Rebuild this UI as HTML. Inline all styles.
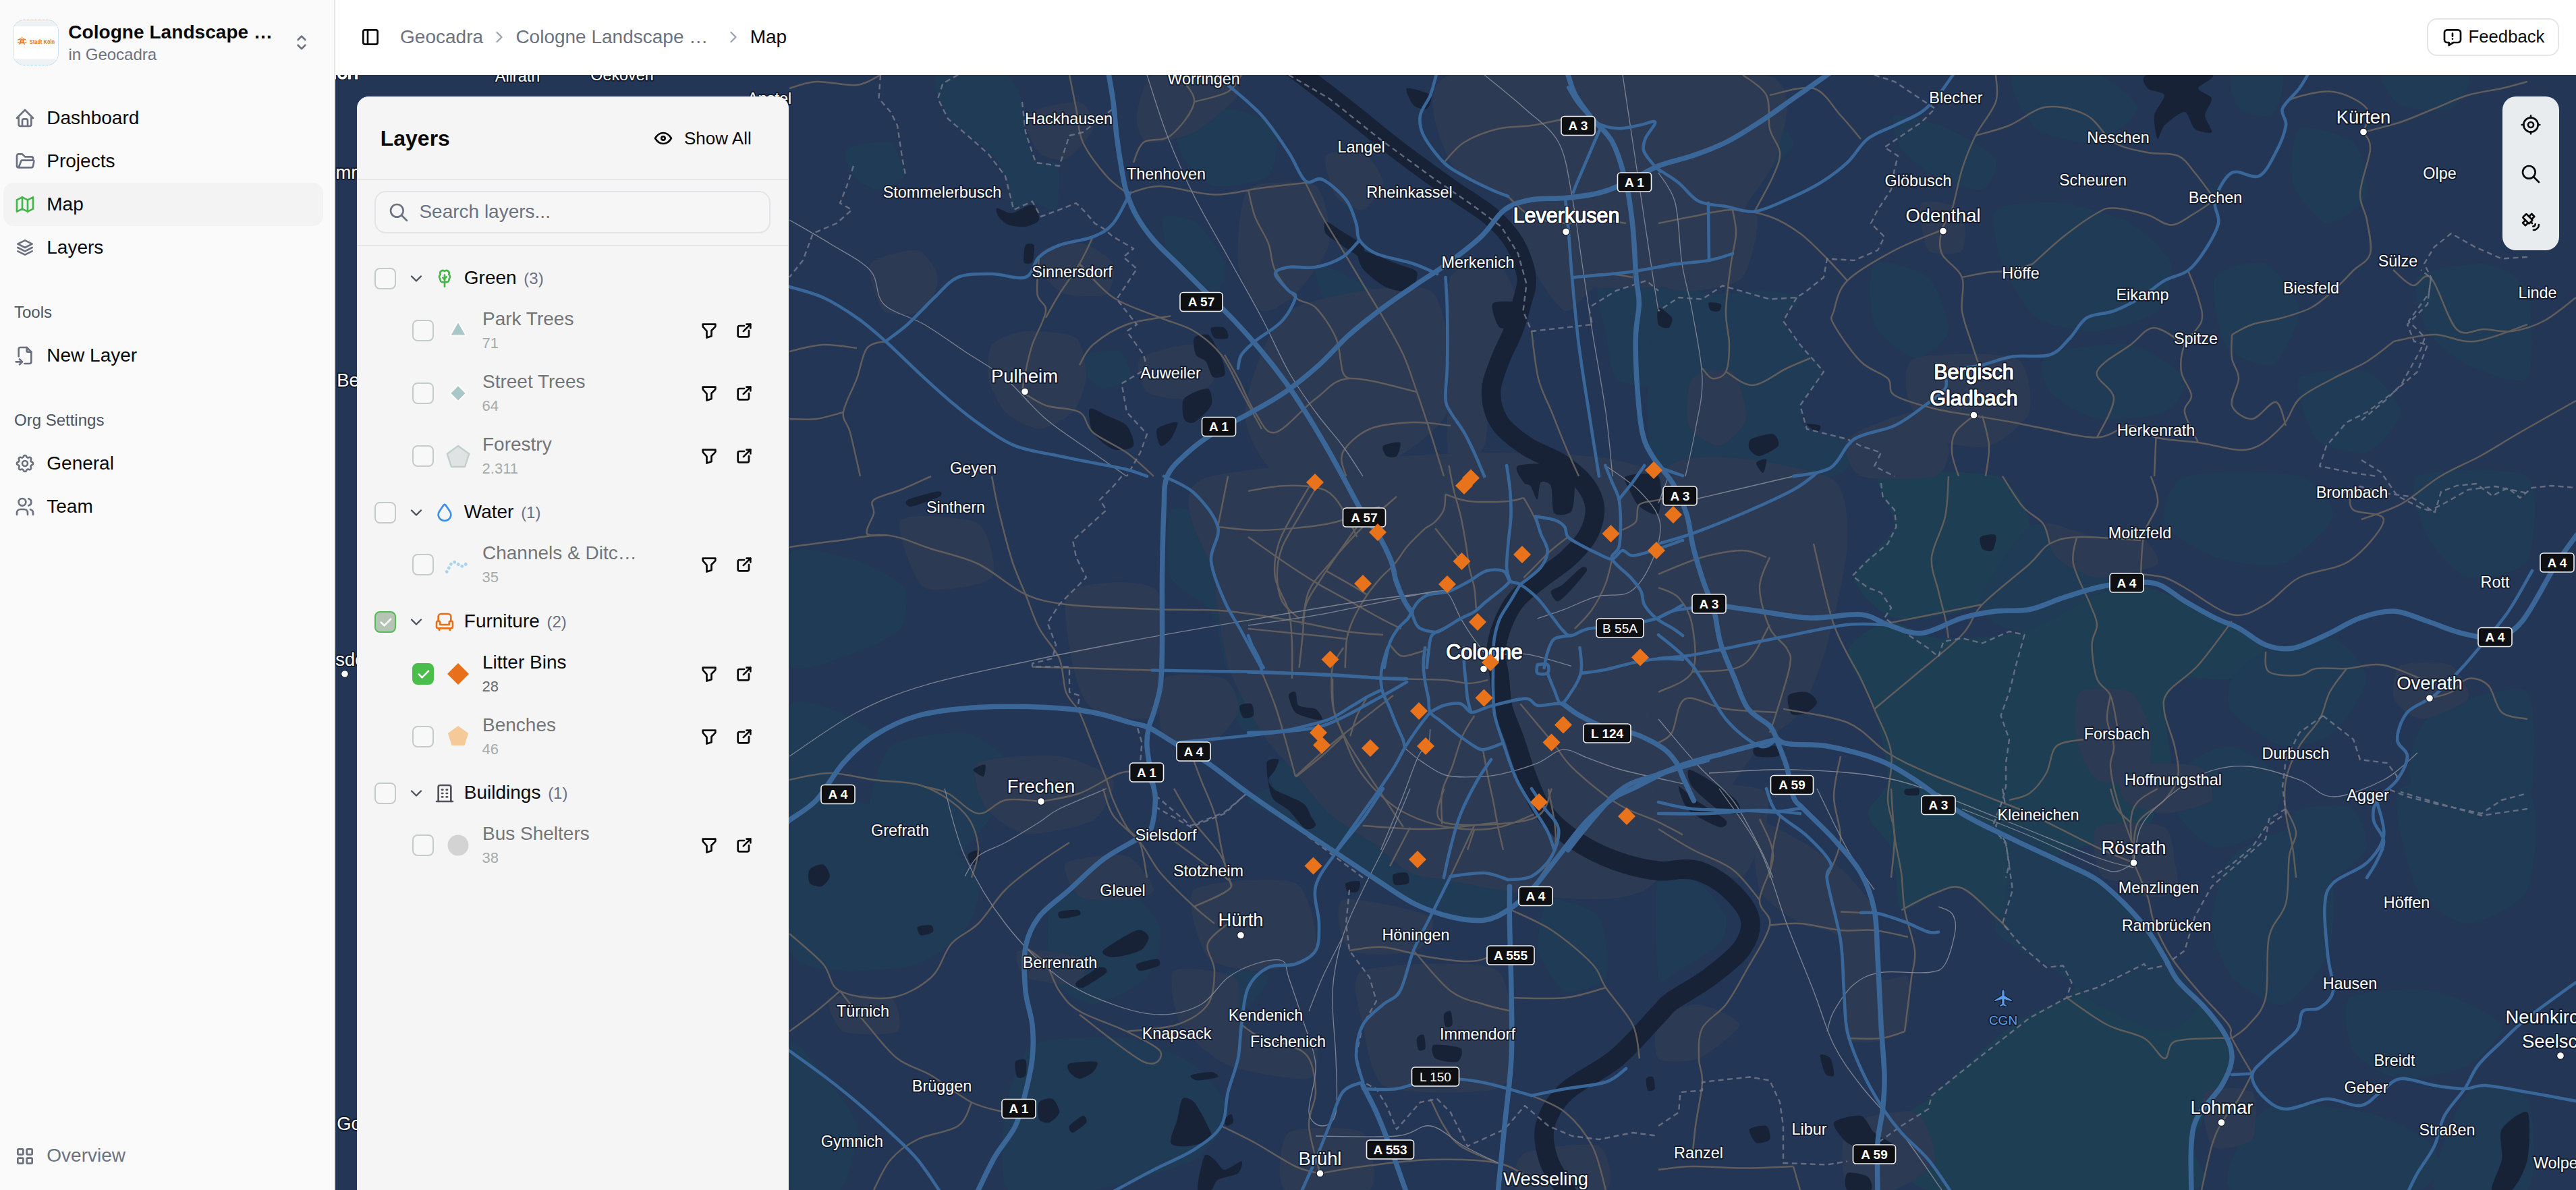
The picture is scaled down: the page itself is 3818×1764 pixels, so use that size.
<!DOCTYPE html>
<html lang="en"><head><meta charset="utf-8"><title>Map - Geocadra</title>
<style>
html,body{margin:0;padding:0}
body{width:3818px;height:1764px;overflow:hidden;position:relative;background:#fff;font-family:"Liberation Sans",sans-serif}
.t{position:absolute;white-space:nowrap}
.ic{position:absolute;display:block;overflow:visible}
#sb{position:absolute;left:0;top:0;width:495px;height:1764px;background:#fafafa;border-right:2px solid #e5e5e5}
#logo{position:absolute;left:19px;top:29px;width:66px;height:66px;border-radius:17px;background:#eff2f5;border:1px dotted #a6d2f3;overflow:hidden}
#logo svg{display:block;margin:-1px}
#act{position:absolute;left:5px;top:271px;width:474px;height:64px;border-radius:15px;background:#f3f3f4}
#top{position:absolute;left:497px;top:0;width:3321px;height:111px;background:#fff}
#fb{position:absolute;left:3597px;top:27px;width:192px;height:52px;border:2px solid #e5e5e5;border-radius:15px;background:#fff}
#map{position:absolute;left:497px;top:111px;width:3321px;height:1653px;display:block}
#panel{position:absolute;left:529px;top:143px;width:638px;height:1700px;border-radius:17px;background:#f5f5f5;border:1px solid #e9e9ea}
#panel .hl{position:absolute;left:0;width:638px;height:2px;background:#e6e6e7}
#search{position:absolute;left:555px;top:283px;width:583px;height:59px;border:2px solid #e4e4e6;border-radius:17px;background:#f6f6f6}
.cb{position:absolute;width:28px;height:28px;border:2px solid #c3cdc6;border-radius:8px;background:#f8f8f8}
.cb.on{background:#4bbd4b;border-color:#4bbd4b}
.cb.half{background:#b5c4b4;border-color:#55bd55}
#ctl{position:absolute;left:3709px;top:143px;width:84px;height:228px;border-radius:20px;background:#e9ecef}
</style></head>
<body>
<svg id="map" viewBox="497 111 3321 1653">
<rect x="497" y="111" width="3321" height="1653" fill="#243656"/>
<g fill="#203b55">
<path d="M1390.0 111.0 C1378.6 115.1 1390.2 137.8 1392.5 146.0 C1394.8 154.2 1403.3 173.4 1410.0 181.0 C1416.7 188.6 1441.8 204.0 1450.0 211.0 C1458.2 218.0 1474.8 233.4 1480.0 241.0 C1485.2 248.6 1492.7 267.8 1495.0 276.0 C1497.3 284.2 1495.9 308.2 1500.0 311.0 C1504.1 313.8 1522.4 300.0 1530.0 300.0 C1537.6 300.0 1560.3 315.6 1565.0 311.0 C1569.7 306.4 1570.0 269.2 1570.0 261.0 C1570.0 252.8 1569.1 243.6 1565.0 241.0 C1560.9 238.4 1540.2 243.8 1535.0 238.5 C1529.8 233.2 1522.3 206.2 1520.0 196.0 C1517.7 185.8 1518.5 160.9 1515.0 151.0 C1511.5 141.1 1504.6 115.7 1490.0 111.0 C1475.4 106.3 1401.4 106.9 1390.0 111.0Z"/>
<path d="M1745.0 186.0 C1752.6 177.2 1803.1 160.4 1820.0 161.0 C1836.9 161.6 1883.0 179.3 1890.0 191.0 C1897.0 202.7 1890.5 251.1 1880.0 261.0 C1869.5 270.9 1814.6 278.9 1800.0 276.0 C1785.4 273.1 1761.4 246.5 1755.0 236.0 C1748.6 225.5 1737.4 194.8 1745.0 186.0Z"/>
<path d="M1725.0 321.0 C1730.2 316.3 1764.5 322.8 1775.0 331.0 C1785.5 339.2 1811.5 379.3 1815.0 391.0 C1818.5 402.7 1811.4 428.7 1805.0 431.0 C1798.6 433.3 1768.8 418.0 1760.0 411.0 C1751.2 404.0 1734.1 381.5 1730.0 371.0 C1725.9 360.5 1719.8 325.7 1725.0 321.0Z"/>
<path d="M1610.0 526.0 C1615.8 521.9 1652.4 516.9 1660.0 521.0 C1667.6 525.1 1677.9 554.6 1675.0 561.0 C1672.1 567.4 1642.6 576.6 1635.0 576.0 C1627.4 575.4 1612.9 561.8 1610.0 556.0 C1607.1 550.2 1604.2 530.1 1610.0 526.0Z"/>
<path d="M1950.0 391.0 C1955.8 386.3 2004.8 412.8 2020.0 421.0 C2035.2 429.2 2068.3 449.3 2080.0 461.0 C2091.7 472.7 2117.7 509.3 2120.0 521.0 C2122.3 532.7 2109.3 562.2 2100.0 561.0 C2090.7 559.8 2055.2 522.7 2040.0 511.0 C2024.8 499.3 1980.5 475.0 1970.0 461.0 C1959.5 447.0 1944.2 395.7 1950.0 391.0Z"/>
<path d="M1255.0 221.0 C1261.4 215.2 1310.1 206.3 1320.0 211.0 C1329.9 215.7 1342.3 252.8 1340.0 261.0 C1337.7 269.2 1308.8 281.0 1300.0 281.0 C1291.2 281.0 1270.2 268.0 1265.0 261.0 C1259.8 254.0 1248.6 226.8 1255.0 221.0Z"/>
<path d="M2370.0 421.0 C2379.1 409.3 2447.7 374.7 2458.0 391.0 C2468.3 407.3 2465.3 541.2 2458.0 561.0 C2450.7 580.8 2404.1 569.2 2395.0 561.0 C2385.9 552.8 2382.9 507.3 2380.0 491.0 C2377.1 474.7 2360.9 432.7 2370.0 421.0Z"/>
<path d="M2160.0 126.0 C2168.2 119.0 2228.3 131.1 2240.0 141.0 C2251.7 150.9 2263.5 199.3 2260.0 211.0 C2256.5 222.7 2220.5 242.2 2210.0 241.0 C2199.5 239.8 2175.8 214.4 2170.0 201.0 C2164.2 187.6 2151.8 133.0 2160.0 126.0Z"/>
<path d="M2458.0 431.0 C2466.8 399.5 2514.3 436.0 2533.0 436.0 C2551.7 436.0 2602.2 430.4 2618.0 431.0 C2633.8 431.6 2665.1 435.8 2668.0 441.0 C2670.9 446.2 2643.0 467.8 2643.0 476.0 C2643.0 484.2 2661.0 502.2 2668.0 511.0 C2675.0 519.8 2703.0 540.5 2703.0 551.0 C2703.0 561.5 2670.9 591.1 2668.0 601.0 C2665.1 610.9 2669.8 630.2 2678.0 636.0 C2686.2 641.8 2733.3 642.8 2738.0 651.0 C2742.7 659.2 2750.7 699.6 2718.0 706.0 C2685.3 712.4 2488.3 738.1 2458.0 706.0 C2427.7 673.9 2449.2 462.5 2458.0 431.0Z"/>
<path d="M2458.0 161.0 C2466.8 149.9 2515.5 141.0 2533.0 141.0 C2550.5 141.0 2593.4 152.8 2608.0 161.0 C2622.6 169.2 2658.0 199.3 2658.0 211.0 C2658.0 222.7 2622.6 253.4 2608.0 261.0 C2593.4 268.6 2550.5 278.9 2533.0 276.0 C2515.5 273.1 2466.8 249.4 2458.0 236.0 C2449.2 222.6 2449.2 172.1 2458.0 161.0Z"/>
<path d="M2808.0 171.0 C2816.2 167.5 2870.5 183.4 2888.0 191.0 C2905.5 198.6 2952.2 225.5 2958.0 236.0 C2963.8 246.5 2948.5 278.1 2938.0 281.0 C2927.5 283.9 2882.0 268.0 2868.0 261.0 C2854.0 254.0 2825.0 231.5 2818.0 221.0 C2811.0 210.5 2799.8 174.5 2808.0 171.0Z"/>
<path d="M2958.0 311.0 C2968.5 300.5 3034.7 298.7 3058.0 301.0 C3081.3 303.3 3139.3 320.5 3158.0 331.0 C3176.7 341.5 3213.3 375.8 3218.0 391.0 C3222.7 406.2 3210.8 449.3 3198.0 461.0 C3185.2 472.7 3129.0 489.8 3108.0 491.0 C3087.0 492.2 3034.3 482.7 3018.0 471.0 C3001.7 459.3 2975.0 409.7 2968.0 391.0 C2961.0 372.3 2947.5 321.5 2958.0 311.0Z"/>
<path d="M2983.0 111.0 C2993.5 101.7 3086.4 105.2 3108.0 111.0 C3129.6 116.8 3168.0 149.3 3168.0 161.0 C3168.0 172.7 3125.5 207.5 3108.0 211.0 C3090.5 214.5 3032.6 202.7 3018.0 191.0 C3003.4 179.3 2972.5 120.3 2983.0 111.0Z"/>
<path d="M3033.0 526.0 C3047.0 517.8 3134.1 506.9 3158.0 511.0 C3181.9 515.1 3232.2 549.3 3238.0 561.0 C3243.8 572.7 3223.2 604.0 3208.0 611.0 C3192.8 618.0 3127.8 624.5 3108.0 621.0 C3088.2 617.5 3046.8 592.1 3038.0 581.0 C3029.2 569.9 3019.0 534.2 3033.0 526.0Z"/>
<path d="M3283.0 411.0 C3290.0 397.0 3343.4 385.2 3358.0 391.0 C3372.6 396.8 3406.8 443.5 3408.0 461.0 C3409.2 478.5 3380.8 535.2 3368.0 541.0 C3355.2 546.8 3307.9 526.2 3298.0 511.0 C3288.1 495.8 3276.0 425.0 3283.0 411.0Z"/>
<path d="M3408.0 191.0 C3418.5 184.0 3476.3 199.3 3488.0 211.0 C3499.7 222.7 3512.7 277.0 3508.0 291.0 C3503.3 305.0 3460.8 333.3 3448.0 331.0 C3435.2 328.7 3402.7 287.3 3398.0 271.0 C3393.3 254.7 3397.5 198.0 3408.0 191.0Z"/>
<path d="M3583.0 411.0 C3592.9 399.3 3664.0 388.7 3683.0 391.0 C3702.0 393.3 3738.7 411.2 3746.0 431.0 C3753.3 450.8 3756.3 548.2 3746.0 561.0 C3735.7 573.8 3675.3 549.2 3658.0 541.0 C3640.7 532.8 3606.8 506.2 3598.0 491.0 C3589.2 475.8 3573.1 422.7 3583.0 411.0Z"/>
<path d="M3308.0 111.0 C3315.6 105.2 3376.0 104.0 3383.0 111.0 C3390.0 118.0 3375.6 165.2 3368.0 171.0 C3360.4 176.8 3325.0 168.0 3318.0 161.0 C3311.0 154.0 3300.4 116.8 3308.0 111.0Z"/>
<path d="M3408.0 561.0 C3416.8 549.3 3490.5 545.2 3508.0 551.0 C3525.5 556.8 3558.0 597.0 3558.0 611.0 C3558.0 625.0 3522.6 666.3 3508.0 671.0 C3493.4 675.7 3444.7 663.8 3433.0 651.0 C3421.3 638.2 3399.2 572.7 3408.0 561.0Z"/>
<path d="M2778.0 391.0 C2787.3 382.8 2845.2 399.3 2858.0 411.0 C2870.8 422.7 2890.3 477.0 2888.0 491.0 C2885.7 505.0 2850.8 532.2 2838.0 531.0 C2825.2 529.8 2785.0 497.3 2778.0 481.0 C2771.0 464.7 2768.7 399.2 2778.0 391.0Z"/>
<path d="M3533.0 111.0 C3544.7 105.8 3646.3 105.2 3658.0 111.0 C3669.7 116.8 3644.7 155.8 3633.0 161.0 C3621.3 166.2 3569.7 161.8 3558.0 156.0 C3546.3 150.2 3521.3 116.2 3533.0 111.0Z"/>
<path d="M1170.0 821.0 C1181.7 802.9 1250.2 825.2 1270.0 831.0 C1289.8 836.8 1332.4 859.3 1340.0 871.0 C1347.6 882.7 1343.2 919.9 1335.0 931.0 C1326.8 942.1 1289.2 959.6 1270.0 966.0 C1250.8 972.4 1181.7 1002.9 1170.0 986.0 C1158.3 969.1 1158.3 839.1 1170.0 821.0Z"/>
<path d="M1170.0 1046.0 C1178.8 1028.5 1230.4 1050.8 1245.0 1056.0 C1259.6 1061.2 1294.4 1082.2 1295.0 1091.0 C1295.6 1099.8 1261.1 1118.8 1250.0 1131.0 C1238.9 1143.2 1209.3 1187.2 1200.0 1196.0 C1190.7 1204.8 1173.5 1223.5 1170.0 1206.0 C1166.5 1188.5 1161.2 1063.5 1170.0 1046.0Z"/>
<path d="M1320.0 1106.0 C1336.9 1092.0 1410.2 1083.7 1430.0 1086.0 C1449.8 1088.3 1487.7 1117.8 1490.0 1126.0 C1492.3 1134.2 1452.3 1146.7 1450.0 1156.0 C1447.7 1165.3 1472.3 1194.3 1470.0 1206.0 C1467.7 1217.7 1441.7 1244.9 1430.0 1256.0 C1418.3 1267.1 1388.7 1295.8 1370.0 1301.0 C1351.3 1306.2 1279.9 1312.1 1270.0 1301.0 C1260.1 1289.9 1279.2 1228.8 1285.0 1206.0 C1290.8 1183.2 1303.1 1120.0 1320.0 1106.0Z"/>
<path d="M1735.0 756.0 C1740.8 746.1 1777.4 759.3 1785.0 771.0 C1792.6 782.7 1794.2 834.4 1800.0 856.0 C1805.8 877.6 1828.0 939.7 1835.0 956.0 C1842.0 972.3 1861.8 991.3 1860.0 996.0 C1858.2 1000.7 1827.6 1006.5 1820.0 996.0 C1812.4 985.5 1804.9 922.3 1795.0 906.0 C1785.1 889.7 1742.0 873.5 1735.0 856.0 C1728.0 838.5 1729.2 765.9 1735.0 756.0Z"/>
<path d="M1835.0 1026.0 C1849.0 1019.0 1944.2 1016.3 1960.0 1021.0 C1975.8 1025.7 1977.6 1058.4 1970.0 1066.0 C1962.4 1073.6 1910.2 1084.2 1895.0 1086.0 C1879.8 1087.8 1847.0 1088.0 1840.0 1081.0 C1833.0 1074.0 1821.0 1033.0 1835.0 1026.0Z"/>
<path d="M1880.0 1121.0 C1886.4 1118.1 1933.7 1146.1 1950.0 1156.0 C1966.3 1165.9 2006.0 1194.3 2020.0 1206.0 C2034.0 1217.7 2066.5 1247.2 2070.0 1256.0 C2073.5 1264.8 2061.7 1283.9 2050.0 1281.0 C2038.3 1278.1 1988.1 1242.7 1970.0 1231.0 C1951.9 1219.3 1905.5 1193.8 1895.0 1181.0 C1884.5 1168.2 1873.6 1123.9 1880.0 1121.0Z"/>
<path d="M1850.0 1023.0 C1862.6 1015.7 1944.3 1013.6 1958.4 1018.0 C1972.5 1022.4 1974.8 1053.8 1971.0 1060.8 C1967.2 1067.9 1939.7 1076.1 1925.6 1078.5 C1911.5 1080.8 1858.8 1087.5 1850.0 1081.0 C1841.2 1074.5 1837.4 1030.4 1850.0 1023.0Z"/>
<path d="M2429.7 1086.0 C2437.2 1083.4 2486.5 1092.3 2494.0 1101.2 C2501.5 1110.0 2498.6 1155.8 2494.0 1161.6 C2489.4 1167.5 2462.4 1156.0 2454.9 1151.6 C2447.4 1147.2 2432.7 1131.5 2429.7 1123.8 C2426.8 1116.2 2422.2 1088.7 2429.7 1086.0Z"/>
<path d="M2149.9 1136.4 C2152.0 1135.3 2159.6 1147.2 2162.5 1151.6 C2165.5 1156.0 2174.0 1168.4 2175.1 1174.2 C2176.3 1180.1 2175.9 1198.7 2172.6 1202.0 C2169.4 1205.2 2150.7 1206.7 2147.4 1202.0 C2144.2 1197.3 2144.6 1169.3 2144.9 1161.6 C2145.2 1154.0 2147.9 1137.6 2149.9 1136.4Z"/>
<path d="M2379.3 1224.7 C2386.7 1219.1 2416.3 1211.2 2429.7 1212.1 C2443.1 1212.9 2486.5 1226.6 2494.0 1232.2 C2501.5 1237.8 2508.8 1256.7 2494.0 1259.9 C2479.1 1263.2 2380.1 1264.1 2366.7 1259.9 C2353.3 1255.8 2372.0 1230.2 2379.3 1224.7Z"/>
<path d="M1958.4 690.0 C1959.6 687.9 1974.9 690.5 1981.1 697.6 C1987.2 704.6 2003.7 737.8 2011.3 750.5 C2019.0 763.1 2040.1 795.4 2046.6 805.9 C2053.1 816.5 2065.6 837.1 2066.8 841.2 C2067.9 845.3 2060.8 845.6 2056.7 841.2 C2052.6 836.8 2037.9 813.4 2031.5 803.4 C2025.0 793.4 2008.3 765.8 2001.2 755.5 C1994.2 745.2 1976.0 722.9 1971.0 715.2 C1966.0 707.6 1957.2 692.1 1958.4 690.0Z"/>
<path d="M2738.0 966.0 C2740.3 950.8 2782.2 923.3 2798.0 921.0 C2813.8 918.7 2849.7 944.2 2873.0 946.0 C2896.3 947.8 2970.6 943.6 2998.0 936.0 C3025.4 928.4 3086.4 888.6 3108.0 881.0 C3129.6 873.4 3159.7 865.8 3183.0 871.0 C3206.3 876.2 3287.6 914.9 3308.0 926.0 C3328.4 937.1 3358.0 956.7 3358.0 966.0 C3358.0 975.3 3322.0 1001.3 3308.0 1006.0 C3294.0 1010.7 3249.7 1001.3 3238.0 1006.0 C3226.3 1010.7 3210.3 1030.8 3208.0 1046.0 C3205.7 1061.2 3219.2 1118.5 3218.0 1136.0 C3216.8 1153.5 3203.8 1183.2 3198.0 1196.0 C3192.2 1208.8 3181.4 1239.0 3168.0 1246.0 C3154.6 1253.0 3107.5 1249.6 3083.0 1256.0 C3058.5 1262.4 2988.9 1295.8 2958.0 1301.0 C2927.1 1306.2 2836.1 1306.2 2818.0 1301.0 C2799.9 1295.8 2808.8 1267.1 2803.0 1256.0 C2797.2 1244.9 2768.6 1217.7 2768.0 1206.0 C2767.4 1194.3 2796.8 1174.1 2798.0 1156.0 C2799.2 1137.9 2785.0 1073.2 2778.0 1051.0 C2771.0 1028.8 2735.7 981.2 2738.0 966.0Z" fill="#1e3e53"/>
<path d="M2788.0 706.0 C2805.5 697.2 2932.3 697.2 2958.0 706.0 C2983.7 714.8 3010.9 758.8 3008.0 781.0 C3005.1 803.2 2956.3 880.2 2933.0 896.0 C2909.7 911.8 2829.6 920.7 2808.0 916.0 C2786.4 911.3 2748.0 871.8 2748.0 856.0 C2748.0 840.2 2803.3 798.5 2808.0 781.0 C2812.7 763.5 2770.5 714.8 2788.0 706.0Z" fill="#1e3e53"/>
<path d="M3008.0 781.0 C3025.5 769.3 3065.5 787.2 3083.0 796.0 C3100.5 804.8 3155.1 846.1 3158.0 856.0 C3160.9 865.9 3126.7 871.7 3108.0 881.0 C3089.3 890.3 3018.4 934.2 2998.0 936.0 C2977.6 937.8 2931.8 914.1 2933.0 896.0 C2934.2 877.9 2990.5 792.7 3008.0 781.0Z"/>
<path d="M3238.0 706.0 C3261.3 697.8 3382.3 699.0 3408.0 706.0 C3433.7 713.0 3460.9 750.8 3458.0 766.0 C3455.1 781.2 3403.4 829.0 3383.0 836.0 C3362.6 843.0 3303.4 833.0 3283.0 826.0 C3262.6 819.0 3213.2 790.0 3208.0 776.0 C3202.8 762.0 3214.7 714.2 3238.0 706.0Z"/>
<path d="M3358.0 966.0 C3375.5 959.0 3440.5 941.3 3458.0 946.0 C3475.5 950.7 3508.0 989.7 3508.0 1006.0 C3508.0 1022.3 3472.6 1074.3 3458.0 1086.0 C3443.4 1097.7 3400.5 1109.5 3383.0 1106.0 C3365.5 1102.5 3316.8 1067.7 3308.0 1056.0 C3299.2 1044.3 3302.2 1016.5 3308.0 1006.0 C3313.8 995.5 3340.5 973.0 3358.0 966.0Z"/>
<path d="M3583.0 706.0 C3600.3 695.5 3727.0 691.4 3746.0 706.0 C3765.0 720.6 3756.3 813.5 3746.0 831.0 C3735.7 848.5 3675.3 860.1 3658.0 856.0 C3640.7 851.9 3606.8 813.5 3598.0 796.0 C3589.2 778.5 3565.7 716.5 3583.0 706.0Z"/>
<path d="M3608.0 1056.0 C3628.2 1044.9 3729.9 1008.5 3746.0 1026.0 C3762.1 1043.5 3756.3 1179.2 3746.0 1206.0 C3735.7 1232.8 3677.0 1256.0 3658.0 1256.0 C3639.0 1256.0 3592.9 1221.8 3583.0 1206.0 C3573.1 1190.2 3570.1 1138.5 3573.0 1121.0 C3575.9 1103.5 3587.8 1067.1 3608.0 1056.0Z"/>
<path d="M3238.0 1136.0 C3247.3 1124.3 3291.1 1103.7 3308.0 1106.0 C3324.9 1108.3 3377.2 1141.4 3383.0 1156.0 C3388.8 1170.6 3369.7 1219.3 3358.0 1231.0 C3346.3 1242.7 3298.2 1258.9 3283.0 1256.0 C3267.8 1253.1 3233.2 1220.0 3228.0 1206.0 C3222.8 1192.0 3228.7 1147.7 3238.0 1136.0Z"/>
<path d="M3398.0 1206.0 C3409.7 1193.8 3470.2 1190.2 3483.0 1196.0 C3495.8 1201.8 3510.9 1243.8 3508.0 1256.0 C3505.1 1268.2 3472.6 1295.8 3458.0 1301.0 C3443.4 1306.2 3390.0 1312.1 3383.0 1301.0 C3376.0 1289.9 3386.3 1218.2 3398.0 1206.0Z"/>
<path d="M2548.0 916.0 C2555.6 909.0 2613.7 917.8 2623.0 926.0 C2632.3 934.2 2635.6 979.0 2628.0 986.0 C2620.4 993.0 2567.3 994.2 2558.0 986.0 C2548.7 977.8 2540.4 923.0 2548.0 916.0Z"/>
<path d="M1170.0 1199.0 C1181.7 1173.3 1245.5 1185.5 1270.0 1189.0 C1294.5 1192.5 1359.0 1215.0 1380.0 1229.0 C1401.0 1243.0 1444.2 1291.5 1450.0 1309.0 C1455.8 1326.5 1440.5 1365.0 1430.0 1379.0 C1419.5 1393.0 1381.0 1422.0 1360.0 1429.0 C1339.0 1436.0 1272.2 1441.3 1250.0 1439.0 C1227.8 1436.7 1179.3 1437.0 1170.0 1409.0 C1160.7 1381.0 1158.3 1224.7 1170.0 1199.0Z"/>
<path d="M1560.0 1334.0 C1572.8 1318.8 1651.3 1313.8 1670.0 1319.0 C1688.7 1324.2 1716.5 1363.8 1720.0 1379.0 C1723.5 1394.2 1711.7 1436.2 1700.0 1449.0 C1688.3 1461.8 1636.3 1489.0 1620.0 1489.0 C1603.7 1489.0 1567.0 1467.1 1560.0 1449.0 C1553.0 1430.9 1547.2 1349.2 1560.0 1334.0Z"/>
<path d="M1530.0 1549.0 C1551.0 1536.2 1642.0 1535.5 1670.0 1539.0 C1698.0 1542.5 1752.5 1566.2 1770.0 1579.0 C1787.5 1591.8 1820.0 1632.7 1820.0 1649.0 C1820.0 1665.3 1793.3 1705.6 1770.0 1719.0 C1746.7 1732.4 1652.1 1758.8 1620.0 1764.0 C1587.9 1769.2 1510.2 1777.4 1495.0 1764.0 C1479.8 1750.6 1485.9 1674.1 1490.0 1649.0 C1494.1 1623.9 1509.0 1561.8 1530.0 1549.0Z"/>
<path d="M1850.0 1189.0 C1854.7 1195.4 1904.8 1215.2 1920.0 1224.0 C1935.2 1232.8 1966.0 1254.7 1980.0 1264.0 C1994.0 1273.3 2026.6 1295.2 2040.0 1304.0 C2053.4 1312.8 2082.2 1332.6 2095.0 1339.0 C2107.8 1345.4 2135.4 1356.7 2150.0 1359.0 C2164.6 1361.3 2210.7 1363.7 2220.0 1359.0 C2229.3 1354.3 2238.2 1326.0 2230.0 1319.0 C2221.8 1312.0 2168.7 1303.1 2150.0 1299.0 C2131.3 1294.9 2088.1 1291.6 2070.0 1284.0 C2051.9 1276.4 2012.5 1246.2 1995.0 1234.0 C1977.5 1221.8 1933.4 1186.6 1920.0 1179.0 C1906.6 1171.4 1888.2 1167.8 1880.0 1169.0 C1871.8 1170.2 1845.3 1182.6 1850.0 1189.0Z"/>
<path d="M1820.0 1439.0 C1830.5 1434.3 1877.7 1442.0 1880.0 1449.0 C1882.3 1456.0 1850.5 1494.3 1840.0 1499.0 C1829.5 1503.7 1792.3 1496.0 1790.0 1489.0 C1787.7 1482.0 1809.5 1443.7 1820.0 1439.0Z"/>
<path d="M1170.0 1549.0 C1175.8 1529.2 1208.3 1580.0 1220.0 1594.0 C1231.7 1608.0 1267.1 1649.2 1270.0 1669.0 C1272.9 1688.8 1256.7 1752.9 1245.0 1764.0 C1233.3 1775.1 1178.8 1789.1 1170.0 1764.0 C1161.2 1738.9 1164.2 1568.8 1170.0 1549.0Z"/>
<path d="M2295.0 1334.0 C2305.5 1328.2 2360.1 1345.6 2370.0 1359.0 C2379.9 1372.4 2385.8 1436.2 2380.0 1449.0 C2374.2 1461.8 2331.7 1473.7 2320.0 1469.0 C2308.3 1464.3 2282.9 1424.8 2280.0 1409.0 C2277.1 1393.2 2284.5 1339.8 2295.0 1334.0Z"/>
<path d="M2808.0 1169.0 C2820.8 1172.5 2938.2 1187.3 2958.0 1199.0 C2977.8 1210.7 2978.0 1248.0 2978.0 1269.0 C2978.0 1290.0 2951.6 1360.3 2958.0 1379.0 C2964.4 1397.7 3019.6 1419.7 3033.0 1429.0 C3046.4 1438.3 3069.5 1453.2 3073.0 1459.0 C3076.5 1464.8 3073.5 1472.0 3063.0 1479.0 C3052.5 1486.0 3006.9 1501.5 2983.0 1519.0 C2959.1 1536.5 2878.4 1611.5 2858.0 1629.0 C2837.6 1646.5 2808.0 1653.2 2808.0 1669.0 C2808.0 1684.8 2806.7 1752.9 2858.0 1764.0 C2909.3 1775.1 3202.5 1772.2 3248.0 1764.0 C3293.5 1755.8 3242.8 1712.1 3248.0 1694.0 C3253.2 1675.9 3286.0 1623.6 3293.0 1609.0 C3300.0 1594.4 3310.9 1582.4 3308.0 1569.0 C3305.1 1555.6 3279.7 1511.5 3268.0 1494.0 C3256.3 1476.5 3222.0 1437.1 3208.0 1419.0 C3194.0 1400.9 3165.5 1355.3 3148.0 1339.0 C3130.5 1322.7 3086.0 1294.8 3058.0 1279.0 C3030.0 1263.2 2932.5 1216.8 2908.0 1204.0 C2883.5 1191.2 2859.7 1173.1 2848.0 1169.0 C2836.3 1164.9 2795.2 1165.5 2808.0 1169.0Z" fill="#1e3e53"/>
<path d="M2958.0 1199.0 C2967.3 1200.2 3035.8 1262.7 3058.0 1279.0 C3080.2 1295.3 3130.5 1322.7 3148.0 1339.0 C3165.5 1355.3 3195.2 1401.5 3208.0 1419.0 C3220.8 1436.5 3258.0 1476.2 3258.0 1489.0 C3258.0 1501.8 3225.5 1529.0 3208.0 1529.0 C3190.5 1529.0 3123.8 1497.2 3108.0 1489.0 C3092.2 1480.8 3081.8 1466.0 3073.0 1459.0 C3064.2 1452.0 3046.4 1438.3 3033.0 1429.0 C3019.6 1419.7 2964.4 1397.7 2958.0 1379.0 C2951.6 1360.3 2978.0 1290.0 2978.0 1269.0 C2978.0 1248.0 2948.7 1197.8 2958.0 1199.0Z"/>
<path d="M3308.0 1269.0 C3323.2 1252.7 3390.5 1224.3 3408.0 1229.0 C3425.5 1233.7 3453.3 1286.8 3458.0 1309.0 C3462.7 1331.2 3456.8 1398.0 3448.0 1419.0 C3439.2 1440.0 3399.3 1485.5 3383.0 1489.0 C3366.7 1492.5 3320.2 1463.0 3308.0 1449.0 C3295.8 1435.0 3278.0 1390.0 3278.0 1369.0 C3278.0 1348.0 3292.8 1285.3 3308.0 1269.0Z"/>
<path d="M3558.0 1169.0 C3577.0 1151.5 3724.1 1151.5 3746.0 1169.0 C3767.9 1186.5 3756.3 1295.7 3746.0 1319.0 C3735.7 1342.3 3677.0 1369.0 3658.0 1369.0 C3639.0 1369.0 3594.7 1342.3 3583.0 1319.0 C3571.3 1295.7 3539.0 1186.5 3558.0 1169.0Z"/>
<path d="M3483.0 1479.0 C3497.0 1468.5 3581.8 1464.3 3608.0 1469.0 C3634.2 1473.7 3702.2 1506.2 3708.0 1519.0 C3713.8 1531.8 3675.5 1569.7 3658.0 1579.0 C3640.5 1588.3 3577.8 1601.3 3558.0 1599.0 C3538.2 1596.7 3496.8 1573.0 3488.0 1559.0 C3479.2 1545.0 3469.0 1489.5 3483.0 1479.0Z"/>
<path d="M3358.0 1644.0 C3381.3 1630.6 3478.8 1642.6 3508.0 1649.0 C3537.2 1655.4 3599.2 1685.6 3608.0 1699.0 C3616.8 1712.4 3618.0 1756.4 3583.0 1764.0 C3548.0 1771.6 3334.2 1778.0 3308.0 1764.0 C3281.8 1750.0 3334.7 1657.4 3358.0 1644.0Z"/>
<path d="M2458.0 1299.0 C2465.0 1282.7 2506.3 1302.0 2518.0 1309.0 C2529.7 1316.0 2554.5 1348.5 2558.0 1359.0 C2561.5 1369.5 2556.2 1389.7 2548.0 1399.0 C2539.8 1408.3 2498.5 1433.2 2488.0 1439.0 C2477.5 1444.8 2461.5 1465.3 2458.0 1449.0 C2454.5 1432.7 2451.0 1315.3 2458.0 1299.0Z"/>
<path d="M3658.0 1619.0 C3674.1 1603.2 3735.7 1612.1 3746.0 1629.0 C3756.3 1645.9 3762.1 1748.2 3746.0 1764.0 C3729.9 1779.8 3618.3 1780.9 3608.0 1764.0 C3597.7 1747.1 3641.9 1634.8 3658.0 1619.0Z"/>
<path d="M2803.0 1169.0 C2821.7 1157.3 2947.6 1157.3 2968.0 1169.0 C2988.4 1180.7 2978.6 1246.8 2978.0 1269.0 C2977.4 1291.2 2971.2 1353.5 2963.0 1359.0 C2954.8 1364.5 2919.1 1320.6 2908.0 1316.5 C2896.9 1312.4 2878.5 1320.2 2868.0 1324.0 C2857.5 1327.8 2825.0 1355.4 2818.0 1349.0 C2811.0 1342.6 2809.8 1290.0 2808.0 1269.0 C2806.2 1248.0 2784.3 1180.7 2803.0 1169.0Z" fill="#1e3e53"/>
</g>
<g fill="#2c3a54">
<path d="M2150.0 111.0 C2204.4 95.8 2559.8 97.6 2616.4 111.0 C2673.0 124.4 2638.7 202.8 2635.1 226.0 C2631.4 249.3 2592.9 292.6 2585.3 310.0 C2577.7 327.4 2580.7 362.2 2569.8 375.3 C2558.9 388.4 2519.2 416.5 2492.0 421.9 C2464.8 427.4 2365.6 430.7 2336.6 421.9 C2307.5 413.2 2254.9 361.8 2243.3 347.3 C2231.7 332.8 2247.9 309.9 2237.1 297.6 C2226.2 285.2 2160.2 263.4 2150.0 241.6 C2139.8 219.8 2095.6 126.2 2150.0 111.0Z"/>
<path d="M1470.0 511.0 C1476.4 502.8 1505.4 492.2 1520.0 491.0 C1534.6 489.8 1584.5 492.8 1595.0 501.0 C1605.5 509.2 1610.6 548.2 1610.0 561.0 C1609.4 573.8 1598.2 602.2 1590.0 611.0 C1581.8 619.8 1551.7 636.0 1540.0 636.0 C1528.3 636.0 1498.8 619.8 1490.0 611.0 C1481.2 602.2 1467.3 572.7 1465.0 561.0 C1462.7 549.3 1463.6 519.2 1470.0 511.0Z"/>
<path d="M1545.0 371.0 C1551.4 365.2 1592.8 358.7 1605.0 361.0 C1617.2 363.3 1645.9 382.2 1650.0 391.0 C1654.1 399.8 1648.2 430.8 1640.0 436.0 C1631.8 441.2 1590.5 438.9 1580.0 436.0 C1569.5 433.1 1554.1 418.6 1550.0 411.0 C1545.9 403.4 1538.6 376.8 1545.0 371.0Z"/>
<path d="M1290.0 391.0 C1295.8 380.5 1348.3 368.7 1360.0 371.0 C1371.7 373.3 1388.8 400.5 1390.0 411.0 C1391.2 421.5 1379.3 455.2 1370.0 461.0 C1360.7 466.8 1319.3 469.2 1310.0 461.0 C1300.7 452.8 1284.2 401.5 1290.0 391.0Z"/>
<path d="M1710.0 111.0 C1725.2 104.0 1800.4 107.5 1815.0 111.0 C1829.6 114.5 1840.2 131.1 1835.0 141.0 C1829.8 150.9 1785.8 187.8 1770.0 196.0 C1754.2 204.2 1709.9 213.9 1700.0 211.0 C1690.1 208.1 1683.8 182.7 1685.0 171.0 C1686.2 159.3 1694.8 118.0 1710.0 111.0Z"/>
<path d="M1850.0 281.0 C1863.4 267.6 1936.0 266.7 1950.0 276.0 C1964.0 285.3 1973.5 342.3 1970.0 361.0 C1966.5 379.7 1931.7 424.3 1920.0 436.0 C1908.3 447.7 1879.9 466.2 1870.0 461.0 C1860.1 455.8 1837.3 412.0 1835.0 391.0 C1832.7 370.0 1836.6 294.4 1850.0 281.0Z"/>
<path d="M2245.0 276.0 C2266.9 260.8 2433.2 247.6 2458.0 261.0 C2482.8 274.4 2468.3 372.3 2458.0 391.0 C2447.7 409.7 2386.1 412.8 2370.0 421.0 C2353.9 429.2 2331.7 464.5 2320.0 461.0 C2308.3 457.5 2278.8 412.6 2270.0 391.0 C2261.2 369.4 2223.1 291.2 2245.0 276.0Z"/>
<path d="M1910.0 461.0 C1942.1 440.0 2092.6 413.5 2120.0 431.0 C2147.4 448.5 2156.7 578.9 2145.0 611.0 C2133.3 643.1 2049.2 694.9 2020.0 706.0 C1990.8 717.1 1915.4 717.1 1895.0 706.0 C1874.6 694.9 1843.2 639.6 1845.0 611.0 C1846.8 582.4 1877.9 482.0 1910.0 461.0Z"/>
<path d="M1690.0 531.0 C1698.2 522.8 1757.2 507.5 1770.0 511.0 C1782.8 514.5 1801.2 551.7 1800.0 561.0 C1798.8 570.3 1771.7 588.7 1760.0 591.0 C1748.3 593.3 1708.2 588.0 1700.0 581.0 C1691.8 574.0 1681.8 539.2 1690.0 531.0Z"/>
<path d="M2150.0 411.0 C2158.8 391.2 2208.3 385.2 2220.0 391.0 C2231.7 396.8 2251.2 441.2 2250.0 461.0 C2248.8 480.8 2215.8 537.7 2210.0 561.0 C2204.2 584.3 2207.0 644.1 2200.0 661.0 C2193.0 677.9 2156.4 717.7 2150.0 706.0 C2143.6 694.3 2145.0 595.4 2145.0 561.0 C2145.0 526.6 2141.2 430.8 2150.0 411.0Z"/>
<path d="M1965.0 231.0 C1969.7 223.4 2010.1 221.3 2020.0 226.0 C2029.9 230.7 2050.0 261.1 2050.0 271.0 C2050.0 280.9 2028.2 308.7 2020.0 311.0 C2011.8 313.3 1986.4 300.3 1980.0 291.0 C1973.6 281.7 1960.3 238.6 1965.0 231.0Z"/>
<path d="M1520.0 171.0 C1527.0 162.2 1588.3 148.7 1600.0 151.0 C1611.7 153.3 1622.3 181.1 1620.0 191.0 C1617.7 200.9 1589.3 231.9 1580.0 236.0 C1570.7 240.1 1547.0 233.6 1540.0 226.0 C1533.0 218.4 1513.0 179.8 1520.0 171.0Z"/>
<path d="M2458.0 236.0 C2465.0 223.2 2501.1 291.7 2518.0 301.0 C2534.9 310.3 2595.4 303.2 2603.0 316.0 C2610.6 328.8 2594.1 397.6 2583.0 411.0 C2571.9 424.4 2522.6 431.0 2508.0 431.0 C2493.4 431.0 2463.8 433.8 2458.0 411.0 C2452.2 388.2 2451.0 248.8 2458.0 236.0Z"/>
<path d="M2838.0 531.0 C2856.7 524.0 2968.2 521.7 2988.0 531.0 C3007.8 540.3 3012.7 595.8 3008.0 611.0 C3003.3 626.2 2964.3 656.3 2948.0 661.0 C2931.7 665.7 2882.0 659.2 2868.0 651.0 C2854.0 642.8 2831.5 605.0 2828.0 591.0 C2824.5 577.0 2819.3 538.0 2838.0 531.0Z"/>
<path d="M2738.0 651.0 C2747.3 639.9 2820.5 609.8 2838.0 611.0 C2855.5 612.2 2884.5 649.9 2888.0 661.0 C2891.5 672.1 2883.2 700.8 2868.0 706.0 C2852.8 711.2 2773.2 712.4 2758.0 706.0 C2742.8 699.6 2728.7 662.1 2738.0 651.0Z"/>
<path d="M2848.0 301.0 C2853.8 294.0 2901.0 302.8 2908.0 311.0 C2915.0 319.2 2913.8 364.0 2908.0 371.0 C2902.2 378.0 2865.0 379.2 2858.0 371.0 C2851.0 362.8 2842.2 308.0 2848.0 301.0Z"/>
<path d="M2508.0 561.0 C2515.6 551.7 2558.7 544.0 2568.0 551.0 C2577.3 558.0 2590.3 608.2 2588.0 621.0 C2585.7 633.8 2557.9 659.8 2548.0 661.0 C2538.1 662.2 2507.7 642.7 2503.0 631.0 C2498.3 619.3 2500.4 570.3 2508.0 561.0Z"/>
<path d="M1795.0 706.0 C1871.8 688.5 2380.7 636.6 2458.0 706.0 C2535.3 775.4 2497.4 1231.6 2458.0 1301.0 C2418.6 1370.4 2168.2 1306.2 2120.0 1301.0 C2071.8 1295.8 2062.5 1267.1 2045.0 1256.0 C2027.5 1244.9 1984.6 1218.8 1970.0 1206.0 C1955.4 1193.2 1931.7 1160.0 1920.0 1146.0 C1908.3 1132.0 1881.7 1104.7 1870.0 1086.0 C1858.3 1067.3 1828.2 1012.8 1820.0 986.0 C1811.8 959.2 1802.9 888.7 1800.0 856.0 C1797.1 823.3 1718.2 723.5 1795.0 706.0Z"/>
<path d="M1585.0 876.0 C1599.6 863.2 1699.5 855.0 1715.0 876.0 C1730.5 897.0 1728.6 1035.6 1717.5 1056.0 C1706.4 1076.4 1634.9 1059.2 1620.0 1051.0 C1605.1 1042.8 1594.1 1006.4 1590.0 986.0 C1585.9 965.6 1570.4 888.8 1585.0 876.0Z"/>
<path d="M1450.0 1131.0 C1462.8 1122.2 1546.7 1118.1 1570.0 1121.0 C1593.3 1123.9 1644.2 1144.9 1650.0 1156.0 C1655.8 1167.1 1635.2 1206.7 1620.0 1216.0 C1604.8 1225.3 1538.7 1238.3 1520.0 1236.0 C1501.3 1233.7 1468.2 1208.2 1460.0 1196.0 C1451.8 1183.8 1437.2 1139.8 1450.0 1131.0Z"/>
<path d="M1335.0 771.0 C1344.3 759.9 1434.2 766.1 1450.0 776.0 C1465.8 785.9 1479.3 844.9 1470.0 856.0 C1460.7 867.1 1385.8 880.9 1370.0 871.0 C1354.2 861.1 1325.7 782.1 1335.0 771.0Z"/>
<path d="M1725.0 1006.0 C1735.5 995.5 1802.2 1000.2 1815.0 1006.0 C1827.8 1011.8 1837.9 1044.3 1835.0 1056.0 C1832.1 1067.7 1802.8 1101.3 1790.0 1106.0 C1777.2 1110.7 1732.6 1107.7 1725.0 1096.0 C1717.4 1084.3 1714.5 1016.5 1725.0 1006.0Z"/>
<path d="M2458.0 706.0 C2487.2 647.7 2675.3 694.3 2708.0 706.0 C2740.7 717.7 2738.0 776.8 2738.0 806.0 C2738.0 835.2 2716.2 926.8 2708.0 956.0 C2699.8 985.2 2679.7 1038.5 2668.0 1056.0 C2656.3 1073.5 2623.8 1088.5 2608.0 1106.0 C2592.2 1123.5 2550.5 1194.3 2533.0 1206.0 C2515.5 1217.7 2466.8 1264.3 2458.0 1206.0 C2449.2 1147.7 2428.8 764.3 2458.0 706.0Z"/>
<path d="M3083.0 1026.0 C3092.3 1017.8 3145.8 1019.0 3158.0 1026.0 C3170.2 1033.0 3185.7 1070.8 3188.0 1086.0 C3190.3 1101.2 3187.3 1147.8 3178.0 1156.0 C3168.7 1164.2 3119.7 1163.0 3108.0 1156.0 C3096.3 1149.0 3080.9 1111.2 3078.0 1096.0 C3075.1 1080.8 3073.7 1034.2 3083.0 1026.0Z"/>
<path d="M3108.0 1226.0 C3118.5 1217.2 3195.2 1217.2 3208.0 1226.0 C3220.8 1234.8 3228.5 1292.2 3218.0 1301.0 C3207.5 1309.8 3130.8 1309.8 3118.0 1301.0 C3105.2 1292.2 3097.5 1234.8 3108.0 1226.0Z"/>
<path d="M3033.0 776.0 C3040.0 772.5 3092.2 794.2 3108.0 796.0 C3123.8 797.8 3157.5 786.3 3168.0 791.0 C3178.5 795.7 3205.0 828.4 3198.0 836.0 C3191.0 843.6 3125.5 857.2 3108.0 856.0 C3090.5 854.8 3056.8 835.3 3048.0 826.0 C3039.2 816.7 3026.0 779.5 3033.0 776.0Z"/>
<path d="M3558.0 986.0 C3567.9 980.2 3621.3 980.2 3633.0 986.0 C3644.7 991.8 3663.2 1026.7 3658.0 1036.0 C3652.8 1045.3 3600.8 1066.0 3588.0 1066.0 C3575.2 1066.0 3551.5 1045.3 3548.0 1036.0 C3544.5 1026.7 3548.1 991.8 3558.0 986.0Z"/>
<path d="M3148.0 1136.0 C3160.8 1130.2 3242.8 1130.2 3258.0 1136.0 C3273.2 1141.8 3283.8 1177.8 3278.0 1186.0 C3272.2 1194.2 3223.2 1206.0 3208.0 1206.0 C3192.8 1206.0 3155.0 1194.2 3148.0 1186.0 C3141.0 1177.8 3135.2 1141.8 3148.0 1136.0Z"/>
<path d="M2050.0 1169.0 C2082.1 1163.2 2265.2 1159.1 2295.0 1169.0 C2324.8 1178.9 2312.0 1238.8 2305.0 1254.0 C2298.0 1269.2 2253.1 1294.3 2235.0 1299.0 C2216.9 1303.7 2169.2 1296.3 2150.0 1294.0 C2130.8 1291.7 2085.2 1287.8 2070.0 1279.0 C2054.8 1270.2 2022.3 1231.8 2020.0 1219.0 C2017.7 1206.2 2017.9 1174.8 2050.0 1169.0Z"/>
<path d="M1770.0 1319.0 C1785.2 1306.2 1899.0 1298.5 1920.0 1309.0 C1941.0 1319.5 1955.8 1393.8 1950.0 1409.0 C1944.2 1424.2 1888.7 1437.8 1870.0 1439.0 C1851.3 1440.2 1801.7 1433.0 1790.0 1419.0 C1778.3 1405.0 1754.8 1331.8 1770.0 1319.0Z"/>
<path d="M1580.0 1279.0 C1588.2 1272.0 1654.8 1264.3 1670.0 1269.0 C1685.2 1273.7 1710.0 1311.4 1710.0 1319.0 C1710.0 1326.6 1682.8 1332.8 1670.0 1334.0 C1657.2 1335.2 1610.5 1335.4 1600.0 1329.0 C1589.5 1322.6 1571.8 1286.0 1580.0 1279.0Z"/>
<path d="M1740.0 1439.0 C1749.3 1430.8 1818.3 1439.7 1830.0 1449.0 C1841.7 1458.3 1833.0 1507.3 1840.0 1519.0 C1847.0 1530.7 1877.2 1545.5 1890.0 1549.0 C1902.8 1552.5 1944.2 1543.2 1950.0 1549.0 C1955.8 1554.8 1955.2 1595.5 1940.0 1599.0 C1924.8 1602.5 1842.2 1588.3 1820.0 1579.0 C1797.8 1569.7 1759.3 1535.3 1750.0 1519.0 C1740.7 1502.7 1730.7 1447.2 1740.0 1439.0Z"/>
<path d="M1910.0 1679.0 C1923.4 1669.1 2006.0 1669.1 2020.0 1679.0 C2034.0 1688.9 2043.4 1754.1 2030.0 1764.0 C2016.6 1773.9 1919.0 1773.9 1905.0 1764.0 C1891.0 1754.1 1896.6 1688.9 1910.0 1679.0Z"/>
<path d="M2020.0 1439.0 C2043.3 1429.7 2194.9 1420.3 2220.0 1439.0 C2245.1 1457.7 2240.8 1578.0 2235.0 1599.0 C2229.2 1620.0 2191.6 1617.8 2170.0 1619.0 C2148.4 1620.2 2067.5 1620.7 2050.0 1609.0 C2032.5 1597.3 2023.5 1538.8 2020.0 1519.0 C2016.5 1499.2 1996.7 1448.3 2020.0 1439.0Z"/>
<path d="M2260.0 1709.0 C2274.0 1701.4 2356.0 1692.6 2370.0 1699.0 C2384.0 1705.4 2394.0 1756.4 2380.0 1764.0 C2366.0 1771.6 2264.0 1770.4 2250.0 1764.0 C2236.0 1757.6 2246.0 1716.6 2260.0 1709.0Z"/>
<path d="M1510.0 1409.0 C1519.3 1405.5 1589.5 1413.2 1600.0 1419.0 C1610.5 1424.8 1609.3 1455.5 1600.0 1459.0 C1590.7 1462.5 1530.5 1454.8 1520.0 1449.0 C1509.5 1443.2 1500.7 1412.5 1510.0 1409.0Z"/>
<path d="M1230.0 1479.0 C1238.2 1473.2 1308.3 1473.2 1320.0 1479.0 C1331.7 1484.8 1338.2 1523.2 1330.0 1529.0 C1321.8 1534.8 1261.7 1534.8 1250.0 1529.0 C1238.3 1523.2 1221.8 1484.8 1230.0 1479.0Z"/>
<path d="M1990.0 1334.0 C2004.0 1328.2 2107.2 1350.2 2120.0 1359.0 C2132.8 1367.8 2114.0 1403.2 2100.0 1409.0 C2086.0 1414.8 2012.8 1417.8 2000.0 1409.0 C1987.2 1400.2 1976.0 1339.8 1990.0 1334.0Z"/>
<path d="M2608.0 1219.0 C2620.8 1214.3 2698.2 1263.8 2718.0 1279.0 C2737.8 1294.2 2769.8 1329.2 2778.0 1349.0 C2786.2 1368.8 2782.2 1437.3 2788.0 1449.0 C2793.8 1460.7 2823.9 1439.7 2828.0 1449.0 C2832.1 1458.3 2833.5 1518.5 2823.0 1529.0 C2812.5 1539.5 2749.1 1554.8 2738.0 1539.0 C2726.9 1523.2 2736.2 1413.8 2728.0 1394.0 C2719.8 1374.2 2682.0 1377.8 2668.0 1369.0 C2654.0 1360.2 2615.0 1336.5 2608.0 1319.0 C2601.0 1301.5 2595.2 1223.7 2608.0 1219.0Z"/>
<path d="M2458.0 1169.0 C2475.5 1155.6 2589.3 1163.2 2608.0 1169.0 C2626.7 1174.8 2620.9 1203.8 2618.0 1219.0 C2615.1 1234.2 2595.8 1290.8 2583.0 1299.0 C2570.2 1307.2 2522.6 1290.8 2508.0 1289.0 C2493.4 1287.2 2463.8 1298.0 2458.0 1284.0 C2452.2 1270.0 2440.5 1182.4 2458.0 1169.0Z"/>
<path d="M3133.0 1229.0 C3141.2 1223.2 3196.9 1228.5 3208.0 1239.0 C3219.1 1249.5 3231.5 1308.5 3228.0 1319.0 C3224.5 1329.5 3188.5 1332.5 3178.0 1329.0 C3167.5 1325.5 3143.2 1300.7 3138.0 1289.0 C3132.8 1277.3 3124.8 1234.8 3133.0 1229.0Z"/>
<path d="M3268.0 1619.0 C3275.0 1609.7 3329.8 1610.8 3338.0 1619.0 C3346.2 1627.2 3345.0 1679.7 3338.0 1689.0 C3331.0 1698.3 3286.2 1707.2 3278.0 1699.0 C3269.8 1690.8 3261.0 1628.3 3268.0 1619.0Z"/>
<path d="M2458.0 1509.0 C2465.0 1499.7 2504.0 1487.8 2518.0 1489.0 C2532.0 1490.2 2578.0 1509.7 2578.0 1519.0 C2578.0 1528.3 2532.0 1563.2 2518.0 1569.0 C2504.0 1574.8 2465.0 1576.0 2458.0 1569.0 C2451.0 1562.0 2451.0 1518.3 2458.0 1509.0Z"/>
<path d="M2738.0 1669.0 C2749.7 1655.6 2822.8 1643.2 2838.0 1649.0 C2853.2 1654.8 2871.5 1705.6 2868.0 1719.0 C2864.5 1732.4 2823.2 1758.8 2808.0 1764.0 C2792.8 1769.2 2746.2 1775.1 2738.0 1764.0 C2729.8 1752.9 2726.3 1682.4 2738.0 1669.0Z"/>
</g>
<path d="M1890.0 81.0 C1896.7 86.0 1912.5 97.7 1930.0 111.0 C1947.5 124.3 1971.7 142.7 1995.0 161.0 C2018.3 179.3 2045.0 201.8 2070.0 221.0 C2095.0 240.2 2121.7 259.3 2145.0 276.0 C2168.3 292.7 2193.3 306.8 2210.0 321.0 C2226.7 335.2 2236.2 346.0 2245.0 361.0 C2253.8 376.0 2260.8 396.0 2262.5 411.0 C2264.2 426.0 2258.3 437.8 2255.0 451.0 C2251.7 464.2 2248.2 476.2 2242.8 490.3 C2237.4 504.4 2228.1 520.6 2222.6 535.7 C2217.2 550.8 2210.0 565.9 2210.0 581.1 C2210.0 596.2 2213.8 613.0 2222.6 626.4 C2231.4 639.9 2247.8 651.6 2263.0 661.7 C2278.1 671.8 2299.1 677.7 2313.4 686.9 C2327.6 696.2 2340.3 706.3 2348.7 717.2 C2357.1 728.1 2362.9 739.9 2363.8 752.5 C2364.6 765.1 2360.4 780.2 2353.7 792.8 C2347.0 805.4 2335.2 817.2 2323.4 828.1 C2311.7 839.0 2295.7 848.2 2283.1 858.3 C2270.5 868.4 2257.1 877.6 2247.8 888.6 C2238.6 899.5 2232.7 911.3 2227.7 923.9 C2222.6 936.5 2218.4 950.7 2217.6 964.2 C2216.7 977.6 2220.9 990.2 2222.6 1004.5 C2224.3 1018.8 2223.9 1034.6 2227.7 1049.9 C2231.4 1065.1 2238.8 1078.3 2245.0 1096.0 C2251.2 1113.7 2257.5 1137.7 2265.0 1156.0 C2272.5 1174.3 2278.3 1191.0 2290.0 1206.0 C2301.7 1221.0 2317.5 1234.3 2335.0 1246.0 C2352.5 1257.7 2374.5 1268.5 2395.0 1276.0 C2415.5 1283.5 2439.2 1288.8 2458.0 1291.0 C2476.8 1293.2 2491.3 1285.2 2508.0 1289.0 C2524.7 1292.8 2543.8 1302.3 2558.0 1314.0 C2572.2 1325.7 2588.8 1344.0 2593.0 1359.0 C2597.2 1374.0 2593.0 1389.0 2583.0 1404.0 C2573.0 1419.0 2550.5 1435.7 2533.0 1449.0 C2515.5 1462.3 2490.5 1474.8 2478.0 1484.0 C2465.5 1493.2 2471.8 1489.8 2458.0 1504.0 C2444.2 1518.2 2418.0 1549.8 2395.0 1569.0 C2372.0 1588.2 2337.5 1602.3 2320.0 1619.0 C2302.5 1635.7 2294.2 1652.3 2290.0 1669.0 C2285.8 1685.7 2290.0 1703.2 2295.0 1719.0 C2300.0 1734.8 2312.5 1750.7 2320.0 1764.0 C2327.5 1777.3 2336.7 1793.2 2340.0 1799.0" fill="none" stroke="#172236" stroke-width="28.5" stroke-linecap="round" stroke-linejoin="round"/>
<g fill="#172236">
<path d="M1477.5 308.5 C1480.2 307.8 1493.0 316.7 1500.0 316.0 C1507.0 315.3 1524.7 302.2 1530.0 303.5 C1535.3 304.8 1541.3 321.7 1540.0 326.0 C1538.7 330.3 1526.0 335.0 1520.0 336.0 C1514.0 337.0 1500.3 335.5 1495.0 333.5 C1489.7 331.5 1482.3 324.3 1480.0 321.0 C1477.7 317.7 1474.8 309.2 1477.5 308.5Z"/>
<path d="M1965.0 328.5 C1968.3 328.2 1982.7 338.8 1990.0 343.5 C1997.3 348.2 2016.3 358.5 2020.0 363.5 C2023.7 368.5 2022.2 381.3 2017.5 381.0 C2012.8 380.7 1992.0 365.7 1985.0 361.0 C1978.0 356.3 1967.7 350.3 1965.0 346.0 C1962.3 341.7 1961.7 328.8 1965.0 328.5Z"/>
<path d="M2015.0 371.0 C2021.7 370.0 2058.7 386.7 2070.0 391.0 C2081.3 395.3 2097.3 398.2 2100.0 403.5 C2102.7 408.8 2096.0 428.0 2090.0 431.0 C2084.0 434.0 2064.3 430.3 2055.0 426.0 C2045.7 421.7 2025.3 405.8 2020.0 398.5 C2014.7 391.2 2008.3 372.0 2015.0 371.0Z"/>
<path d="M1770.0 501.0 C1772.3 497.0 1785.9 494.7 1790.0 496.0 C1794.1 497.3 1798.0 505.7 1801.0 511.0 C1804.0 516.3 1810.6 530.0 1812.5 536.0 C1814.4 542.0 1817.0 553.0 1815.0 556.0 C1813.0 559.0 1801.2 561.2 1797.5 558.5 C1793.8 555.8 1790.8 540.3 1787.5 536.0 C1784.2 531.7 1774.8 530.7 1772.5 526.0 C1770.2 521.3 1767.7 505.0 1770.0 501.0Z"/>
<path d="M1615.0 606.0 C1617.7 602.7 1632.7 612.7 1640.0 616.0 C1647.3 619.3 1664.7 625.0 1670.0 631.0 C1675.3 637.0 1682.7 656.3 1680.0 661.0 C1677.3 665.7 1658.0 668.7 1650.0 666.0 C1642.0 663.3 1624.7 649.0 1620.0 641.0 C1615.3 633.0 1612.3 609.3 1615.0 606.0Z"/>
<path d="M1755.0 591.0 C1759.7 585.0 1784.7 574.7 1790.0 576.0 C1795.3 577.3 1797.7 594.3 1795.0 601.0 C1792.3 607.7 1775.3 623.3 1770.0 626.0 C1764.7 628.7 1757.0 625.7 1755.0 621.0 C1753.0 616.3 1750.3 597.0 1755.0 591.0Z"/>
<path d="M1795.0 486.0 C1797.0 484.0 1811.7 484.0 1815.0 486.0 C1818.3 488.0 1822.0 499.0 1820.0 501.0 C1818.0 503.0 1803.3 503.0 1800.0 501.0 C1796.7 499.0 1793.0 488.0 1795.0 486.0Z"/>
<path d="M1520.0 363.5 C1522.0 360.2 1531.2 360.2 1532.5 363.5 C1533.8 366.8 1532.0 385.2 1530.0 388.5 C1528.0 391.8 1518.8 391.8 1517.5 388.5 C1516.2 385.2 1518.0 366.8 1520.0 363.5Z"/>
<path d="M1715.0 636.0 C1718.3 631.3 1742.3 624.0 1745.0 626.0 C1747.7 628.0 1738.3 646.3 1735.0 651.0 C1731.7 655.7 1722.7 663.0 1720.0 661.0 C1717.3 659.0 1711.7 640.7 1715.0 636.0Z"/>
<path d="M2085.0 131.0 C2088.3 129.0 2116.0 137.0 2120.0 141.0 C2124.0 145.0 2118.3 159.0 2115.0 161.0 C2111.7 163.0 2099.0 160.0 2095.0 156.0 C2091.0 152.0 2081.7 133.0 2085.0 131.0Z"/>
<path d="M2220.0 451.0 C2223.3 449.7 2242.3 453.3 2245.0 456.0 C2247.7 458.7 2243.3 469.7 2240.0 471.0 C2236.7 472.3 2222.7 468.7 2220.0 466.0 C2217.3 463.3 2216.7 452.3 2220.0 451.0Z"/>
<path d="M2050.0 661.0 C2052.7 658.3 2072.3 654.0 2075.0 656.0 C2077.7 658.0 2072.7 673.3 2070.0 676.0 C2067.3 678.7 2057.7 678.0 2055.0 676.0 C2052.3 674.0 2047.3 663.7 2050.0 661.0Z"/>
<path d="M3183.0 111.0 C3195.7 108.3 3268.0 108.3 3278.0 111.0 C3288.0 113.7 3258.0 126.3 3258.0 131.0 C3258.0 135.7 3276.7 140.7 3278.0 146.0 C3279.3 151.3 3268.0 164.3 3268.0 171.0 C3268.0 177.7 3280.0 193.3 3278.0 196.0 C3276.0 198.7 3258.3 195.0 3253.0 191.0 C3247.7 187.0 3244.0 166.7 3238.0 166.0 C3232.0 165.3 3213.3 180.7 3208.0 186.0 C3202.7 191.3 3200.0 208.0 3198.0 206.0 C3196.0 204.0 3191.7 179.7 3193.0 171.0 C3194.3 162.3 3209.3 146.3 3208.0 141.0 C3206.7 135.7 3186.3 135.0 3183.0 131.0 C3179.7 127.0 3170.3 113.7 3183.0 111.0Z"/>
<path d="M2458.0 456.0 C2460.7 454.7 2476.0 467.0 2478.0 471.0 C2480.0 475.0 2475.7 484.7 2473.0 486.0 C2470.3 487.3 2460.0 485.0 2458.0 481.0 C2456.0 477.0 2455.3 457.3 2458.0 456.0Z"/>
<path d="M2533.0 448.5 C2535.0 447.3 2548.5 449.3 2550.5 451.0 C2552.5 452.7 2550.0 459.8 2548.0 461.0 C2546.0 462.2 2537.5 461.7 2535.5 460.0 C2533.5 458.3 2531.0 449.7 2533.0 448.5Z"/>
<path d="M2678.0 628.5 C2678.7 627.2 2696.0 629.3 2698.0 631.0 C2700.0 632.7 2695.7 641.3 2693.0 641.0 C2690.3 640.7 2677.3 629.8 2678.0 628.5Z"/>
<path d="M2595.5 651.0 C2600.2 648.0 2622.7 642.2 2628.0 643.5 C2633.3 644.8 2638.2 656.7 2635.5 661.0 C2632.8 665.3 2613.7 675.3 2608.0 676.0 C2602.3 676.7 2594.7 669.3 2593.0 666.0 C2591.3 662.7 2590.8 654.0 2595.5 651.0Z"/>
<path d="M2603.0 686.0 C2603.7 683.3 2616.7 679.0 2618.0 681.0 C2619.3 683.0 2615.0 700.3 2613.0 701.0 C2611.0 701.7 2602.3 688.7 2603.0 686.0Z"/>
<path d="M1345.0 741.0 C1350.3 738.0 1383.7 729.2 1390.0 728.5 C1396.3 727.8 1397.8 733.0 1392.5 736.0 C1387.2 739.0 1356.3 750.3 1350.0 751.0 C1343.7 751.7 1339.7 744.0 1345.0 741.0Z"/>
<path d="M1837.5 1046.0 C1839.2 1043.3 1852.3 1041.5 1855.0 1043.5 C1857.7 1045.5 1859.2 1058.3 1857.5 1061.0 C1855.8 1063.7 1845.2 1065.5 1842.5 1063.5 C1839.8 1061.5 1835.8 1048.7 1837.5 1046.0Z"/>
<path d="M1910.0 1031.0 C1910.0 1027.0 1918.0 1024.0 1920.0 1026.0 C1922.0 1028.0 1921.0 1042.7 1925.0 1046.0 C1929.0 1049.3 1945.3 1048.3 1950.0 1051.0 C1954.7 1053.7 1960.3 1064.0 1960.0 1066.0 C1959.7 1068.0 1952.8 1067.3 1947.5 1066.0 C1942.2 1064.7 1925.0 1060.7 1920.0 1056.0 C1915.0 1051.3 1910.0 1035.0 1910.0 1031.0Z"/>
<path d="M1877.5 1131.0 C1878.8 1123.7 1893.3 1124.7 1895.0 1126.0 C1896.7 1127.3 1892.0 1137.0 1890.0 1141.0 C1888.0 1145.0 1880.0 1152.0 1880.0 1156.0 C1880.0 1160.0 1884.7 1167.0 1890.0 1171.0 C1895.3 1175.0 1912.0 1179.3 1920.0 1186.0 C1928.0 1192.7 1948.0 1215.3 1950.0 1221.0 C1952.0 1226.7 1940.3 1231.2 1935.0 1228.5 C1929.7 1225.8 1916.7 1207.3 1910.0 1201.0 C1903.3 1194.7 1889.3 1190.3 1885.0 1181.0 C1880.7 1171.7 1876.2 1138.3 1877.5 1131.0Z"/>
<path d="M1442.5 1141.0 C1442.8 1138.7 1458.0 1132.2 1460.0 1133.5 C1462.0 1134.8 1459.8 1150.0 1457.5 1151.0 C1455.2 1152.0 1442.2 1143.3 1442.5 1141.0Z"/>
<path d="M1210.0 1286.0 C1213.3 1286.0 1226.3 1299.0 1225.0 1301.0 C1223.7 1303.0 1202.0 1303.0 1200.0 1301.0 C1198.0 1299.0 1206.7 1286.0 1210.0 1286.0Z"/>
<path d="M1435.0 1266.0 C1436.7 1263.7 1448.3 1259.0 1450.0 1261.0 C1451.7 1263.0 1449.2 1278.7 1447.5 1281.0 C1445.8 1283.3 1439.2 1280.5 1437.5 1278.5 C1435.8 1276.5 1433.3 1268.3 1435.0 1266.0Z"/>
<path d="M2250.8 690.0 C2260.2 686.6 2317.8 686.0 2328.9 690.0 C2340.0 694.0 2333.9 711.2 2333.9 720.2 C2333.9 729.3 2332.9 752.7 2328.9 758.1 C2324.9 763.4 2307.7 765.6 2303.7 760.6 C2299.7 755.5 2301.3 726.3 2298.7 720.2 C2296.0 714.2 2286.2 712.5 2283.5 715.2 C2280.8 717.9 2280.5 739.7 2278.5 740.4 C2276.5 741.1 2271.1 723.6 2268.4 720.2 C2265.7 716.9 2260.7 719.2 2258.3 715.2 C2256.0 711.2 2241.4 693.4 2250.8 690.0Z"/>
<path d="M2298.7 876.5 C2299.7 873.2 2310.3 871.1 2316.3 866.4 C2322.3 861.7 2339.3 843.9 2344.0 841.2 C2348.7 838.5 2353.6 841.9 2351.6 846.3 C2349.6 850.6 2334.6 868.0 2328.9 874.0 C2323.2 880.0 2312.8 891.3 2308.7 891.6 C2304.7 892.0 2297.6 879.9 2298.7 876.5Z"/>
<path d="M2212.5 450.0 C2216.6 445.3 2248.2 446.0 2252.9 450.0 C2257.6 454.0 2251.9 475.5 2247.8 480.2 C2243.8 485.0 2227.3 489.3 2222.6 485.3 C2217.9 481.3 2208.5 454.7 2212.5 450.0Z"/>
<path d="M2410.0 706.0 C2415.7 703.3 2451.6 698.7 2458.0 706.0 C2464.4 713.3 2461.7 755.0 2458.0 761.0 C2454.3 767.0 2435.7 755.7 2430.0 751.0 C2424.3 746.3 2417.7 732.0 2415.0 726.0 C2412.3 720.0 2404.3 708.7 2410.0 706.0Z"/>
<path d="M2650.5 1031.0 C2653.5 1026.7 2672.3 1024.7 2678.0 1026.0 C2683.7 1027.3 2693.0 1037.0 2693.0 1041.0 C2693.0 1045.0 2683.0 1053.7 2678.0 1056.0 C2673.0 1058.3 2659.2 1061.8 2655.5 1058.5 C2651.8 1055.2 2647.5 1035.3 2650.5 1031.0Z"/>
<path d="M2935.5 796.0 C2938.2 793.3 2955.7 790.8 2958.0 793.5 C2960.3 796.2 2955.7 813.3 2953.0 816.0 C2950.3 818.7 2940.3 816.2 2938.0 813.5 C2935.7 810.8 2932.8 798.7 2935.5 796.0Z"/>
<path d="M2823.0 1171.0 C2825.3 1169.7 2840.3 1167.5 2843.0 1168.5 C2845.7 1169.5 2845.3 1177.2 2843.0 1178.5 C2840.7 1179.8 2828.2 1179.5 2825.5 1178.5 C2822.8 1177.5 2820.7 1172.3 2823.0 1171.0Z"/>
<path d="M2503.0 1141.0 C2506.3 1139.7 2523.7 1150.0 2533.0 1156.0 C2542.3 1162.0 2567.0 1179.3 2573.0 1186.0 C2579.0 1192.7 2581.3 1204.0 2578.0 1206.0 C2574.7 1208.0 2557.3 1206.3 2548.0 1201.0 C2538.7 1195.7 2514.0 1174.0 2508.0 1166.0 C2502.0 1158.0 2499.7 1142.3 2503.0 1141.0Z"/>
<path d="M2488.0 1166.0 C2489.3 1164.0 2503.7 1179.3 2513.0 1186.0 C2522.3 1192.7 2553.3 1210.7 2558.0 1216.0 C2562.7 1221.3 2555.3 1228.0 2548.0 1226.0 C2540.7 1224.0 2511.0 1209.0 2503.0 1201.0 C2495.0 1193.0 2486.7 1168.0 2488.0 1166.0Z"/>
<path d="M2458.0 1281.0 C2466.0 1277.7 2504.7 1273.3 2518.0 1276.0 C2531.3 1278.7 2566.0 1297.7 2558.0 1301.0 C2550.0 1304.3 2471.3 1303.7 2458.0 1301.0 C2444.7 1298.3 2450.0 1284.3 2458.0 1281.0Z"/>
<path d="M2600.5 1108.5 C2604.5 1106.5 2628.3 1104.3 2633.0 1106.0 C2637.7 1107.7 2639.5 1119.0 2635.5 1121.0 C2631.5 1123.0 2607.7 1122.7 2603.0 1121.0 C2598.3 1119.3 2596.5 1110.5 2600.5 1108.5Z"/>
<path d="M1200.0 1289.0 C1202.7 1285.3 1216.0 1280.2 1220.0 1281.5 C1224.0 1282.8 1230.3 1294.7 1230.0 1299.0 C1229.7 1303.3 1221.5 1312.7 1217.5 1314.0 C1213.5 1315.3 1202.3 1312.3 1200.0 1309.0 C1197.7 1305.7 1197.3 1292.7 1200.0 1289.0Z"/>
<path d="M1437.5 1266.5 C1439.2 1263.8 1450.8 1260.2 1452.5 1261.5 C1454.2 1262.8 1451.7 1273.8 1450.0 1276.5 C1448.3 1279.2 1441.7 1282.8 1440.0 1281.5 C1438.3 1280.2 1435.8 1269.2 1437.5 1266.5Z"/>
<path d="M1360.0 1374.0 C1362.0 1372.0 1377.0 1370.5 1380.0 1371.5 C1383.0 1372.5 1384.5 1379.5 1382.5 1381.5 C1380.5 1383.5 1368.0 1387.5 1365.0 1386.5 C1362.0 1385.5 1358.0 1376.0 1360.0 1374.0Z"/>
<path d="M1570.0 1351.5 C1573.3 1349.8 1593.5 1348.3 1597.5 1349.0 C1601.5 1349.7 1603.3 1354.8 1600.0 1356.5 C1596.7 1358.2 1576.5 1362.2 1572.5 1361.5 C1568.5 1360.8 1566.7 1353.2 1570.0 1351.5Z"/>
<path d="M1635.0 1409.0 C1639.7 1403.7 1676.0 1381.7 1685.0 1379.0 C1694.0 1376.3 1701.8 1385.0 1702.5 1389.0 C1703.2 1393.0 1697.0 1405.0 1690.0 1409.0 C1683.0 1413.0 1657.3 1419.0 1650.0 1419.0 C1642.7 1419.0 1630.3 1414.3 1635.0 1409.0Z"/>
<path d="M1595.0 1456.5 C1598.3 1452.5 1624.0 1436.0 1630.0 1434.0 C1636.0 1432.0 1643.3 1437.5 1640.0 1441.5 C1636.7 1445.5 1611.0 1462.0 1605.0 1464.0 C1599.0 1466.0 1591.7 1460.5 1595.0 1456.5Z"/>
<path d="M1685.0 1429.0 C1688.3 1426.7 1710.7 1421.2 1715.0 1421.5 C1719.3 1421.8 1720.8 1429.2 1717.5 1431.5 C1714.2 1433.8 1694.3 1439.3 1690.0 1439.0 C1685.7 1438.7 1681.7 1431.3 1685.0 1429.0Z"/>
<path d="M1505.0 1574.0 C1506.7 1570.7 1518.0 1568.8 1520.0 1571.5 C1522.0 1574.2 1521.7 1590.7 1520.0 1594.0 C1518.3 1597.3 1509.5 1599.2 1507.5 1596.5 C1505.5 1593.8 1503.3 1577.3 1505.0 1574.0Z"/>
<path d="M1585.0 1576.5 C1590.3 1574.5 1620.3 1572.3 1625.0 1574.0 C1629.7 1575.7 1623.3 1585.7 1620.0 1589.0 C1616.7 1592.3 1604.7 1599.0 1600.0 1599.0 C1595.3 1599.0 1587.0 1592.0 1585.0 1589.0 C1583.0 1586.0 1579.7 1578.5 1585.0 1576.5Z"/>
<path d="M1765.0 1594.0 C1767.7 1592.3 1789.7 1588.7 1795.0 1589.0 C1800.3 1589.3 1807.7 1594.8 1805.0 1596.5 C1802.3 1598.2 1780.3 1601.8 1775.0 1601.5 C1769.7 1601.2 1762.3 1595.7 1765.0 1594.0Z"/>
<path d="M1540.0 1634.0 C1542.7 1630.0 1556.0 1627.0 1560.0 1629.0 C1564.0 1631.0 1570.7 1644.3 1570.0 1649.0 C1569.3 1653.7 1559.0 1662.7 1555.0 1664.0 C1551.0 1665.3 1542.0 1663.0 1540.0 1659.0 C1538.0 1655.0 1537.3 1638.0 1540.0 1634.0Z"/>
<path d="M1585.0 1669.0 C1587.0 1665.7 1601.7 1654.7 1605.0 1654.0 C1608.3 1653.3 1612.0 1660.7 1610.0 1664.0 C1608.0 1667.3 1593.3 1678.3 1590.0 1679.0 C1586.7 1679.7 1583.0 1672.3 1585.0 1669.0Z"/>
<path d="M1752.5 1629.0 C1755.8 1625.7 1765.0 1628.7 1770.0 1634.0 C1775.0 1639.3 1786.7 1661.7 1790.0 1669.0 C1793.3 1676.3 1799.0 1685.0 1795.0 1689.0 C1791.0 1693.0 1768.0 1698.3 1760.0 1699.0 C1752.0 1699.7 1737.0 1699.3 1735.0 1694.0 C1733.0 1688.7 1742.7 1667.7 1745.0 1659.0 C1747.3 1650.3 1749.2 1632.3 1752.5 1629.0Z"/>
<path d="M1815.0 1659.0 C1816.0 1656.7 1823.3 1650.8 1825.0 1651.5 C1826.7 1652.2 1828.5 1661.7 1827.5 1664.0 C1826.5 1666.3 1819.2 1669.7 1817.5 1669.0 C1815.8 1668.3 1814.0 1661.3 1815.0 1659.0Z"/>
<path d="M1785.0 1714.0 C1788.3 1708.0 1796.0 1716.3 1800.0 1719.0 C1804.0 1721.7 1809.7 1733.7 1815.0 1734.0 C1820.3 1734.3 1837.3 1720.8 1840.0 1721.5 C1842.7 1722.2 1839.7 1735.3 1835.0 1739.0 C1830.3 1742.7 1810.3 1745.7 1805.0 1749.0 C1799.7 1752.3 1799.0 1762.0 1795.0 1764.0 C1791.0 1766.0 1776.3 1770.7 1775.0 1764.0 C1773.7 1757.3 1781.7 1720.0 1785.0 1714.0Z"/>
<path d="M2100.0 1539.0 C2101.0 1536.0 2108.3 1532.0 2110.0 1534.0 C2111.7 1536.0 2113.5 1551.0 2112.5 1554.0 C2111.5 1557.0 2104.2 1558.5 2102.5 1556.5 C2100.8 1554.5 2099.0 1542.0 2100.0 1539.0Z"/>
<path d="M2125.0 1549.0 C2130.0 1547.0 2160.3 1550.7 2165.0 1554.0 C2169.7 1557.3 2165.0 1572.0 2160.0 1574.0 C2155.0 1576.0 2132.2 1572.3 2127.5 1569.0 C2122.8 1565.7 2120.0 1551.0 2125.0 1549.0Z"/>
<path d="M2140.0 1504.0 C2141.0 1501.0 2148.3 1497.0 2150.0 1499.0 C2151.7 1501.0 2153.5 1516.0 2152.5 1519.0 C2151.5 1522.0 2144.2 1523.5 2142.5 1521.5 C2140.8 1519.5 2139.0 1507.0 2140.0 1504.0Z"/>
<path d="M2440.0 1599.0 C2441.0 1596.3 2448.3 1594.5 2450.0 1596.5 C2451.7 1598.5 2453.5 1611.3 2452.5 1614.0 C2451.5 1616.7 2444.2 1618.5 2442.5 1616.5 C2440.8 1614.5 2439.0 1601.7 2440.0 1599.0Z"/>
<path d="M2065.0 1296.5 C2067.3 1294.2 2082.0 1292.3 2085.0 1294.0 C2088.0 1295.7 2089.8 1306.7 2087.5 1309.0 C2085.2 1311.3 2070.5 1313.2 2067.5 1311.5 C2064.5 1309.8 2062.7 1298.8 2065.0 1296.5Z"/>
<path d="M1995.0 1309.0 C1997.3 1307.0 2012.7 1304.8 2015.0 1306.5 C2017.3 1308.2 2014.8 1319.5 2012.5 1321.5 C2010.2 1323.5 1999.8 1323.2 1997.5 1321.5 C1995.2 1319.8 1992.7 1311.0 1995.0 1309.0Z"/>
<path d="M1915.0 1184.0 C1915.7 1181.3 1931.0 1189.3 1935.0 1194.0 C1939.0 1198.7 1945.7 1216.3 1945.0 1219.0 C1944.3 1221.7 1934.0 1218.7 1930.0 1214.0 C1926.0 1209.3 1914.3 1186.7 1915.0 1184.0Z"/>
<path d="M2593.0 1674.0 C2595.0 1670.7 2614.0 1667.0 2618.0 1669.0 C2622.0 1671.0 2625.0 1685.7 2623.0 1689.0 C2621.0 1692.3 2607.0 1696.0 2603.0 1694.0 C2599.0 1692.0 2591.0 1677.3 2593.0 1674.0Z"/>
<path d="M2698.0 1564.0 C2699.0 1561.0 2710.3 1565.0 2713.0 1569.0 C2715.7 1573.0 2719.0 1591.0 2718.0 1594.0 C2717.0 1597.0 2708.2 1595.5 2705.5 1591.5 C2702.8 1587.5 2697.0 1567.0 2698.0 1564.0Z"/>
<path d="M2718.0 1664.0 C2720.7 1658.7 2750.0 1652.0 2758.0 1654.0 C2766.0 1656.0 2771.3 1673.0 2778.0 1679.0 C2784.7 1685.0 2808.0 1695.0 2808.0 1699.0 C2808.0 1703.0 2787.3 1709.7 2778.0 1709.0 C2768.7 1708.3 2746.0 1700.0 2738.0 1694.0 C2730.0 1688.0 2715.3 1669.3 2718.0 1664.0Z"/>
<path d="M3708.0 1674.0 C3713.1 1664.7 3740.9 1643.0 3746.0 1649.0 C3751.1 1655.0 3749.1 1703.7 3746.0 1719.0 C3742.9 1734.3 3730.1 1758.0 3723.0 1764.0 C3715.9 1770.0 3695.0 1770.0 3693.0 1764.0 C3691.0 1758.0 3706.0 1731.0 3708.0 1719.0 C3710.0 1707.0 3702.9 1683.3 3708.0 1674.0Z"/>
<path d="M2738.0 1739.0 C2742.0 1736.3 2763.3 1740.7 2768.0 1744.0 C2772.7 1747.3 2777.0 1761.3 2773.0 1764.0 C2769.0 1766.7 2742.7 1767.3 2738.0 1764.0 C2733.3 1760.7 2734.0 1741.7 2738.0 1739.0Z"/>
<path d="M2825.5 1169.0 C2827.2 1168.7 2837.0 1172.7 2838.0 1174.0 C2839.0 1175.3 2834.7 1178.7 2833.0 1179.0 C2831.3 1179.3 2826.5 1177.8 2825.5 1176.5 C2824.5 1175.2 2823.8 1169.3 2825.5 1169.0Z"/>
</g>
<g fill="none" stroke="#605d5c" stroke-width="2.5" stroke-linejoin="round">
<path d="M1170.0 131.0 C1176.7 129.3 1193.3 121.8 1210.0 121.0 C1226.7 120.2 1254.2 127.7 1270.0 126.0 C1285.8 124.3 1299.2 113.5 1305.0 111.0"/>
<path d="M1585.0 111.0 C1586.7 119.3 1591.7 144.3 1595.0 161.0 C1598.3 177.7 1597.5 194.3 1605.0 211.0 C1612.5 227.7 1629.2 248.5 1640.0 261.0 C1650.8 273.5 1665.0 281.8 1670.0 286.0"/>
<path d="M1675.0 286.0 C1682.5 284.3 1699.2 275.6 1720.0 276.0 C1740.8 276.4 1775.0 288.1 1800.0 288.5 C1825.0 288.9 1847.5 281.4 1870.0 278.5 C1892.5 275.6 1924.2 272.2 1935.0 271.0"/>
<path d="M1850.0 281.0 C1851.7 287.7 1855.0 307.7 1860.0 321.0 C1865.0 334.3 1875.0 347.7 1880.0 361.0 C1885.0 374.3 1883.3 387.7 1890.0 401.0 C1896.7 414.3 1910.0 431.8 1920.0 441.0 C1930.0 450.2 1940.0 446.0 1950.0 456.0 C1960.0 466.0 1973.3 485.2 1980.0 501.0 C1986.7 516.8 1986.7 541.0 1990.0 551.0 C1993.3 561.0 1998.3 559.3 2000.0 561.0"/>
<path d="M1935.0 271.0 C1939.2 279.3 1950.8 304.3 1960.0 321.0 C1969.2 337.7 1980.0 354.3 1990.0 371.0 C2000.0 387.7 2010.0 404.3 2020.0 421.0 C2030.0 437.7 2040.0 453.5 2050.0 471.0 C2060.0 488.5 2071.7 507.7 2080.0 526.0 C2088.3 544.3 2093.3 561.8 2100.0 581.0 C2106.7 600.2 2113.3 620.2 2120.0 641.0 C2126.7 661.8 2136.7 695.2 2140.0 706.0"/>
<path d="M1540.0 381.0 C1539.6 390.2 1535.8 422.7 1537.5 436.0 C1539.2 449.3 1551.2 448.5 1550.0 461.0 C1548.8 473.5 1535.0 496.0 1530.0 511.0 C1525.0 526.0 1522.5 539.3 1520.0 551.0 C1517.5 562.7 1515.8 576.0 1515.0 581.0"/>
<path d="M1312.5 506.0 C1307.9 507.7 1292.1 506.8 1285.0 516.0 C1277.9 525.2 1275.8 545.2 1270.0 561.0 C1264.2 576.8 1251.7 597.7 1250.0 611.0 C1248.3 624.3 1255.8 625.2 1260.0 641.0 C1264.2 656.8 1272.5 695.2 1275.0 706.0"/>
<path d="M1515.0 581.0 C1520.8 584.3 1535.8 596.0 1550.0 601.0 C1564.2 606.0 1588.3 604.3 1600.0 611.0 C1611.7 617.7 1608.3 631.0 1620.0 641.0 C1631.7 651.0 1655.0 660.2 1670.0 671.0 C1685.0 681.8 1703.3 700.2 1710.0 706.0"/>
<path d="M1620.0 351.0 C1616.7 357.7 1608.3 376.8 1600.0 391.0 C1591.7 405.2 1578.3 422.7 1570.0 436.0 C1561.7 449.3 1553.3 465.2 1550.0 471.0"/>
<path d="M1600.0 391.0 C1608.3 399.3 1630.0 427.7 1650.0 441.0 C1670.0 454.3 1700.0 462.7 1720.0 471.0 C1740.0 479.3 1755.0 481.8 1770.0 491.0 C1785.0 500.2 1798.3 511.0 1810.0 526.0 C1821.7 541.0 1830.0 562.7 1840.0 581.0 C1850.0 599.3 1865.0 626.8 1870.0 636.0"/>
<path d="M1600.0 541.0 C1603.3 536.0 1608.3 521.0 1620.0 511.0 C1631.7 501.0 1650.8 488.1 1670.0 481.0 C1689.2 473.9 1724.2 470.6 1735.0 468.5"/>
<path d="M1815.0 526.0 C1818.3 531.8 1827.5 546.8 1835.0 561.0 C1842.5 575.2 1850.8 597.7 1860.0 611.0 C1869.2 624.3 1875.0 644.3 1890.0 641.0 C1905.0 637.7 1931.7 604.3 1950.0 591.0 C1968.3 577.7 1975.0 562.7 2000.0 561.0 C2025.0 559.3 2083.3 577.7 2100.0 581.0"/>
<path d="M1745.0 111.0 C1749.2 117.7 1771.7 136.0 1770.0 151.0 C1768.3 166.0 1747.5 191.0 1735.0 201.0 C1722.5 211.0 1704.2 204.3 1695.0 211.0 C1685.8 217.7 1682.5 236.0 1680.0 241.0"/>
<path d="M1770.0 151.0 C1778.3 148.5 1808.3 142.7 1820.0 136.0 C1831.7 129.3 1836.7 115.2 1840.0 111.0"/>
<path d="M2140.0 241.0 C2145.0 236.0 2156.7 219.3 2170.0 211.0 C2183.3 202.7 2203.3 195.2 2220.0 191.0 C2236.7 186.8 2253.3 188.5 2270.0 186.0 C2286.7 183.5 2311.7 177.7 2320.0 176.0"/>
<path d="M2235.0 291.0 C2240.8 296.0 2255.8 314.3 2270.0 321.0 C2284.2 327.7 2303.3 330.2 2320.0 331.0 C2336.7 331.8 2355.0 326.0 2370.0 326.0 C2385.0 326.0 2403.3 330.2 2410.0 331.0"/>
<path d="M2330.0 411.0 C2338.3 410.2 2365.0 406.0 2380.0 406.0 C2395.0 406.0 2413.3 410.2 2420.0 411.0"/>
<path d="M2270.0 491.0 C2271.7 502.7 2275.0 541.0 2280.0 561.0 C2285.0 581.0 2293.3 594.3 2300.0 611.0 C2306.7 627.7 2313.3 645.2 2320.0 661.0 C2326.7 676.8 2336.7 698.5 2340.0 706.0"/>
<path d="M1995.0 706.0 C1994.2 700.2 1984.2 682.7 1990.0 671.0 C1995.8 659.3 2012.5 643.5 2030.0 636.0 C2047.5 628.5 2075.0 626.8 2095.0 626.0 C2115.0 625.2 2140.8 630.2 2150.0 631.0"/>
<path d="M1170.0 521.0 C1178.3 519.3 1203.3 511.8 1220.0 511.0 C1236.7 510.2 1261.7 515.2 1270.0 516.0"/>
<path d="M1250.0 611.0 C1243.3 612.7 1223.3 619.3 1210.0 621.0 C1196.7 622.7 1176.7 621.0 1170.0 621.0"/>
<path d="M2958.0 111.0 C2958.0 117.7 2963.0 136.0 2958.0 151.0 C2953.0 166.0 2936.3 184.3 2928.0 201.0 C2919.7 217.7 2913.8 232.7 2908.0 251.0 C2902.2 269.3 2898.0 296.0 2893.0 311.0 C2888.0 326.0 2880.5 330.2 2878.0 341.0 C2875.5 351.8 2873.0 364.3 2878.0 376.0 C2883.0 387.7 2903.0 396.8 2908.0 411.0 C2913.0 425.2 2905.5 444.3 2908.0 461.0 C2910.5 477.7 2918.8 497.7 2923.0 511.0 C2927.2 524.3 2931.3 536.0 2933.0 541.0"/>
<path d="M2928.0 201.0 C2936.3 198.5 2960.5 193.1 2978.0 186.0 C2995.5 178.9 3013.8 161.0 3033.0 158.5 C3052.2 156.0 3076.3 162.2 3093.0 171.0 C3109.7 179.8 3118.0 201.8 3133.0 211.0 C3148.0 220.2 3167.2 222.7 3183.0 226.0 C3198.8 229.3 3216.3 226.0 3228.0 231.0 C3239.7 236.0 3243.8 245.2 3253.0 256.0 C3262.2 266.8 3278.0 289.3 3283.0 296.0"/>
<path d="M2878.0 341.0 C2866.3 346.0 2831.3 358.5 2808.0 371.0 C2784.7 383.5 2753.0 401.0 2738.0 416.0 C2723.0 431.0 2721.3 450.2 2718.0 461.0 C2714.7 471.8 2711.3 468.5 2718.0 481.0 C2724.7 493.5 2744.7 522.7 2758.0 536.0 C2771.3 549.3 2789.7 552.7 2798.0 561.0 C2806.3 569.3 2796.3 578.5 2808.0 586.0 C2819.7 593.5 2848.4 601.0 2868.0 606.0 C2887.6 611.0 2915.9 614.3 2925.5 616.0"/>
<path d="M3013.0 391.0 C3020.5 384.3 3042.2 363.5 3058.0 351.0 C3073.8 338.5 3095.5 323.1 3108.0 316.0 C3120.5 308.9 3120.5 308.1 3133.0 308.5 C3145.5 308.9 3168.8 314.3 3183.0 318.5 C3197.2 322.7 3206.3 333.9 3218.0 333.5 C3229.7 333.1 3242.2 322.2 3253.0 316.0 C3263.8 309.8 3278.0 299.3 3283.0 296.0"/>
<path d="M2908.0 411.0 C2914.7 409.8 2935.5 405.2 2948.0 403.5 C2960.5 401.8 2972.2 403.1 2983.0 401.0 C2993.8 398.9 3008.0 392.7 3013.0 391.0"/>
<path d="M2925.5 616.0 C2935.1 617.7 2965.1 622.7 2983.0 626.0 C3000.9 629.3 3012.2 632.2 3033.0 636.0 C3053.8 639.8 3087.2 649.3 3108.0 648.5 C3128.8 647.7 3143.4 631.0 3158.0 631.0 C3172.6 631.0 3178.8 644.3 3195.5 648.5 C3212.2 652.7 3235.1 653.1 3258.0 656.0 C3280.9 658.9 3312.2 670.2 3333.0 666.0 C3353.8 661.8 3370.5 643.5 3383.0 631.0 C3395.5 618.5 3395.5 602.7 3408.0 591.0 C3420.5 579.3 3441.3 570.2 3458.0 561.0 C3474.7 551.8 3493.0 545.2 3508.0 536.0 C3523.0 526.8 3541.3 511.0 3548.0 506.0"/>
<path d="M3243.0 401.0 C3245.5 407.7 3254.7 428.5 3258.0 441.0 C3261.3 453.5 3266.3 464.3 3263.0 476.0 C3259.7 487.7 3243.0 498.5 3238.0 511.0 C3233.0 523.5 3231.3 538.5 3233.0 551.0 C3234.7 563.5 3247.2 576.0 3248.0 586.0 C3248.8 596.0 3236.3 599.3 3238.0 611.0 C3239.7 622.7 3254.7 648.5 3258.0 656.0"/>
<path d="M3308.0 496.0 C3313.0 493.5 3325.5 485.2 3338.0 481.0 C3350.5 476.8 3368.4 475.2 3383.0 471.0 C3397.6 466.8 3413.0 462.7 3425.5 456.0 C3438.0 449.3 3447.6 440.2 3458.0 431.0 C3468.4 421.8 3478.8 410.2 3488.0 401.0 C3497.2 391.8 3509.7 388.5 3513.0 376.0 C3516.3 363.5 3510.5 341.0 3508.0 326.0 C3505.5 311.0 3497.2 303.5 3498.0 286.0 C3498.8 268.5 3512.2 236.0 3513.0 221.0 C3513.8 206.0 3504.7 200.2 3503.0 196.0"/>
<path d="M3503.0 196.0 C3512.2 193.5 3540.5 186.8 3558.0 181.0 C3575.5 175.2 3591.3 167.7 3608.0 161.0 C3624.7 154.3 3641.3 146.0 3658.0 141.0 C3674.7 136.0 3693.3 134.3 3708.0 131.0 C3722.7 127.7 3739.7 122.7 3746.0 121.0"/>
<path d="M3108.0 648.5 C3112.2 638.9 3133.0 607.2 3133.0 591.0 C3133.0 574.8 3103.8 564.3 3108.0 551.0 C3112.2 537.7 3143.8 521.8 3158.0 511.0 C3172.2 500.2 3179.7 486.0 3193.0 486.0 C3206.3 486.0 3230.5 506.8 3238.0 511.0"/>
<path d="M2568.0 311.0 C2568.8 316.8 2573.4 332.7 2573.0 346.0 C2572.6 359.3 2568.0 371.8 2565.5 391.0 C2563.0 410.2 2558.4 441.0 2558.0 461.0 C2557.6 481.0 2563.0 496.0 2563.0 511.0 C2563.0 526.0 2562.2 542.7 2558.0 551.0 C2553.8 559.3 2543.8 561.8 2538.0 561.0 C2532.2 560.2 2525.5 548.5 2523.0 546.0"/>
<path d="M2558.0 551.0 C2564.7 554.3 2583.0 571.8 2598.0 571.0 C2613.0 570.2 2633.8 552.7 2648.0 546.0 C2662.2 539.3 2677.2 533.5 2683.0 531.0"/>
<path d="M2583.0 111.0 C2588.8 116.0 2611.3 127.7 2618.0 141.0 C2624.7 154.3 2619.7 176.8 2623.0 191.0 C2626.3 205.2 2637.2 214.3 2638.0 226.0 C2638.8 237.7 2634.2 246.4 2628.0 261.0 C2621.8 275.6 2605.1 304.8 2600.5 313.5"/>
<path d="M2623.0 141.0 C2633.8 139.3 2670.5 126.0 2688.0 131.0 C2705.5 136.0 2716.3 158.5 2728.0 171.0 C2739.7 183.5 2753.0 200.2 2758.0 206.0"/>
<path d="M2458.0 331.0 C2466.3 329.3 2489.7 324.3 2508.0 321.0 C2526.3 317.7 2548.8 311.0 2568.0 311.0 C2587.2 311.0 2606.3 315.2 2623.0 321.0 C2639.7 326.8 2653.8 335.6 2668.0 346.0 C2682.2 356.4 2696.3 371.8 2708.0 383.5 C2719.7 395.2 2733.0 410.6 2738.0 416.0"/>
<path d="M3383.0 161.0 C3385.5 158.5 3385.5 150.2 3398.0 146.0 C3410.5 141.8 3439.7 133.5 3458.0 136.0 C3476.3 138.5 3500.5 151.0 3508.0 161.0 C3515.5 171.0 3503.8 190.2 3503.0 196.0"/>
<path d="M3308.0 496.0 C3308.0 501.8 3306.3 520.2 3308.0 531.0 C3309.7 541.8 3318.0 549.3 3318.0 561.0 C3318.0 572.7 3304.7 591.0 3308.0 601.0 C3311.3 611.0 3327.2 621.8 3338.0 621.0 C3348.8 620.2 3364.7 594.3 3373.0 596.0 C3381.3 597.7 3385.5 625.2 3388.0 631.0"/>
<path d="M2925.5 616.0 C2920.9 620.2 2903.4 631.8 2898.0 641.0 C2892.6 650.2 2892.2 660.2 2893.0 671.0 C2893.8 681.8 2901.3 700.2 2903.0 706.0"/>
<path d="M2938.0 616.0 C2939.7 623.5 2947.2 646.0 2948.0 661.0 C2948.8 676.0 2943.8 698.5 2943.0 706.0"/>
<path d="M3195.5 648.5 L3193.0 706.0"/>
<path d="M3548.0 506.0 C3558.0 504.3 3588.0 496.0 3608.0 496.0 C3628.0 496.0 3645.0 508.5 3668.0 506.0 C3691.0 503.5 3733.0 485.2 3746.0 481.0"/>
<path d="M1170.0 811.0 C1182.5 809.3 1220.8 803.9 1245.0 801.0 C1269.2 798.1 1292.5 791.4 1315.0 793.5 C1337.5 795.6 1357.5 806.4 1380.0 813.5 C1402.5 820.6 1426.7 824.8 1450.0 836.0 C1473.3 847.2 1498.3 871.0 1520.0 881.0 C1541.7 891.0 1556.7 892.7 1580.0 896.0 C1603.3 899.3 1636.2 899.8 1660.0 901.0 C1683.8 902.2 1712.1 903.1 1722.5 903.5"/>
<path d="M1315.0 793.5 C1310.0 793.1 1288.3 796.4 1285.0 791.0 C1281.7 785.6 1293.3 769.3 1295.0 761.0 C1296.7 752.7 1288.3 746.8 1295.0 741.0 C1301.7 735.2 1320.8 731.8 1335.0 726.0 C1349.2 720.2 1372.5 709.3 1380.0 706.0"/>
<path d="M1470.0 706.0 C1471.7 714.3 1475.0 735.2 1480.0 756.0 C1485.0 776.8 1493.3 810.2 1500.0 831.0 C1506.7 851.8 1513.3 864.3 1520.0 881.0 C1526.7 897.7 1531.7 915.2 1540.0 931.0 C1548.3 946.8 1563.3 960.2 1570.0 976.0 C1576.7 991.8 1575.0 1012.7 1580.0 1026.0 C1585.0 1039.3 1593.3 1042.7 1600.0 1056.0 C1606.7 1069.3 1613.3 1089.3 1620.0 1106.0 C1626.7 1122.7 1635.0 1142.7 1640.0 1156.0 C1645.0 1169.3 1645.0 1174.3 1650.0 1186.0 C1655.0 1197.7 1663.3 1215.2 1670.0 1226.0 C1676.7 1236.8 1685.0 1238.5 1690.0 1251.0 C1695.0 1263.5 1698.3 1292.7 1700.0 1301.0"/>
<path d="M1530.0 988.5 C1545.0 988.9 1590.4 990.2 1620.0 991.0 C1649.6 991.8 1692.9 993.1 1707.5 993.5"/>
<path d="M1765.0 1116.0 C1767.5 1122.7 1774.2 1141.0 1780.0 1156.0 C1785.8 1171.0 1795.0 1189.3 1800.0 1206.0 C1805.0 1222.7 1806.7 1240.2 1810.0 1256.0 C1813.3 1271.8 1818.3 1293.5 1820.0 1301.0"/>
<path d="M1820.0 706.0 C1818.3 714.3 1812.5 743.5 1810.0 756.0 C1807.5 768.5 1805.8 776.8 1805.0 781.0"/>
<path d="M1722.5 903.5 C1738.8 903.9 1787.1 903.1 1820.0 906.0 C1852.9 908.9 1890.8 916.0 1920.0 921.0 C1949.2 926.0 1973.3 932.7 1995.0 936.0 C2016.7 939.3 2040.8 940.2 2050.0 941.0"/>
<path d="M1805.0 781.0 C1815.8 781.8 1842.5 786.8 1870.0 786.0 C1897.5 785.2 1940.8 781.8 1970.0 776.0 C1999.2 770.2 2032.5 755.2 2045.0 751.0"/>
<path d="M1950.0 706.0 C1945.0 714.3 1929.2 739.3 1920.0 756.0 C1910.8 772.7 1900.0 789.3 1895.0 806.0 C1890.0 822.7 1887.5 839.3 1890.0 856.0 C1892.5 872.7 1905.8 889.3 1910.0 906.0 C1914.2 922.7 1914.2 939.3 1915.0 956.0 C1915.8 972.7 1915.0 997.7 1915.0 1006.0"/>
<path d="M1920.0 1151.0 C1928.3 1143.5 1953.3 1120.2 1970.0 1106.0 C1986.7 1091.8 2004.2 1078.5 2020.0 1066.0 C2035.8 1053.5 2057.5 1036.8 2065.0 1031.0"/>
<path d="M1870.0 996.0 C1873.3 1004.3 1884.2 1029.3 1890.0 1046.0 C1895.8 1062.7 1900.0 1078.5 1905.0 1096.0 C1910.0 1113.5 1917.5 1141.8 1920.0 1151.0"/>
<path d="M1930.0 926.0 C1931.7 917.7 1933.3 891.0 1940.0 876.0 C1946.7 861.0 1956.7 851.8 1970.0 836.0 C1983.3 820.2 2003.3 797.7 2020.0 781.0 C2036.7 764.3 2061.7 743.5 2070.0 736.0"/>
<path d="M1975.0 1006.0 C1975.4 1014.3 1974.2 1041.0 1977.5 1056.0 C1980.8 1071.0 1987.9 1082.7 1995.0 1096.0 C2002.1 1109.3 2010.8 1121.8 2020.0 1136.0 C2029.2 1150.2 2040.0 1166.0 2050.0 1181.0 C2060.0 1196.0 2075.0 1218.5 2080.0 1226.0"/>
<path d="M1170.0 1156.0 C1180.0 1154.3 1209.2 1146.0 1230.0 1146.0 C1250.8 1146.0 1271.7 1152.7 1295.0 1156.0 C1318.3 1159.3 1347.5 1157.7 1370.0 1166.0 C1392.5 1174.3 1416.7 1191.0 1430.0 1206.0 C1443.3 1221.0 1448.3 1240.2 1450.0 1256.0 C1451.7 1271.8 1441.7 1293.5 1440.0 1301.0"/>
<path d="M1543.0 1188.0 C1552.5 1186.0 1580.5 1183.0 1600.0 1176.0 C1619.5 1169.0 1643.4 1151.2 1660.0 1146.0 C1676.6 1140.8 1692.9 1145.2 1699.5 1145.0"/>
<path d="M1370.0 1166.0 C1375.8 1167.7 1391.7 1169.3 1405.0 1176.0 C1418.3 1182.7 1435.8 1204.3 1450.0 1206.0 C1464.2 1207.7 1474.5 1189.0 1490.0 1186.0 C1505.5 1183.0 1534.2 1187.7 1543.0 1188.0"/>
<path d="M1991.2 960.0 C1988.6 964.2 1979.0 976.8 1976.0 985.2 C1973.1 993.6 1973.5 999.9 1973.5 1010.4 C1973.5 1020.9 1973.1 1034.8 1976.0 1048.2 C1979.0 1061.7 1985.3 1076.4 1991.2 1091.1 C1997.0 1105.8 2002.9 1122.6 2011.3 1136.4 C2019.7 1150.3 2030.6 1163.3 2041.6 1174.2 C2052.5 1185.2 2062.6 1194.0 2076.8 1202.0 C2091.1 1210.0 2109.2 1217.5 2127.3 1222.1 C2145.3 1226.8 2168.4 1229.3 2185.2 1229.7 C2202.0 1230.1 2213.4 1228.4 2228.1 1224.7 C2242.8 1220.9 2265.9 1210.0 2273.5 1207.0"/>
<path d="M1920.6 1151.6 C1926.9 1146.5 1946.6 1131.4 1958.4 1121.3 C1970.1 1111.2 1985.7 1096.1 1991.2 1091.1"/>
<path d="M2185.2 1060.8 C2182.3 1065.9 2173.0 1078.5 2167.6 1091.1 C2162.1 1103.7 2157.5 1122.6 2152.5 1136.4 C2147.4 1150.3 2139.9 1160.0 2137.3 1174.2 C2134.8 1188.5 2137.3 1214.2 2137.3 1222.1"/>
<path d="M2197.8 1111.2 C2199.1 1118.0 2202.9 1139.0 2205.4 1151.6 C2207.9 1164.2 2210.4 1174.2 2213.0 1186.8 C2215.5 1199.5 2218.0 1215.0 2220.5 1227.2 C2223.0 1239.4 2226.8 1254.5 2228.1 1259.9"/>
<path d="M2081.9 1006.6 C2091.6 1006.8 2123.9 1006.8 2139.9 1007.9 C2155.8 1008.9 2166.7 1012.9 2177.7 1012.9 C2188.6 1012.9 2200.8 1008.7 2205.4 1007.9"/>
<path d="M2253.3 1043.2 C2257.5 1048.2 2270.1 1063.3 2278.5 1073.4 C2286.9 1083.5 2295.3 1093.2 2303.7 1103.7 C2312.1 1114.2 2316.3 1123.8 2328.9 1136.4 C2341.5 1149.0 2365.5 1168.8 2379.3 1179.3 C2393.2 1189.8 2399.5 1193.2 2412.1 1199.5 C2424.7 1205.8 2441.3 1210.8 2454.9 1217.1 C2468.6 1223.4 2487.5 1233.9 2494.0 1237.3"/>
<path d="M2185.2 1229.7 L2175.1 1259.9"/>
<path d="M2026.4 1033.1 C2023.9 1037.7 2015.5 1051.2 2011.3 1060.8 C2007.1 1070.5 2002.9 1086.0 2001.2 1091.1"/>
<path d="M1850.0 727.8 C1858.4 726.5 1883.6 721.1 1900.4 720.2 C1917.2 719.4 1938.2 720.2 1950.8 722.8 C1963.4 725.3 1968.5 728.2 1976.0 735.4 C1983.6 742.5 1990.3 755.5 1996.2 765.6 C2002.1 775.7 2008.8 790.8 2011.3 795.9"/>
<path d="M1950.8 722.8 C1946.6 729.9 1934.0 750.9 1925.6 765.6 C1917.2 780.3 1905.9 796.7 1900.4 811.0 C1894.9 825.3 1892.8 837.9 1892.8 851.3 C1892.8 864.8 1894.9 880.7 1900.4 891.6 C1905.9 902.6 1921.4 912.6 1925.6 916.8"/>
<path d="M1850.0 795.9 C1858.4 801.7 1883.6 819.8 1900.4 831.2 C1917.2 842.5 1934.0 853.8 1950.8 863.9 C1967.6 874.0 1985.3 882.8 2001.2 891.6 C2017.2 900.5 2034.0 910.1 2046.6 916.8 C2059.2 923.6 2071.8 929.5 2076.8 932.0"/>
<path d="M2011.3 780.7 C2007.1 786.6 1995.4 802.6 1986.1 816.0 C1976.9 829.5 1964.3 848.0 1955.9 861.4 C1947.5 874.8 1939.9 883.2 1935.7 896.7 C1931.5 910.1 1932.3 926.5 1930.7 942.1 C1929.0 957.6 1926.5 982.0 1925.6 989.9"/>
<path d="M1965.9 846.3 C1971.8 849.6 1991.2 860.6 2001.2 866.4 C2011.3 872.3 2022.2 879.0 2026.4 881.6"/>
<path d="M2112.1 783.3 C2107.9 787.5 2094.5 799.6 2086.9 808.5 C2079.4 817.3 2073.5 828.2 2066.8 836.2 C2060.0 844.2 2053.3 848.8 2046.6 856.4 C2039.9 863.9 2033.2 871.5 2026.4 881.6 C2019.7 891.6 2011.3 905.9 2006.3 916.8 C2001.2 927.8 1998.3 934.9 1996.2 947.1 C1994.1 959.3 1994.1 982.8 1993.7 989.9"/>
<path d="M2147.4 690.0 C2148.7 696.3 2152.0 715.2 2155.0 727.8 C2157.9 740.4 2162.1 752.6 2165.1 765.6 C2168.0 778.6 2170.5 793.3 2172.6 805.9 C2174.7 818.5 2175.6 830.3 2177.7 841.2 C2179.8 852.2 2183.6 861.4 2185.2 871.5 C2186.9 881.6 2187.3 896.7 2187.8 901.7"/>
<path d="M2142.4 732.8 C2148.3 734.5 2162.1 741.3 2177.7 742.9 C2193.2 744.6 2222.2 743.8 2235.6 742.9 C2249.1 742.1 2254.5 738.7 2258.3 737.9"/>
<path d="M2142.4 732.8 C2142.0 736.6 2142.4 748.8 2139.9 755.5 C2137.3 762.3 2131.9 768.6 2127.3 773.2 C2122.6 777.8 2114.7 781.6 2112.1 783.3"/>
<path d="M2127.3 783.3 C2130.6 787.5 2141.1 800.5 2147.4 808.5 C2153.7 816.4 2162.1 827.4 2165.1 831.2"/>
<path d="M2258.3 737.9 C2260.8 742.5 2267.6 752.6 2273.5 765.6 C2279.3 778.6 2290.3 807.6 2293.6 816.0"/>
<path d="M2323.9 795.9 C2319.7 799.2 2306.2 809.3 2298.7 816.0 C2291.1 822.7 2285.2 829.5 2278.5 836.2 C2271.8 842.9 2261.7 853.0 2258.3 856.4"/>
<path d="M2389.4 828.6 C2387.7 834.9 2384.4 853.8 2379.3 866.4 C2374.3 879.0 2366.7 893.3 2359.1 904.2 C2351.6 915.2 2338.1 927.4 2333.9 932.0"/>
<path d="M2494.0 727.8 C2488.3 729.9 2470.7 737.1 2460.0 740.4 C2449.3 743.8 2435.6 742.5 2429.7 748.0 C2423.8 753.4 2428.9 766.9 2424.7 773.2 C2420.5 779.5 2407.9 783.7 2404.5 785.8"/>
<path d="M2059.2 954.7 C2062.1 957.6 2069.7 970.2 2076.8 972.3 C2084.0 974.4 2095.3 968.9 2102.1 967.3 C2108.8 965.6 2114.7 963.1 2117.2 962.2"/>
<path d="M1850.0 932.0 C1858.4 932.8 1883.6 935.3 1900.4 937.0 C1917.2 938.7 1934.9 940.4 1950.8 942.1 C1966.8 943.7 1988.6 946.3 1996.2 947.1"/>
<path d="M2688.0 806.0 C2693.0 826.0 2706.3 892.7 2718.0 926.0 C2729.7 959.3 2748.0 985.2 2758.0 1006.0 C2768.0 1026.8 2770.5 1032.7 2778.0 1051.0 C2785.5 1069.3 2799.7 1093.5 2803.0 1116.0 C2806.3 1138.5 2797.2 1166.0 2798.0 1186.0 C2798.8 1206.0 2807.2 1216.8 2808.0 1236.0 C2808.8 1255.2 2803.8 1290.2 2803.0 1301.0"/>
<path d="M2778.0 1051.0 C2788.0 1042.7 2816.3 1019.3 2838.0 1001.0 C2859.7 982.7 2891.3 958.5 2908.0 941.0 C2924.7 923.5 2921.3 913.5 2938.0 896.0 C2954.7 878.5 2991.3 851.0 3008.0 836.0 C3024.7 821.0 3025.5 812.7 3038.0 806.0 C3050.5 799.3 3060.5 796.8 3083.0 796.0 C3105.5 795.2 3158.0 800.2 3173.0 801.0"/>
<path d="M2888.0 706.0 C2887.2 716.0 2887.2 746.0 2883.0 766.0 C2878.8 786.0 2864.7 807.7 2863.0 826.0 C2861.3 844.3 2869.7 861.0 2873.0 876.0 C2876.3 891.0 2880.5 904.3 2883.0 916.0 C2885.5 927.7 2887.2 941.0 2888.0 946.0"/>
<path d="M2968.0 706.0 C2973.0 713.5 2988.0 739.3 2998.0 751.0 C3008.0 762.7 3021.3 766.8 3028.0 776.0 C3034.7 785.2 3036.3 801.0 3038.0 806.0"/>
<path d="M3078.0 796.0 C3077.2 802.7 3069.7 819.3 3073.0 836.0 C3076.3 852.7 3092.2 881.0 3098.0 896.0 C3103.8 911.0 3107.6 916.0 3108.0 926.0 C3108.4 936.0 3100.5 942.7 3100.5 956.0 C3100.5 969.3 3103.4 993.5 3108.0 1006.0 C3112.6 1018.5 3123.0 1019.3 3128.0 1031.0 C3133.0 1042.7 3136.3 1068.5 3138.0 1076.0"/>
<path d="M3188.0 706.0 C3189.7 712.7 3199.7 731.8 3198.0 746.0 C3196.3 760.2 3182.2 773.5 3178.0 791.0 C3173.8 808.5 3173.8 841.0 3173.0 851.0"/>
<path d="M3173.0 851.0 C3178.8 851.8 3197.2 852.7 3208.0 856.0 C3218.8 859.3 3221.3 861.8 3238.0 871.0 C3254.7 880.2 3288.0 906.8 3308.0 911.0 C3328.0 915.2 3341.3 905.2 3358.0 896.0 C3374.7 886.8 3387.2 866.8 3408.0 856.0 C3428.8 845.2 3462.2 845.2 3483.0 831.0 C3503.8 816.8 3532.2 783.5 3533.0 771.0 C3533.8 758.5 3496.3 762.7 3488.0 756.0 C3479.7 749.3 3483.8 735.2 3483.0 731.0"/>
<path d="M3308.0 921.0 C3299.7 931.8 3273.8 968.5 3258.0 986.0 C3242.2 1003.5 3221.3 1014.3 3213.0 1026.0 C3204.7 1037.7 3206.3 1042.7 3208.0 1056.0 C3209.7 1069.3 3219.7 1090.2 3223.0 1106.0 C3226.3 1121.8 3230.5 1137.7 3228.0 1151.0 C3225.5 1164.3 3218.0 1174.3 3208.0 1186.0 C3198.0 1197.7 3175.6 1205.5 3168.0 1221.0 C3160.4 1236.5 3163.4 1269.3 3162.5 1279.0"/>
<path d="M3358.0 966.0 C3358.8 971.0 3354.7 990.2 3363.0 996.0 C3371.3 1001.8 3396.3 1001.8 3408.0 1001.0 C3419.7 1000.2 3421.3 992.7 3433.0 991.0 C3444.7 989.3 3461.3 991.8 3478.0 991.0 C3494.7 990.2 3512.5 982.5 3533.0 986.0 C3553.5 989.5 3589.7 1007.7 3601.0 1012.0"/>
<path d="M3478.0 991.0 C3473.8 996.8 3459.7 1013.5 3453.0 1026.0 C3446.3 1038.5 3445.5 1052.7 3438.0 1066.0 C3430.5 1079.3 3416.3 1091.0 3408.0 1106.0 C3399.7 1121.0 3391.3 1139.3 3388.0 1156.0 C3384.7 1172.7 3386.3 1189.3 3388.0 1206.0 C3389.7 1222.7 3395.5 1240.2 3398.0 1256.0 C3400.5 1271.8 3402.2 1293.5 3403.0 1301.0"/>
<path d="M3128.0 1031.0 C3127.2 1036.8 3122.2 1053.5 3123.0 1066.0 C3123.8 1078.5 3132.2 1094.3 3133.0 1106.0 C3133.8 1117.7 3127.2 1122.7 3128.0 1136.0 C3128.8 1149.3 3132.2 1166.0 3138.0 1186.0 C3143.8 1206.0 3158.4 1244.3 3162.5 1256.0"/>
<path d="M3088.0 1096.0 C3081.3 1097.7 3057.2 1097.7 3048.0 1106.0 C3038.8 1114.3 3039.7 1134.3 3033.0 1146.0 C3026.3 1157.7 3017.2 1169.3 3008.0 1176.0 C2998.8 1182.7 2983.0 1184.3 2978.0 1186.0"/>
<path d="M3601.0 1035.0 C3606.3 1033.5 3623.5 1030.8 3633.0 1026.0 C3642.5 1021.2 3648.8 1007.7 3658.0 1006.0 C3667.2 1004.3 3679.7 1007.7 3688.0 1016.0 C3696.3 1024.3 3698.3 1047.7 3708.0 1056.0 C3717.7 1064.3 3739.7 1064.3 3746.0 1066.0"/>
<path d="M2458.0 1026.0 C2466.3 1021.0 2499.7 1012.7 2508.0 996.0 C2516.3 979.3 2511.3 944.3 2508.0 926.0 C2504.7 907.7 2496.3 895.2 2488.0 886.0 C2479.7 876.8 2463.0 873.5 2458.0 871.0"/>
<path d="M2508.0 996.0 C2520.5 994.3 2563.8 997.7 2583.0 986.0 C2602.2 974.3 2616.3 936.0 2623.0 926.0"/>
<path d="M2623.0 826.0 C2620.5 833.5 2608.0 853.5 2608.0 871.0 C2608.0 888.5 2616.3 916.0 2623.0 931.0 C2629.7 946.0 2643.0 951.8 2648.0 961.0 C2653.0 970.2 2655.5 970.2 2653.0 986.0 C2650.5 1001.8 2638.0 1039.3 2633.0 1056.0 C2628.0 1072.7 2624.7 1081.0 2623.0 1086.0"/>
<path d="M2458.0 851.0 C2468.8 846.8 2502.2 831.8 2523.0 826.0 C2543.8 820.2 2567.2 816.0 2583.0 816.0 C2598.8 816.0 2612.2 824.3 2618.0 826.0"/>
<path d="M2633.0 1056.0 C2620.5 1055.2 2580.5 1054.3 2558.0 1051.0 C2535.5 1047.7 2511.3 1030.2 2498.0 1036.0 C2484.7 1041.8 2484.7 1075.2 2478.0 1086.0 C2471.3 1096.8 2461.3 1098.5 2458.0 1101.0"/>
<path d="M2728.0 1121.0 C2726.3 1131.0 2718.0 1160.2 2718.0 1181.0 C2718.0 1201.8 2729.7 1226.0 2728.0 1246.0 C2726.3 1266.0 2711.3 1291.8 2708.0 1301.0"/>
<path d="M2638.0 1211.0 C2636.3 1218.5 2630.5 1241.0 2628.0 1256.0 C2625.5 1271.0 2623.8 1293.5 2623.0 1301.0"/>
<path d="M2643.0 1051.0 C2658.8 1054.3 2712.2 1060.2 2738.0 1071.0 C2763.8 1081.8 2778.0 1103.5 2798.0 1116.0 C2818.0 1128.5 2831.3 1134.3 2858.0 1146.0 C2884.7 1157.7 2933.0 1176.0 2958.0 1186.0 C2983.0 1196.0 2983.0 1194.3 3008.0 1206.0 C3033.0 1217.7 3082.2 1243.8 3108.0 1256.0 C3133.8 1268.2 3153.4 1275.2 3162.5 1279.0"/>
<path d="M2788.0 926.0 C2804.7 922.7 2863.0 911.0 2888.0 906.0 C2913.0 901.0 2929.7 897.7 2938.0 896.0"/>
<path d="M1170.0 1384.0 C1178.3 1391.5 1207.5 1414.8 1220.0 1429.0 C1232.5 1443.2 1228.3 1460.7 1245.0 1469.0 C1261.7 1477.3 1297.5 1482.3 1320.0 1479.0 C1342.5 1475.7 1365.0 1462.3 1380.0 1449.0 C1395.0 1435.7 1398.3 1412.3 1410.0 1399.0 C1421.7 1385.7 1436.7 1382.3 1450.0 1369.0 C1463.3 1355.7 1475.0 1334.0 1490.0 1319.0 C1505.0 1304.0 1524.2 1290.7 1540.0 1279.0 C1555.8 1267.3 1577.5 1254.0 1585.0 1249.0"/>
<path d="M1245.0 1469.0 C1251.7 1477.3 1270.8 1502.3 1285.0 1519.0 C1299.2 1535.7 1314.2 1556.5 1330.0 1569.0 C1345.8 1581.5 1361.7 1583.2 1380.0 1594.0 C1398.3 1604.8 1421.7 1624.8 1440.0 1634.0 C1458.3 1643.2 1481.7 1646.5 1490.0 1649.0"/>
<path d="M1170.0 1529.0 C1176.7 1524.0 1197.5 1509.0 1210.0 1499.0 C1222.5 1489.0 1239.2 1474.0 1245.0 1469.0"/>
<path d="M1440.0 1634.0 C1436.7 1639.8 1433.3 1659.8 1420.0 1669.0 C1406.7 1678.2 1376.7 1680.7 1360.0 1689.0 C1343.3 1697.3 1330.8 1706.5 1320.0 1719.0 C1309.2 1731.5 1299.2 1756.5 1295.0 1764.0"/>
<path d="M1520.0 1404.0 C1525.0 1408.2 1541.7 1418.2 1550.0 1429.0 C1558.3 1439.8 1561.7 1457.3 1570.0 1469.0 C1578.3 1480.7 1583.3 1489.0 1600.0 1499.0 C1616.7 1509.0 1650.0 1519.0 1670.0 1529.0 C1690.0 1539.0 1715.8 1551.5 1720.0 1559.0 C1724.2 1566.5 1715.0 1583.2 1695.0 1574.0 C1675.0 1564.8 1615.8 1515.7 1600.0 1504.0"/>
<path d="M1670.0 1529.0 C1682.3 1527.3 1724.0 1525.7 1744.0 1519.0 C1764.0 1512.3 1780.7 1502.3 1790.0 1489.0 C1799.3 1475.7 1800.0 1454.0 1800.0 1439.0 C1800.0 1424.0 1786.7 1410.7 1790.0 1399.0 C1793.3 1387.3 1815.0 1374.0 1820.0 1369.0"/>
<path d="M1635.0 1169.0 C1637.5 1175.7 1640.8 1195.7 1650.0 1209.0 C1659.2 1222.3 1678.3 1234.8 1690.0 1249.0 C1701.7 1263.2 1706.7 1278.2 1720.0 1294.0 C1733.3 1309.8 1756.7 1331.5 1770.0 1344.0 C1783.3 1356.5 1795.0 1364.8 1800.0 1369.0"/>
<path d="M1770.0 1344.0 C1779.2 1339.0 1821.7 1324.0 1825.0 1314.0 C1828.3 1304.0 1806.2 1296.8 1790.0 1284.0 C1773.8 1271.2 1738.3 1245.2 1728.0 1237.5"/>
<path d="M1740.0 1169.0 C1745.0 1177.3 1758.3 1202.3 1770.0 1219.0 C1781.7 1235.7 1800.8 1253.2 1810.0 1269.0 C1819.2 1284.8 1822.5 1306.5 1825.0 1314.0"/>
<path d="M1840.0 1519.0 C1845.0 1522.3 1858.3 1534.0 1870.0 1539.0 C1881.7 1544.0 1898.3 1544.0 1910.0 1549.0 C1921.7 1554.0 1933.3 1557.3 1940.0 1569.0 C1946.7 1580.7 1950.0 1602.3 1950.0 1619.0 C1950.0 1635.7 1938.9 1648.9 1940.0 1669.0 C1941.1 1689.1 1953.8 1727.8 1956.5 1739.5"/>
<path d="M1956.5 1739.5 C1950.4 1737.8 1936.1 1736.6 1920.0 1729.0 C1903.9 1721.4 1878.3 1704.0 1860.0 1694.0 C1841.7 1684.0 1818.3 1673.2 1810.0 1669.0"/>
<path d="M1956.5 1739.5 C1967.1 1737.8 1992.8 1732.4 2020.0 1729.0 C2047.2 1725.6 2086.7 1719.8 2120.0 1719.0 C2153.3 1718.2 2195.0 1719.0 2220.0 1724.0 C2245.0 1729.0 2261.7 1744.8 2270.0 1749.0"/>
<path d="M2000.0 1409.0 C2008.3 1408.2 2030.0 1402.3 2050.0 1404.0 C2070.0 1405.7 2096.7 1415.7 2120.0 1419.0 C2143.3 1422.3 2170.0 1427.3 2190.0 1424.0 C2210.0 1420.7 2231.7 1403.2 2240.0 1399.0"/>
<path d="M2095.0 1409.0 C2104.2 1419.0 2132.5 1455.7 2150.0 1469.0 C2167.5 1482.3 2185.0 1484.0 2200.0 1489.0 C2215.0 1494.0 2233.3 1497.3 2240.0 1499.0"/>
<path d="M2240.0 1349.0 C2250.0 1354.0 2280.0 1365.7 2300.0 1379.0 C2320.0 1392.3 2346.7 1414.8 2360.0 1429.0 C2373.3 1443.2 2370.0 1449.0 2380.0 1464.0 C2390.0 1479.0 2411.7 1501.5 2420.0 1519.0 C2428.3 1536.5 2428.3 1560.7 2430.0 1569.0"/>
<path d="M2380.0 1464.0 C2370.0 1466.5 2343.3 1476.5 2320.0 1479.0 C2296.7 1481.5 2253.3 1479.0 2240.0 1479.0"/>
<path d="M2270.0 1624.0 C2278.3 1628.2 2305.0 1636.5 2320.0 1649.0 C2335.0 1661.5 2350.0 1679.8 2360.0 1699.0 C2370.0 1718.2 2376.7 1753.2 2380.0 1764.0"/>
<path d="M2140.0 1169.0 C2140.0 1177.3 2118.3 1211.5 2140.0 1219.0 C2161.7 1226.5 2243.3 1222.3 2270.0 1214.0 C2296.7 1205.7 2295.0 1176.5 2300.0 1169.0"/>
<path d="M2020.0 1224.0 C2036.7 1224.8 2086.7 1229.8 2120.0 1229.0 C2153.3 1228.2 2203.3 1220.7 2220.0 1219.0"/>
<path d="M2295.0 1169.0 C2296.7 1183.2 2309.2 1229.0 2305.0 1254.0 C2300.8 1279.0 2275.8 1308.2 2270.0 1319.0"/>
<path d="M2185.0 1224.0 L2150.0 1299.0"/>
<path d="M2090.0 1226.5 L2060.0 1284.0"/>
<path d="M2120.0 1629.0 C2123.3 1635.7 2132.5 1657.3 2140.0 1669.0 C2147.5 1680.7 2151.7 1689.8 2165.0 1699.0 C2178.3 1708.2 2210.8 1719.8 2220.0 1724.0"/>
<path d="M2818.0 1349.0 C2826.3 1344.8 2853.0 1329.4 2868.0 1324.0 C2883.0 1318.6 2893.0 1310.7 2908.0 1316.5 C2923.0 1322.3 2946.3 1348.6 2958.0 1359.0 C2969.7 1369.4 2974.7 1375.7 2978.0 1379.0"/>
<path d="M2803.0 1169.0 C2803.8 1180.7 2805.5 1218.2 2808.0 1239.0 C2810.5 1259.8 2815.5 1275.7 2818.0 1294.0 C2820.5 1312.3 2819.7 1329.8 2823.0 1349.0 C2826.3 1368.2 2836.3 1392.3 2838.0 1409.0 C2839.7 1425.7 2834.7 1435.7 2833.0 1449.0 C2831.3 1462.3 2829.7 1475.7 2828.0 1489.0 C2826.3 1502.3 2823.8 1522.3 2823.0 1529.0"/>
<path d="M2728.0 1351.5 L2758.0 1353.0"/>
<path d="M2623.0 1371.5 C2630.5 1371.1 2650.5 1367.8 2668.0 1369.0 C2685.5 1370.2 2709.7 1377.3 2728.0 1379.0 C2746.3 1380.7 2761.3 1377.3 2778.0 1379.0 C2794.7 1380.7 2819.7 1387.3 2828.0 1389.0"/>
<path d="M2608.0 1214.0 C2611.3 1223.2 2628.0 1249.0 2628.0 1269.0 C2628.0 1289.0 2608.8 1316.9 2608.0 1334.0 C2607.2 1351.1 2626.3 1354.0 2623.0 1371.5 C2619.7 1389.0 2598.8 1419.4 2588.0 1439.0 C2577.2 1458.6 2568.8 1474.8 2558.0 1489.0 C2547.2 1503.2 2529.7 1510.7 2523.0 1524.0 C2516.3 1537.3 2518.0 1555.7 2518.0 1569.0 C2518.0 1582.3 2523.8 1587.3 2523.0 1604.0 C2522.2 1620.7 2515.5 1649.8 2513.0 1669.0 C2510.5 1688.2 2508.8 1710.7 2508.0 1719.0"/>
<path d="M2738.0 1539.0 C2746.3 1539.0 2773.8 1540.7 2788.0 1539.0 C2802.2 1537.3 2817.2 1530.7 2823.0 1529.0"/>
<path d="M3063.0 1479.0 C3073.0 1485.7 3103.8 1509.0 3123.0 1519.0 C3142.2 1529.0 3163.8 1530.7 3178.0 1539.0 C3192.2 1547.3 3200.5 1568.2 3208.0 1569.0 C3215.5 1569.8 3211.3 1549.0 3223.0 1544.0 C3234.7 1539.0 3263.8 1539.8 3278.0 1539.0 C3292.2 1538.2 3303.0 1539.0 3308.0 1539.0"/>
<path d="M3162.5 1279.0 C3165.9 1287.3 3177.9 1314.0 3183.0 1329.0 C3188.1 1344.0 3187.2 1354.0 3193.0 1369.0 C3198.8 1384.0 3207.2 1402.3 3218.0 1419.0 C3228.8 1435.7 3243.8 1452.3 3258.0 1469.0 C3272.2 1485.7 3294.7 1507.3 3303.0 1519.0 C3311.3 1530.7 3302.2 1526.9 3308.0 1539.0 C3313.8 1551.1 3333.0 1582.8 3338.0 1591.5"/>
<path d="M3308.0 1539.0 C3312.2 1535.7 3324.7 1529.0 3333.0 1519.0 C3341.3 1509.0 3353.0 1500.7 3358.0 1479.0 C3363.0 1457.3 3358.0 1412.3 3363.0 1389.0 C3368.0 1365.7 3383.0 1359.0 3388.0 1339.0 C3393.0 1319.0 3390.5 1286.5 3393.0 1269.0 C3395.5 1251.5 3403.8 1245.7 3403.0 1234.0 C3402.2 1222.3 3390.5 1204.8 3388.0 1199.0"/>
<path d="M3162.5 1279.0 C3161.8 1269.0 3157.1 1234.0 3158.0 1219.0 C3158.9 1204.0 3161.3 1197.3 3168.0 1189.0 C3174.7 1180.7 3193.0 1172.3 3198.0 1169.0"/>
<path d="M3128.0 1169.0 C3129.7 1174.0 3133.0 1190.7 3138.0 1199.0 C3143.0 1207.3 3154.7 1215.7 3158.0 1219.0"/>
<path d="M3338.0 1591.5 C3334.7 1597.8 3325.5 1616.9 3318.0 1629.0 C3310.5 1641.1 3299.7 1652.3 3293.0 1664.0 C3286.3 1675.7 3283.0 1682.3 3278.0 1699.0 C3273.0 1715.7 3265.5 1753.2 3263.0 1764.0"/>
<path d="M2458.0 1229.0 C2466.3 1234.0 2489.7 1249.0 2508.0 1259.0 C2526.3 1269.0 2551.3 1276.5 2568.0 1289.0 C2584.7 1301.5 2601.3 1326.5 2608.0 1334.0"/>
<path d="M2458.0 1734.0 C2466.3 1733.2 2487.2 1729.4 2508.0 1729.0 C2528.8 1728.6 2558.0 1731.5 2583.0 1731.5 C2608.0 1731.5 2645.5 1729.4 2658.0 1729.0"/>
<path d="M2658.0 1729.0 L2668.0 1764.0"/>
<path d="M3500.0 770.0 C3509.8 766.2 3539.5 757.7 3559.0 747.0 C3578.5 736.3 3597.5 717.8 3617.0 706.0 C3636.5 694.2 3656.3 686.8 3676.0 676.0 C3695.7 665.2 3711.3 654.7 3735.0 641.0 C3758.7 627.3 3804.2 601.8 3818.0 594.0"/>
<path d="M3547.0 400.0 C3551.8 403.8 3566.7 421.0 3576.0 423.0 C3585.3 425.0 3592.2 401.2 3603.0 412.0 C3613.8 422.8 3627.8 475.3 3641.0 488.0 C3654.2 500.7 3668.3 487.5 3682.0 488.0 C3695.7 488.5 3708.3 493.0 3723.0 491.0 C3737.7 489.0 3754.2 484.3 3770.0 476.0 C3785.8 467.7 3810.0 446.8 3818.0 441.0"/>
</g>
<g fill="none" stroke="#7d8290" stroke-width="1.3">
<path d="M1700.0 111.0 C1705.0 126.0 1718.3 171.0 1730.0 201.0 C1741.7 231.0 1755.0 261.0 1770.0 291.0 C1785.0 321.0 1803.3 351.0 1820.0 381.0 C1836.7 411.0 1855.0 442.7 1870.0 471.0 C1885.0 499.3 1896.7 527.7 1910.0 551.0 C1923.3 574.3 1936.7 592.7 1950.0 611.0 C1963.3 629.3 1978.3 645.2 1990.0 661.0 C2001.7 676.8 2015.0 698.5 2020.0 706.0"/>
<path d="M1170.0 326.0 C1180.0 331.8 1210.0 348.5 1230.0 361.0 C1250.0 373.5 1276.7 386.0 1290.0 401.0 C1303.3 416.0 1296.7 437.7 1310.0 451.0 C1323.3 464.3 1350.0 469.3 1370.0 481.0 C1390.0 492.7 1410.0 507.7 1430.0 521.0 C1450.0 534.3 1470.0 544.3 1490.0 561.0 C1510.0 577.7 1528.3 602.7 1550.0 621.0 C1571.7 639.3 1600.0 656.8 1620.0 671.0 C1640.0 685.2 1661.7 700.2 1670.0 706.0"/>
<path d="M2200.0 111.0 C2210.0 119.3 2241.7 144.3 2260.0 161.0 C2278.3 177.7 2298.3 189.3 2310.0 211.0 C2321.7 232.7 2324.2 261.0 2330.0 291.0 C2335.8 321.0 2340.0 357.7 2345.0 391.0 C2350.0 424.3 2354.2 454.3 2360.0 491.0 C2365.8 527.7 2375.0 575.2 2380.0 611.0 C2385.0 646.8 2388.3 690.2 2390.0 706.0"/>
<path d="M2405.0 111.0 C2407.5 127.7 2415.0 177.7 2420.0 211.0 C2425.0 244.3 2430.0 277.7 2435.0 311.0 C2440.0 344.3 2446.2 386.0 2450.0 411.0 C2453.8 436.0 2456.7 452.7 2458.0 461.0"/>
<path d="M2458.0 256.0 C2462.2 263.5 2477.2 278.5 2483.0 301.0 C2488.8 323.5 2488.8 364.3 2493.0 391.0 C2497.2 417.7 2503.0 432.7 2508.0 461.0 C2513.0 489.3 2522.2 531.8 2523.0 561.0 C2523.8 590.2 2517.2 611.8 2513.0 636.0 C2508.8 660.2 2500.5 694.3 2498.0 706.0"/>
<path d="M1170.0 1121.0 C1186.7 1110.2 1236.7 1073.5 1270.0 1056.0 C1303.3 1038.5 1328.3 1028.5 1370.0 1016.0 C1411.7 1003.5 1470.0 991.8 1520.0 981.0 C1570.0 970.2 1616.7 961.0 1670.0 951.0 C1723.3 941.0 1781.7 931.0 1840.0 921.0 C1898.3 911.0 1969.2 898.5 2020.0 891.0 C2070.8 883.5 2124.2 878.5 2145.0 876.0"/>
<path d="M2081.9 1108.7 C2086.1 1112.1 2097.0 1122.2 2107.1 1128.9 C2117.2 1135.6 2129.4 1145.3 2142.4 1149.0 C2155.4 1152.8 2171.8 1151.8 2185.2 1151.6 C2198.7 1151.4 2207.5 1151.1 2223.0 1147.8 C2238.6 1144.4 2262.9 1137.5 2278.5 1131.4 C2294.0 1125.3 2303.7 1112.5 2316.3 1111.2 C2328.9 1110.0 2339.4 1118.8 2354.1 1123.8 C2368.8 1128.9 2381.2 1135.2 2404.5 1141.5 C2427.8 1147.8 2479.1 1158.3 2494.0 1161.6"/>
<path d="M1850.0 926.9 C1866.8 924.4 1917.2 917.7 1950.8 911.8 C1984.4 905.9 2022.2 897.5 2051.6 891.6 C2081.0 885.8 2111.3 878.2 2127.3 876.5 C2143.2 874.8 2141.1 874.8 2147.4 881.6 C2153.7 888.3 2157.9 904.7 2165.1 916.8 C2172.2 929.0 2183.1 945.8 2190.3 954.7 C2197.4 963.5 2195.7 967.3 2207.9 969.8 C2220.1 972.3 2243.2 966.8 2263.4 969.8 C2283.5 972.7 2318.0 984.5 2328.9 987.4"/>
<path d="M2379.3 690.0 C2387.7 696.3 2416.3 713.9 2429.7 727.8 C2443.2 741.7 2456.6 756.4 2460.0 773.2 C2463.3 790.0 2457.0 811.4 2449.9 828.6 C2442.7 845.9 2431.0 867.3 2417.1 876.5 C2403.3 885.8 2383.5 879.5 2366.7 884.1 C2349.9 888.7 2331.0 898.8 2316.3 904.2 C2301.6 909.7 2284.8 914.7 2278.5 916.8"/>
<path d="M2046.6 1259.9 C2051.6 1247.8 2067.6 1210.0 2076.8 1186.8 C2086.1 1163.7 2095.3 1135.6 2102.1 1121.3 C2108.8 1107.0 2114.2 1107.9 2117.2 1101.2 C2120.1 1094.4 2119.3 1084.3 2119.7 1081.0"/>
<path d="M2458.0 1066.0 C2468.0 1077.7 2499.7 1116.0 2518.0 1136.0 C2536.3 1156.0 2553.0 1166.0 2568.0 1186.0 C2583.0 1206.0 2598.0 1236.8 2608.0 1256.0 C2618.0 1275.2 2624.7 1293.5 2628.0 1301.0"/>
<path d="M2533.0 1146.0 C2553.8 1145.2 2612.2 1139.3 2658.0 1141.0 C2703.8 1142.7 2758.0 1144.3 2808.0 1156.0 C2858.0 1167.7 2908.0 1191.8 2958.0 1211.0 C3008.0 1230.2 3073.9 1258.5 3108.0 1271.0 C3142.1 1283.5 3153.4 1283.5 3162.5 1286.0"/>
<path d="M3162.5 1279.0 C3164.2 1270.2 3165.4 1241.5 3173.0 1226.0 C3180.6 1210.5 3192.2 1199.3 3208.0 1186.0 C3223.8 1172.7 3247.2 1154.3 3268.0 1146.0 C3288.8 1137.7 3309.7 1134.3 3333.0 1136.0 C3356.3 1137.7 3387.2 1148.5 3408.0 1156.0 C3428.8 1163.5 3437.2 1181.0 3458.0 1181.0 C3478.8 1181.0 3512.2 1166.8 3533.0 1156.0 C3553.8 1145.2 3574.7 1122.7 3583.0 1116.0"/>
<path d="M2473.0 706.0 L2458.0 746.0"/>
<path d="M2508.0 741.0 L2658.0 706.0"/>
<path d="M1400.0 1169.0 C1405.0 1185.7 1415.0 1235.7 1430.0 1269.0 C1445.0 1302.3 1466.7 1339.0 1490.0 1369.0 C1513.3 1399.0 1543.3 1429.0 1570.0 1449.0 C1596.7 1469.0 1625.0 1479.8 1650.0 1489.0 C1675.0 1498.2 1698.3 1504.0 1720.0 1504.0 C1741.7 1504.0 1763.3 1498.2 1780.0 1489.0 C1796.7 1479.8 1806.7 1459.0 1820.0 1449.0 C1833.3 1439.0 1846.7 1433.2 1860.0 1429.0 C1873.3 1424.8 1891.7 1420.7 1900.0 1424.0 C1908.3 1427.3 1905.0 1434.8 1910.0 1449.0 C1915.0 1463.2 1923.3 1487.3 1930.0 1509.0 C1936.7 1530.7 1948.3 1555.7 1950.0 1579.0 C1951.7 1602.3 1938.3 1634.0 1940.0 1649.0 C1941.7 1664.0 1953.3 1669.0 1960.0 1669.0 C1966.7 1669.0 1976.7 1665.7 1980.0 1649.0 C1983.3 1632.3 1980.8 1599.0 1980.0 1569.0 C1979.2 1539.0 1973.3 1499.0 1975.0 1469.0 C1976.7 1439.0 1982.5 1414.0 1990.0 1389.0 C1997.5 1364.0 2008.3 1344.0 2020.0 1319.0 C2031.7 1294.0 2048.3 1264.0 2060.0 1239.0 C2071.7 1214.0 2085.0 1180.7 2090.0 1169.0"/>
<path d="M1940.0 1499.0 C1943.3 1490.7 1951.7 1467.3 1960.0 1449.0 C1968.3 1430.7 1985.0 1399.0 1990.0 1389.0"/>
<path d="M1950.0 1684.0 C1970.0 1684.0 2041.7 1686.5 2070.0 1684.0 C2098.3 1681.5 2103.3 1666.5 2120.0 1669.0 C2136.7 1671.5 2153.3 1689.8 2170.0 1699.0 C2186.7 1708.2 2211.7 1719.8 2220.0 1724.0"/>
<path d="M1430.0 1299.0 C1433.3 1294.0 1440.0 1277.3 1450.0 1269.0 C1460.0 1260.7 1475.0 1257.3 1490.0 1249.0 C1505.0 1240.7 1526.7 1227.3 1540.0 1219.0 C1553.3 1210.7 1553.3 1207.3 1570.0 1199.0 C1586.7 1190.7 1628.3 1174.0 1640.0 1169.0"/>
<path d="M2548.0 1169.0 C2558.0 1184.0 2591.3 1225.7 2608.0 1259.0 C2624.7 1292.3 2634.7 1334.0 2648.0 1369.0 C2661.3 1404.0 2676.3 1439.0 2688.0 1469.0 C2699.7 1499.0 2706.3 1525.7 2718.0 1549.0 C2729.7 1572.3 2741.3 1587.3 2758.0 1609.0 C2774.7 1630.7 2798.0 1653.2 2818.0 1679.0 C2838.0 1704.8 2868.0 1749.8 2878.0 1764.0"/>
<path d="M2693.0 1169.0 C2700.5 1184.0 2723.8 1234.0 2738.0 1259.0 C2752.2 1284.0 2771.3 1309.0 2778.0 1319.0"/>
<path d="M2873.0 1344.0 C2876.3 1345.7 2888.8 1348.2 2893.0 1354.0 C2897.2 1359.8 2899.7 1366.5 2898.0 1379.0 C2896.3 1391.5 2889.7 1418.6 2883.0 1429.0 C2876.3 1439.4 2873.8 1439.4 2858.0 1441.5 C2842.2 1443.6 2806.3 1438.6 2788.0 1441.5 C2769.7 1444.4 2759.7 1449.4 2748.0 1459.0 C2736.3 1468.6 2724.7 1487.3 2718.0 1499.0 C2711.3 1510.7 2709.7 1524.0 2708.0 1529.0"/>
<path d="M2908.0 1199.0 C2924.7 1205.7 2974.7 1224.8 3008.0 1239.0 C3041.3 1253.2 3086.3 1275.2 3108.0 1284.0 C3129.7 1292.8 3128.9 1292.3 3138.0 1291.5 C3147.1 1290.7 3158.4 1281.1 3162.5 1279.0"/>
</g>
<g fill="none" stroke="#727789" stroke-width="2.4" stroke-dasharray="8 5.5" opacity="0.85" stroke-linejoin="round">
<path d="M1305.0 111.0 L1302.5 146.0 L1320.0 166.0 L1330.0 186.0 L1337.5 236.0 L1342.5 261.0"/>
<path d="M1265.0 246.0 L1255.0 276.0 L1245.0 301.0 L1262.5 311.0 L1240.0 331.0 L1205.0 346.0 L1190.0 386.0 L1170.0 411.0"/>
<path d="M1420.0 111.0 L1397.5 123.5 L1390.0 146.0 L1405.0 176.0 L1440.0 206.0 L1465.0 228.5 L1490.0 261.0 L1497.5 291.0 L1502.5 311.0 L1530.0 298.5 L1542.5 321.0 L1570.0 311.0 L1595.0 301.0 L1610.0 316.0 L1622.5 331.0 L1635.0 338.5 L1650.0 351.0 L1680.0 368.5 L1665.0 381.0 L1685.0 398.5 L1670.0 421.0 L1655.0 443.5 L1685.0 481.0 L1670.0 491.0 L1695.0 526.0 L1700.0 546.0 L1662.5 568.5 L1670.0 611.0 L1700.0 643.5 L1690.0 671.0 L1670.0 706.0"/>
<path d="M1515.0 151.0 L1520.0 196.0 L1535.0 241.0 L1570.0 246.0 L1585.0 201.0 L1605.0 196.0 L1650.0 161.0"/>
<path d="M1910.0 111.0 L1970.0 146.0 L2045.0 206.0 L2120.0 261.0 L2185.0 306.0 L2225.0 336.0 L2250.0 376.0 L2262.5 421.0 L2257.5 461.0 L2270.0 491.0 L2360.0 481.0 L2355.0 456.0 L2395.0 431.0 L2440.0 416.0 L2458.0 431.0"/>
<path d="M2778.0 111.0 L2808.0 121.0 L2868.0 161.0 L2848.0 181.0 L2793.0 218.5 L2813.0 231.0 L2808.0 251.0 L2803.0 281.0 L2783.0 311.0 L2773.0 331.0 L2793.0 351.0 L2783.0 371.0 L2748.0 386.0 L2708.0 383.5 L2703.0 411.0 L2678.0 431.0 L2663.0 441.0 L2623.0 443.5 L2553.0 423.5 L2523.0 443.5 L2488.0 441.0 L2458.0 461.0"/>
<path d="M2663.0 441.0 L2643.0 476.0 L2668.0 511.0 L2703.0 551.0 L2668.0 601.0 L2678.0 636.0 L2738.0 651.0 L2758.0 661.0 L2788.0 671.0 L2778.0 691.0 L2808.0 706.0"/>
<path d="M3746.0 381.0 L3708.0 383.5 L3668.0 366.0 L3633.0 346.0 L3608.0 366.0 L3593.0 391.0 L3603.0 411.0 L3598.0 451.0 L3568.0 481.0 L3578.0 506.0 L3598.0 511.0 L3583.0 551.0 L3548.0 581.0 L3508.0 611.0 L3478.0 626.0 L3448.0 661.0 L3438.0 691.0 L3488.0 701.0 L3523.0 706.0"/>
<path d="M1662.5 706.0 L1650.0 721.0 L1630.0 741.0 L1640.0 756.0 L1590.0 801.0 L1595.0 826.0 L1610.0 856.0 L1590.0 876.0 L1570.0 896.0 L1552.5 923.5 L1565.0 956.0 L1560.0 976.0 L1530.0 983.5 L1530.0 988.5 L1585.0 988.5 L1585.0 1026.0 L1600.0 1031.0 L1597.5 1048.5 L1650.0 1066.0 L1685.0 1076.0 L1692.5 1101.0 L1690.0 1131.0 L1707.5 1166.0 L1712.5 1196.0 L1765.0 1226.0 L1815.0 1206.0 L1847.5 1176.0 L1920.0 1226.0 L1980.0 1271.0 L2020.0 1301.0"/>
<path d="M2788.0 716.0 L2790.5 736.0 L2808.0 756.0 L2810.5 781.0 L2798.0 806.0 L2768.0 831.0 L2745.5 853.5 L2768.0 871.0 L2788.0 878.5 L2803.0 901.0 L2793.0 916.0 L2828.0 941.0 L2858.0 961.0 L2873.0 973.5 L2880.5 951.0 L2908.0 946.0 L2938.0 953.5 L2978.0 936.0 L3000.5 941.0 L2988.0 986.0 L2978.0 1026.0 L2965.5 1061.0 L2978.0 1096.0 L2973.0 1131.0 L2973.0 1166.0 L2968.0 1186.0 L2953.0 1226.0 L2973.0 1251.0 L2978.0 1281.0 L2973.0 1301.0"/>
<path d="M3458.0 736.0 L3498.0 721.0 L3533.0 731.0 L3573.0 736.0 L3603.0 756.0 L3623.0 746.0 L3658.0 726.0 L3698.0 721.0 L3746.0 731.0"/>
<path d="M3443.0 1061.0 L3488.0 1096.0 L3498.0 1126.0 L3538.0 1131.0 L3553.0 1151.0 L3543.0 1171.0 L3568.0 1181.0 L3608.0 1191.0 L3678.0 1206.0 L3708.0 1186.0 L3746.0 1176.0"/>
<path d="M3443.0 1061.0 L3408.0 1086.0 L3388.0 1126.0 L3383.0 1166.0 L3388.0 1206.0 L3358.0 1226.0 L3338.0 1256.0 L3308.0 1281.0 L3278.0 1301.0"/>
<path d="M1712.5 1179.0 L1765.0 1224.0 L1815.0 1204.0 L1847.5 1176.5"/>
<path d="M2000.0 1319.0 L1995.0 1369.0 L2000.0 1409.0 L2030.0 1449.0 L2040.0 1484.0 L2020.0 1519.0 L2010.0 1564.0 L2020.0 1604.0 L2040.0 1614.0 L2055.0 1639.0 L2070.0 1674.0 L2105.0 1634.0 L2130.0 1629.0 L2150.0 1649.0 L2175.0 1699.0 L2230.0 1674.0 L2260.0 1639.0 L2295.0 1669.0 L2330.0 1684.0 L2370.0 1689.0 L2420.0 1679.0 L2458.0 1684.0"/>
<path d="M2968.0 1169.0 L2973.0 1199.0 L2958.0 1224.0 L2973.0 1249.0 L2983.0 1319.0 L2968.0 1369.0 L2998.0 1404.0 L3033.0 1434.0 L3058.0 1431.5 L3070.5 1456.5 L3063.0 1479.0 L3008.0 1509.0 L2938.0 1564.0 L2863.0 1624.0 L2858.0 1644.0 L2818.0 1669.0 L2783.0 1694.0"/>
<path d="M3063.0 1479.0 L3108.0 1464.0 L3138.0 1449.0 L3178.0 1429.0 L3183.0 1436.5 L3208.0 1431.5 L3238.0 1409.0 L3253.0 1359.0 L3278.0 1314.0 L3318.0 1279.0 L3358.0 1244.0 L3363.0 1214.0 L3388.0 1199.0"/>
<path d="M2458.0 1669.0 L2488.0 1649.0 L2490.5 1619.0 L2523.0 1616.5 L2523.0 1604.0 L2593.0 1596.5 L2623.0 1601.5 L2638.0 1634.0 L2643.0 1669.0 L2643.0 1724.0 L2708.0 1726.5 L2738.0 1721.5"/>
<path d="M3746.0 1199.0 L3678.0 1209.0 L3608.0 1189.0 L3558.0 1174.0"/>
<path d="M3500.0 623.0 L3535.0 594.0 L3559.0 570.0 L3588.0 518.0 L3594.0 500.0 L3570.0 476.0 L3600.0 435.0 L3603.0 412.0 L3588.0 400.0"/>
<path d="M3500.0 682.0 L3529.0 700.0 L3553.0 735.0 L3588.0 753.0 L3609.0 759.0 L3618.0 729.0 L3641.0 720.0 L3670.0 717.0 L3694.0 735.0 L3717.0 723.0 L3735.0 738.0 L3753.0 723.0 L3782.0 720.0 L3818.0 723.0"/>
</g>
<g fill="none" stroke="#39679a" stroke-width="4.6" stroke-linecap="round" stroke-linejoin="round">
<path d="M1150.0 418.5 C1153.3 419.6 1158.3 421.2 1170.0 425.0 C1181.7 428.8 1203.3 433.3 1220.0 441.0 C1236.7 448.7 1254.6 460.2 1270.0 471.0 C1285.4 481.8 1297.5 492.7 1312.5 506.0 C1327.5 519.3 1343.8 536.0 1360.0 551.0 C1376.2 566.0 1394.2 582.7 1410.0 596.0 C1425.8 609.3 1439.2 620.2 1455.0 631.0 C1470.8 641.8 1485.8 653.5 1505.0 661.0 C1524.2 668.5 1550.8 671.8 1570.0 676.0 C1589.2 680.2 1603.3 682.7 1620.0 686.0 C1636.7 689.3 1656.7 692.7 1670.0 696.0 C1683.3 699.3 1695.0 704.3 1700.0 706.0"/>
<path d="M1312.5 506.0 C1317.9 501.8 1332.9 491.8 1345.0 481.0 C1357.1 470.2 1372.5 452.7 1385.0 441.0 C1397.5 429.3 1405.8 416.8 1420.0 411.0 C1434.2 405.2 1453.3 406.0 1470.0 406.0 C1486.7 406.0 1508.3 415.2 1520.0 411.0 C1531.7 406.8 1531.7 388.9 1540.0 381.0 C1548.3 373.1 1556.7 368.5 1570.0 363.5 C1583.3 358.5 1606.7 356.4 1620.0 351.0 C1633.3 345.6 1640.8 341.8 1650.0 331.0 C1659.2 320.2 1670.8 293.5 1675.0 286.0"/>
<path d="M1820.0 126.0 C1828.3 133.5 1855.0 154.3 1870.0 171.0 C1885.0 187.7 1899.2 209.8 1910.0 226.0 C1920.8 242.2 1926.7 261.8 1935.0 268.5 C1943.3 275.2 1950.0 261.4 1960.0 266.0 C1970.0 270.6 1986.7 285.2 1995.0 296.0 C2003.3 306.8 2006.7 321.0 2010.0 331.0 C2013.3 341.0 2010.0 348.5 2015.0 356.0 C2020.0 363.5 2026.7 370.2 2040.0 376.0 C2053.3 381.8 2080.0 386.0 2095.0 391.0 C2110.0 396.0 2124.2 403.5 2130.0 406.0"/>
<path d="M2015.0 356.0 C2010.8 360.2 2000.8 374.3 1990.0 381.0 C1979.2 387.7 1963.3 393.5 1950.0 396.0 C1936.7 398.5 1920.0 394.3 1910.0 396.0 C1900.0 397.7 1890.0 400.2 1890.0 406.0 C1890.0 411.8 1905.0 425.2 1910.0 431.0 C1915.0 436.8 1921.7 433.5 1920.0 441.0 C1918.3 448.5 1910.0 465.2 1900.0 476.0 C1890.0 486.8 1870.0 497.7 1860.0 506.0 C1850.0 514.3 1844.2 519.3 1840.0 526.0 C1835.8 532.7 1835.8 542.7 1835.0 546.0"/>
<path d="M2142.5 411.0 C2142.9 419.3 2144.6 439.3 2145.0 461.0 C2145.4 482.7 2145.4 519.3 2145.0 541.0 C2144.6 562.7 2141.7 579.3 2142.5 591.0 C2143.3 602.7 2145.4 602.7 2150.0 611.0 C2154.6 619.3 2164.2 631.0 2170.0 641.0 C2175.8 651.0 2180.0 660.2 2185.0 671.0 C2190.0 681.8 2197.5 700.2 2200.0 706.0"/>
<path d="M2130.0 106.0 C2128.3 111.8 2124.2 130.2 2120.0 141.0 C2115.8 151.8 2106.7 161.0 2105.0 171.0 C2103.3 181.0 2104.2 189.3 2110.0 201.0 C2115.8 212.7 2130.0 231.0 2140.0 241.0 C2150.0 251.0 2158.3 254.3 2170.0 261.0 C2181.7 267.7 2199.2 276.0 2210.0 281.0 C2220.8 286.0 2230.8 289.3 2235.0 291.0"/>
<path d="M2320.0 293.5 C2320.8 302.2 2323.3 326.4 2325.0 346.0 C2326.7 365.6 2327.5 383.5 2330.0 411.0 C2332.5 438.5 2335.8 477.7 2340.0 511.0 C2344.2 544.3 2350.0 578.5 2355.0 611.0 C2360.0 643.5 2367.5 690.2 2370.0 706.0"/>
<path d="M2458.0 251.0 C2463.0 254.3 2478.0 263.1 2488.0 271.0 C2498.0 278.9 2506.3 292.7 2518.0 298.5 C2529.7 304.3 2544.2 303.5 2558.0 306.0 C2571.8 308.5 2585.5 315.2 2600.5 313.5 C2615.5 311.8 2631.8 303.1 2648.0 296.0 C2664.2 288.9 2683.0 280.2 2698.0 271.0 C2713.0 261.8 2726.3 251.8 2738.0 241.0 C2749.7 230.2 2756.3 215.2 2768.0 206.0 C2779.7 196.8 2794.7 192.7 2808.0 186.0 C2821.3 179.3 2837.2 173.5 2848.0 166.0 C2858.8 158.5 2864.7 151.0 2873.0 141.0 C2881.3 131.0 2893.8 111.8 2898.0 106.0"/>
<path d="M2532.0 301.0 L2533.0 386.0"/>
<path d="M2458.0 396.0 C2463.0 395.2 2475.5 392.7 2488.0 391.0 C2500.5 389.3 2519.7 388.5 2533.0 386.0 C2546.3 383.5 2562.2 377.7 2568.0 376.0"/>
<path d="M2658.0 706.0 C2667.2 703.9 2698.0 702.7 2713.0 693.5 C2728.0 684.3 2732.2 661.4 2748.0 651.0 C2763.8 640.6 2790.5 639.3 2808.0 631.0 C2825.5 622.7 2840.5 610.2 2853.0 601.0 C2865.5 591.8 2877.2 584.3 2883.0 576.0 C2888.8 567.7 2878.8 556.8 2888.0 551.0 C2897.2 545.2 2922.2 544.8 2938.0 541.0 C2953.8 537.2 2966.3 531.0 2983.0 528.5 C2999.7 526.0 3023.8 530.6 3038.0 526.0 C3052.2 521.4 3058.8 510.2 3068.0 501.0 C3077.2 491.8 3082.2 477.7 3093.0 471.0 C3103.8 464.3 3119.7 466.0 3133.0 461.0 C3146.3 456.0 3160.5 448.5 3173.0 441.0 C3185.5 433.5 3196.3 422.7 3208.0 416.0 C3219.7 409.3 3233.0 408.5 3243.0 401.0 C3253.0 393.5 3260.5 382.7 3268.0 371.0 C3275.5 359.3 3285.5 343.5 3288.0 331.0 C3290.5 318.5 3279.7 308.5 3283.0 296.0 C3286.3 283.5 3297.2 261.8 3308.0 256.0 C3318.8 250.2 3337.2 266.0 3348.0 261.0 C3358.8 256.0 3366.3 238.5 3373.0 226.0 C3379.7 213.5 3386.3 196.8 3388.0 186.0 C3389.7 175.2 3379.7 170.2 3383.0 161.0 C3386.3 151.8 3401.3 140.2 3408.0 131.0 C3414.7 121.8 3420.5 110.2 3423.0 106.0"/>
<path d="M1707.5 993.5 C1722.1 993.8 1767.9 994.6 1795.0 995.0 C1822.1 995.4 1840.8 995.0 1870.0 996.0 C1899.2 997.0 1940.0 999.5 1970.0 1001.0 C2000.0 1002.5 2030.8 1004.2 2050.0 1005.0 C2069.2 1005.8 2079.2 1005.8 2085.0 1006.0"/>
<path d="M2458.0 976.0 C2466.3 975.2 2487.2 974.3 2508.0 971.0 C2528.8 967.7 2558.0 961.0 2583.0 956.0 C2608.0 951.0 2632.2 946.0 2658.0 941.0 C2683.8 936.0 2714.7 928.5 2738.0 926.0 C2761.3 923.5 2788.0 926.0 2798.0 926.0"/>
<path d="M2458.0 806.0 C2466.3 803.5 2487.2 798.5 2508.0 791.0 C2528.8 783.5 2558.0 771.8 2583.0 761.0 C2608.0 750.2 2639.7 736.0 2658.0 726.0 C2676.3 716.0 2687.2 705.2 2693.0 701.0"/>
<path d="M2633.0 1096.0 C2620.5 1099.3 2582.2 1109.3 2558.0 1116.0 C2533.8 1122.7 2504.7 1131.0 2488.0 1136.0 C2471.3 1141.0 2463.0 1144.3 2458.0 1146.0"/>
<path d="M3753.0 846.0 C3747.2 856.0 3730.5 887.7 3718.0 906.0 C3705.5 924.3 3689.7 941.8 3678.0 956.0 C3666.3 970.2 3659.7 978.5 3648.0 991.0 C3636.3 1003.5 3621.3 1020.2 3608.0 1031.0 C3594.7 1041.8 3577.2 1045.2 3568.0 1056.0 C3558.8 1066.8 3553.0 1085.2 3553.0 1096.0 C3553.0 1106.8 3568.0 1111.0 3568.0 1121.0 C3568.0 1131.0 3560.5 1145.2 3553.0 1156.0 C3545.5 1166.8 3528.8 1176.0 3523.0 1186.0 C3517.2 1196.0 3516.3 1206.0 3518.0 1216.0 C3519.7 1226.0 3532.2 1236.0 3533.0 1246.0 C3533.8 1256.0 3527.2 1266.8 3523.0 1276.0 C3518.8 1285.2 3510.5 1296.8 3508.0 1301.0"/>
<path d="M2050.0 1169.0 C2045.0 1176.5 2031.7 1198.2 2020.0 1214.0 C2008.3 1229.8 1991.7 1247.3 1980.0 1264.0 C1968.3 1280.7 1954.2 1296.5 1950.0 1314.0 C1945.8 1331.5 1955.0 1353.2 1955.0 1369.0 C1955.0 1384.8 1955.8 1399.0 1950.0 1409.0 C1944.2 1419.0 1931.7 1424.8 1920.0 1429.0 C1908.3 1433.2 1891.7 1428.2 1880.0 1434.0 C1868.3 1439.8 1856.7 1449.8 1850.0 1464.0 C1843.3 1478.2 1842.5 1501.5 1840.0 1519.0 C1837.5 1536.5 1838.3 1552.3 1835.0 1569.0 C1831.7 1585.7 1824.2 1602.3 1820.0 1619.0 C1815.8 1635.7 1818.3 1654.8 1810.0 1669.0 C1801.7 1683.2 1786.7 1693.2 1770.0 1704.0 C1753.3 1714.8 1730.8 1723.2 1710.0 1734.0 C1689.2 1744.8 1655.8 1763.2 1645.0 1769.0"/>
<path d="M2150.0 1299.0 C2145.0 1309.0 2129.2 1340.7 2120.0 1359.0 C2110.8 1377.3 2102.5 1390.7 2095.0 1409.0 C2087.5 1427.3 2082.5 1455.7 2075.0 1469.0 C2067.5 1482.3 2059.2 1480.7 2050.0 1489.0 C2040.8 1497.3 2026.7 1506.5 2020.0 1519.0 C2013.3 1531.5 2010.0 1549.8 2010.0 1564.0 C2010.0 1578.2 2018.3 1597.3 2020.0 1604.0"/>
<path d="M2020.0 1614.0 C2028.3 1614.0 2052.1 1616.5 2070.0 1614.0 C2087.9 1611.5 2106.7 1600.7 2127.5 1599.0 C2148.3 1597.3 2171.2 1599.8 2195.0 1604.0 C2218.8 1608.2 2257.5 1620.7 2270.0 1624.0"/>
<path d="M1165.0 1554.0 C1174.2 1560.7 1202.5 1580.7 1220.0 1594.0 C1237.5 1607.3 1253.3 1619.8 1270.0 1634.0 C1286.7 1648.2 1305.0 1664.8 1320.0 1679.0 C1335.0 1693.2 1347.5 1704.0 1360.0 1719.0 C1372.5 1734.0 1389.2 1760.7 1395.0 1769.0"/>
<path d="M2618.0 1169.0 C2620.5 1174.8 2623.0 1192.3 2633.0 1204.0 C2643.0 1215.7 2664.7 1226.5 2678.0 1239.0 C2691.3 1251.5 2708.0 1268.2 2713.0 1279.0 C2718.0 1289.8 2705.5 1284.8 2708.0 1304.0 C2710.5 1323.2 2723.8 1366.5 2728.0 1394.0 C2732.2 1421.5 2731.3 1446.5 2733.0 1469.0 C2734.7 1491.5 2733.8 1509.8 2738.0 1529.0 C2742.2 1548.2 2749.7 1565.7 2758.0 1584.0 C2766.3 1602.3 2778.0 1623.2 2788.0 1639.0 C2798.0 1654.8 2806.3 1665.7 2818.0 1679.0 C2829.7 1692.3 2845.5 1704.0 2858.0 1719.0 C2870.5 1734.0 2887.2 1760.7 2893.0 1769.0"/>
<path d="M2758.0 1353.0 C2762.2 1353.2 2772.2 1351.8 2783.0 1354.0 C2793.8 1356.2 2810.5 1361.9 2823.0 1366.5 C2835.5 1371.1 2849.7 1379.0 2858.0 1381.5 C2866.3 1384.0 2870.5 1381.5 2873.0 1381.5"/>
<path d="M3523.0 1189.0 C3524.7 1197.3 3535.5 1224.0 3533.0 1239.0 C3530.5 1254.0 3520.5 1267.3 3508.0 1279.0 C3495.5 1290.7 3468.4 1298.2 3458.0 1309.0 C3447.6 1319.8 3446.8 1325.7 3445.5 1344.0 C3444.2 1362.3 3448.4 1398.2 3450.5 1419.0 C3452.6 1439.8 3460.1 1456.5 3458.0 1469.0 C3455.9 1481.5 3445.5 1489.0 3438.0 1494.0 C3430.5 1499.0 3418.8 1493.2 3413.0 1499.0 C3407.2 1504.8 3412.2 1517.3 3403.0 1529.0 C3393.8 1540.7 3368.8 1558.2 3358.0 1569.0 C3347.2 1579.8 3338.8 1584.8 3338.0 1594.0 C3337.2 1603.2 3344.7 1615.7 3353.0 1624.0 C3361.3 1632.3 3372.2 1643.2 3388.0 1644.0 C3403.8 1644.8 3429.7 1629.8 3448.0 1629.0 C3466.3 1628.2 3484.7 1640.7 3498.0 1639.0 C3511.3 1637.3 3518.0 1625.7 3528.0 1619.0 C3538.0 1612.3 3544.7 1600.7 3558.0 1599.0 C3571.3 1597.3 3592.2 1606.5 3608.0 1609.0 C3623.8 1611.5 3640.5 1614.0 3653.0 1614.0 C3665.5 1614.0 3667.5 1608.2 3683.0 1609.0 C3698.5 1609.8 3721.8 1614.8 3746.0 1619.0 C3770.2 1623.2 3814.3 1631.5 3828.0 1634.0"/>
<path d="M3828.0 1449.0 C3814.3 1459.0 3766.0 1493.2 3746.0 1509.0 C3726.0 1524.8 3720.2 1532.3 3708.0 1544.0 C3695.8 1555.7 3682.2 1567.3 3673.0 1579.0 C3663.8 1590.7 3661.3 1601.5 3653.0 1614.0 C3644.7 1626.5 3630.5 1639.8 3623.0 1654.0 C3615.5 1668.2 3614.7 1684.8 3608.0 1699.0 C3601.3 1713.2 3589.7 1727.3 3583.0 1739.0 C3576.3 1750.7 3570.5 1764.0 3568.0 1769.0"/>
<path d="M3338.0 1591.5 L3308.0 1593.0"/>
<path d="M1725.0 706.0 C1732.5 710.2 1756.7 718.5 1770.0 731.0 C1783.3 743.5 1800.8 764.3 1805.0 781.0 C1809.2 797.7 1793.3 812.7 1795.0 831.0 C1796.7 849.3 1807.5 873.5 1815.0 891.0 C1822.5 908.5 1830.8 919.3 1840.0 936.0 C1849.2 952.7 1865.0 981.8 1870.0 991.0"/>
<path d="M1740.0 1101.0 C1753.3 1099.8 1795.0 1096.0 1820.0 1093.5 C1845.0 1091.0 1868.3 1088.5 1890.0 1086.0 C1911.7 1083.5 1933.3 1082.2 1950.0 1078.5 C1966.7 1074.8 1973.3 1071.4 1990.0 1063.5 C2006.7 1055.6 2034.2 1039.8 2050.0 1031.0 C2065.8 1022.2 2079.2 1014.3 2085.0 1011.0"/>
<path d="M2092.0 906.8 C2091.1 908.4 2090.3 912.6 2086.9 916.8 C2083.6 921.0 2076.4 925.7 2071.8 932.0 C2067.2 938.3 2062.6 945.0 2059.2 954.7 C2055.8 964.3 2052.9 984.1 2051.6 989.9"/>
<path d="M2092.0 906.8 C2093.7 904.2 2097.9 895.8 2102.1 891.6 C2106.3 887.4 2109.6 884.1 2117.2 881.6 C2124.7 879.0 2137.3 879.9 2147.4 876.5 C2157.5 873.2 2168.4 866.4 2177.7 861.4 C2186.9 856.4 2194.5 848.8 2202.9 846.3 C2211.3 843.8 2222.2 843.8 2228.1 846.3 C2234.0 848.8 2234.0 858.0 2238.2 861.4 C2242.4 864.8 2246.6 862.2 2253.3 866.4 C2260.0 870.6 2270.9 879.0 2278.5 886.6 C2286.1 894.2 2292.4 903.8 2298.7 911.8 C2305.0 919.8 2311.3 929.5 2316.3 934.5 C2321.3 939.5 2322.6 942.5 2328.9 942.1 C2335.2 941.6 2341.5 934.5 2354.1 932.0 C2366.7 929.5 2387.7 929.5 2404.5 926.9 C2421.3 924.4 2440.0 921.9 2454.9 916.8 C2469.8 911.8 2487.5 900.0 2494.0 896.7"/>
<path d="M2233.1 690.0 C2234.0 696.3 2237.1 715.2 2238.2 727.8 C2239.2 740.4 2239.8 753.0 2239.4 765.6 C2239.0 778.2 2236.7 790.8 2235.6 803.4 C2234.6 816.0 2232.7 831.6 2233.1 841.2 C2233.5 850.9 2237.3 858.0 2238.2 861.4"/>
<path d="M2276.0 765.6 C2277.2 769.8 2280.6 782.4 2283.5 790.8 C2286.5 799.2 2293.6 807.6 2293.6 816.0 C2293.6 824.4 2290.3 832.8 2283.5 841.2 C2276.8 849.6 2258.3 862.2 2253.3 866.4"/>
<path d="M2276.0 765.6 C2280.6 766.5 2296.6 768.1 2303.7 770.7 C2310.8 773.2 2315.5 776.5 2318.8 780.7 C2322.2 784.9 2319.7 791.2 2323.9 795.9 C2328.1 800.5 2336.5 804.3 2344.0 808.5 C2351.6 812.7 2361.7 817.7 2369.2 821.1 C2376.8 824.4 2383.5 829.5 2389.4 828.6 C2395.3 827.8 2399.5 816.9 2404.5 816.0 C2409.6 815.2 2412.1 823.6 2419.6 823.6 C2427.2 823.6 2437.5 819.8 2449.9 816.0 C2462.3 812.2 2486.6 803.4 2494.0 800.9"/>
<path d="M2253.3 866.4 C2250.8 870.6 2243.2 883.2 2238.2 891.6 C2233.1 900.0 2226.8 908.4 2223.0 916.8 C2219.3 925.3 2217.2 933.7 2215.5 942.1 C2213.8 950.5 2213.4 959.3 2213.0 967.3 C2212.5 975.2 2213.0 986.2 2213.0 989.9"/>
<path d="M2379.3 690.0 C2381.0 694.2 2386.0 706.8 2389.4 715.2 C2392.8 723.6 2397.4 729.9 2399.5 740.4 C2401.6 750.9 2402.0 766.5 2402.0 778.2 C2402.0 790.0 2401.6 802.6 2399.5 811.0 C2397.4 819.4 2386.5 821.1 2389.4 828.6 C2392.3 836.2 2410.0 848.4 2417.1 856.4 C2424.3 864.3 2428.9 869.8 2432.2 876.5 C2435.6 883.2 2433.5 890.0 2437.3 896.7 C2441.1 903.4 2447.8 911.0 2454.9 916.8 C2462.1 922.7 2473.6 927.8 2480.1 932.0 C2486.6 936.2 2491.7 940.4 2494.0 942.1"/>
<path d="M2092.0 906.8 C2093.7 910.5 2096.2 924.4 2102.1 929.5 C2107.9 934.5 2121.0 936.6 2127.3 937.0 C2133.6 937.4 2133.6 935.3 2139.9 932.0 C2146.2 928.6 2157.5 921.0 2165.1 916.8 C2172.6 912.6 2178.9 911.0 2185.2 906.8 C2191.5 902.6 2195.7 897.5 2202.9 891.6 C2210.0 885.8 2222.2 876.5 2228.1 871.5 C2234.0 866.4 2236.5 863.1 2238.2 861.4"/>
<path d="M2139.9 932.0 C2136.9 933.7 2126.0 936.2 2122.2 942.1 C2118.4 947.9 2118.4 959.3 2117.2 967.3 C2115.9 975.2 2115.1 986.2 2114.7 989.9"/>
<path d="M2328.9 942.1 C2324.7 942.9 2309.6 942.9 2303.7 947.1 C2297.8 951.3 2296.1 960.1 2293.6 967.3 C2291.1 974.4 2289.4 986.2 2288.6 989.9"/>
<path d="M1850.0 942.1 C1851.7 946.3 1856.3 959.3 1860.1 967.3 C1863.9 975.2 1870.6 986.2 1872.7 989.9"/>
<path d="M2494.0 705.1 C2489.2 703.4 2471.5 697.6 2465.0 695.0 C2458.5 692.5 2456.6 690.8 2454.9 690.0"/>
<path d="M2399.5 740.4 C2402.8 736.2 2413.3 723.6 2419.6 715.2 C2425.9 706.8 2434.3 694.2 2437.3 690.0"/>
<path d="M1850.0 996.5 C1858.4 996.8 1879.4 997.2 1900.4 997.8 C1921.4 998.4 1951.7 999.1 1976.0 1000.3 C2000.4 1001.6 2029.0 1004.3 2046.6 1005.4 C2064.2 1006.4 2076.0 1006.4 2081.9 1006.6"/>
<path d="M2056.7 960.0 C2055.4 964.2 2050.8 977.6 2049.1 985.2 C2047.4 992.8 2046.6 998.6 2046.6 1005.4 C2046.6 1012.1 2047.0 1018.4 2049.1 1025.5 C2051.2 1032.7 2055.8 1040.2 2059.2 1048.2 C2062.6 1056.2 2065.9 1065.4 2069.3 1073.4 C2072.6 1081.4 2077.3 1090.2 2079.4 1096.1 C2081.5 1102.0 2081.5 1106.6 2081.9 1108.7"/>
<path d="M1981.1 1259.9 C1986.1 1252.8 2001.2 1231.4 2011.3 1217.1 C2021.4 1202.8 2032.3 1187.7 2041.6 1174.2 C2050.8 1160.8 2060.0 1147.4 2066.8 1136.4 C2073.5 1125.5 2076.0 1118.4 2081.9 1108.7 C2087.8 1099.0 2095.8 1087.3 2102.1 1078.5 C2108.4 1069.6 2116.8 1059.6 2119.7 1055.8"/>
<path d="M1850.0 1086.0 C1858.4 1085.6 1886.1 1085.2 1900.4 1083.5 C1914.7 1081.8 1923.9 1078.9 1935.7 1075.9 C1947.5 1073.0 1960.1 1070.5 1971.0 1065.9 C1981.9 1061.2 1992.0 1053.7 2001.2 1048.2 C2010.5 1042.8 2018.9 1037.3 2026.4 1033.1 C2034.0 1028.9 2043.2 1024.7 2046.6 1023.0"/>
<path d="M2112.1 960.0 C2111.7 964.2 2109.6 976.8 2109.6 985.2 C2109.6 993.6 2110.9 1002.0 2112.1 1010.4 C2113.4 1018.8 2115.9 1028.1 2117.2 1035.6 C2118.4 1043.2 2116.8 1050.3 2119.7 1055.8 C2122.6 1061.2 2128.1 1062.9 2134.8 1068.4 C2141.5 1073.8 2151.6 1082.2 2160.0 1088.5 C2168.4 1094.8 2178.9 1102.4 2185.2 1106.2 C2191.5 1110.0 2192.8 1111.2 2197.8 1111.2 C2202.9 1111.2 2210.4 1107.9 2215.5 1106.2 C2220.5 1104.5 2226.0 1102.0 2228.1 1101.2"/>
<path d="M2119.7 1055.8 C2123.1 1054.1 2132.3 1047.8 2139.9 1045.7 C2147.4 1043.6 2158.3 1041.5 2165.1 1043.2 C2171.8 1044.9 2174.7 1054.5 2180.2 1055.8 C2185.7 1057.0 2192.4 1052.4 2197.8 1050.7 C2203.3 1049.1 2202.5 1048.2 2213.0 1045.7 C2223.5 1043.2 2249.9 1035.6 2260.8 1035.6 C2271.8 1035.6 2271.4 1044.4 2278.5 1045.7 C2285.6 1047.0 2297.4 1043.6 2303.7 1043.2 C2310.0 1042.8 2314.2 1043.2 2316.3 1043.2"/>
<path d="M2170.1 960.0 C2170.1 964.2 2169.7 976.8 2170.1 985.2 C2170.5 993.6 2171.8 1002.0 2172.6 1010.4 C2173.5 1018.8 2173.9 1028.1 2175.1 1035.6 C2176.4 1043.2 2179.4 1052.4 2180.2 1055.8"/>
<path d="M2213.0 960.0 C2213.0 965.5 2213.0 982.3 2213.0 992.8 C2213.0 1003.3 2212.5 1011.7 2213.0 1023.0 C2213.4 1034.4 2213.0 1047.8 2215.5 1060.8 C2218.0 1073.8 2224.3 1089.4 2228.1 1101.2 C2231.9 1112.9 2234.4 1121.3 2238.2 1131.4 C2241.9 1141.5 2244.9 1150.3 2250.8 1161.6 C2256.6 1173.0 2266.3 1187.7 2273.5 1199.5 C2280.6 1211.2 2288.6 1222.1 2293.6 1232.2 C2298.7 1242.3 2302.0 1255.3 2303.7 1259.9"/>
<path d="M2278.5 985.2 C2281.0 985.2 2291.1 983.1 2293.6 985.2 C2296.1 987.3 2296.1 995.7 2293.6 997.8 C2291.1 999.9 2281.0 999.9 2278.5 997.8 C2276.0 995.7 2278.5 987.3 2278.5 985.2"/>
<path d="M2293.6 997.8 C2295.3 1002.0 2300.3 1015.5 2303.7 1023.0 C2307.1 1030.6 2309.6 1042.8 2313.8 1043.2 C2318.0 1043.6 2324.3 1032.3 2328.9 1025.5 C2333.5 1018.8 2339.0 1009.6 2341.5 1002.8 C2344.0 996.1 2344.0 992.3 2344.0 985.2 C2344.0 978.1 2341.9 964.2 2341.5 960.0"/>
<path d="M2344.0 997.8 C2349.9 997.0 2365.0 995.7 2379.3 992.8 C2393.6 989.8 2415.0 982.9 2429.7 980.2 C2444.4 977.4 2456.8 976.8 2467.5 976.4 C2478.2 976.0 2489.6 977.4 2494.0 977.6"/>
<path d="M1857.6 960.0 C1859.2 963.4 1865.5 973.9 1867.6 980.2 C1869.7 986.5 1869.7 994.9 1870.2 997.8"/>
<path d="M2140.0 1301.0 C2141.7 1293.5 2145.8 1271.8 2150.0 1256.0 C2154.2 1240.2 2158.3 1222.7 2165.0 1206.0 C2171.7 1189.3 2182.5 1169.3 2190.0 1156.0 C2197.5 1142.7 2206.7 1131.0 2210.0 1126.0"/>
<path d="M2458.0 916.0 C2461.3 914.3 2469.7 908.5 2478.0 906.0 C2486.3 903.5 2498.0 902.7 2508.0 901.0 C2518.0 899.3 2533.0 896.8 2538.0 896.0"/>
<path d="M2458.0 941.0 C2466.3 948.5 2491.3 965.2 2508.0 986.0 C2524.7 1006.8 2541.3 1046.0 2558.0 1066.0 C2574.7 1086.0 2595.5 1101.0 2608.0 1106.0 C2620.5 1111.0 2628.8 1097.7 2633.0 1096.0"/>
<path d="M2458.0 1206.0 C2470.5 1206.0 2508.0 1206.8 2533.0 1206.0 C2558.0 1205.2 2585.5 1201.0 2608.0 1201.0 C2630.5 1201.0 2658.0 1205.2 2668.0 1206.0"/>
<path d="M2270.0 1624.0 C2278.3 1622.3 2301.7 1617.3 2320.0 1614.0 C2338.3 1610.7 2365.0 1609.0 2380.0 1604.0 C2395.0 1599.0 2405.0 1587.3 2410.0 1584.0"/>
<path d="M2235.0 1304.0 C2240.8 1303.2 2259.2 1304.8 2270.0 1299.0 C2280.8 1293.2 2293.3 1280.7 2300.0 1269.0 C2306.7 1257.3 2311.7 1240.7 2310.0 1229.0 C2308.3 1217.3 2296.7 1209.0 2290.0 1199.0 C2283.3 1189.0 2273.3 1174.0 2270.0 1169.0"/>
<path d="M2150.0 1299.0 C2158.3 1298.2 2185.8 1293.2 2200.0 1294.0 C2214.2 1294.8 2229.2 1302.3 2235.0 1304.0"/>
<path d="M2020.0 1604.0 C2015.0 1606.5 1998.3 1608.2 1990.0 1619.0 C1981.7 1629.8 1976.7 1652.3 1970.0 1669.0 C1963.3 1685.7 1956.7 1703.2 1950.0 1719.0 C1943.3 1734.8 1933.3 1756.5 1930.0 1764.0"/>
<path d="M2458.0 1189.0 C2466.3 1190.7 2487.2 1196.9 2508.0 1199.0 C2528.8 1201.1 2562.2 1200.7 2583.0 1201.5 C2603.8 1202.3 2624.7 1203.6 2633.0 1204.0"/>
<path d="M2633.0 1204.0 C2638.0 1203.2 2656.3 1199.8 2663.0 1199.0 C2669.7 1198.2 2671.3 1199.0 2673.0 1199.0"/>
<path d="M2324.1 129.7 C2326.7 133.8 2332.4 145.7 2339.7 154.5 C2346.9 163.3 2357.8 176.6 2367.7 182.5 C2377.5 188.5 2388.4 189.8 2398.8 190.3 C2409.1 190.8 2420.8 187.2 2429.9 185.6 C2438.9 184.1 2451.6 177.9 2453.2 181.0 C2454.7 184.1 2442.0 197.3 2439.2 204.3 C2436.3 211.3 2434.5 216.7 2436.1 222.9 C2437.6 229.2 2444.4 236.4 2448.5 241.6 C2452.7 246.8 2458.9 252.0 2460.9 254.0"/>
<path d="M2373.9 185.6 C2370.8 192.9 2361.4 214.6 2355.2 229.2 C2349.0 243.7 2340.5 263.4 2336.6 272.7 C2332.7 282.0 2332.7 283.1 2331.9 285.1"/>
<path d="M2331.9 411.1 C2345.6 409.8 2389.2 406.7 2414.3 403.3 C2439.4 399.9 2471.3 392.9 2482.7 390.9"/>
</g>
<g fill="none" stroke="#3a6798" stroke-width="7.5" stroke-linecap="round" stroke-linejoin="round">
<path d="M1642.5 106.0 C1643.8 113.5 1647.9 135.2 1650.0 151.0 C1652.1 166.8 1652.9 184.3 1655.0 201.0 C1657.1 217.7 1660.0 236.8 1662.5 251.0 C1665.0 265.2 1666.2 274.3 1670.0 286.0 C1673.8 297.7 1678.3 309.3 1685.0 321.0 C1691.7 332.7 1700.0 344.3 1710.0 356.0 C1720.0 367.7 1732.5 378.5 1745.0 391.0 C1757.5 403.5 1770.8 416.8 1785.0 431.0 C1799.2 445.2 1815.8 461.0 1830.0 476.0 C1844.2 491.0 1857.5 506.0 1870.0 521.0 C1882.5 536.0 1894.2 551.0 1905.0 566.0 C1915.8 581.0 1925.0 595.2 1935.0 611.0 C1945.0 626.8 1955.8 645.2 1965.0 661.0 C1974.2 676.8 1980.8 689.3 1990.0 706.0 C1999.2 722.7 2011.4 746.9 2020.0 761.0 C2028.6 775.1 2034.6 779.1 2041.6 790.8 C2048.5 802.5 2057.1 819.4 2061.7 831.2 C2066.3 842.9 2065.9 851.3 2069.3 861.4 C2072.6 871.5 2078.1 884.1 2081.9 891.6 C2085.7 899.2 2090.3 904.2 2092.0 906.8"/>
<path d="M2718.0 104.0 C2708.0 111.0 2676.3 133.2 2658.0 146.0 C2639.7 158.8 2624.7 170.2 2608.0 181.0 C2591.3 191.8 2574.7 202.7 2558.0 211.0 C2541.3 219.3 2524.7 225.2 2508.0 231.0 C2491.3 236.8 2474.3 239.3 2458.0 246.0 C2441.7 252.7 2424.7 264.3 2410.0 271.0 C2395.3 277.7 2385.0 282.2 2370.0 286.0 C2355.0 289.8 2336.7 291.8 2320.0 293.5 C2303.3 295.2 2285.0 293.1 2270.0 296.0 C2255.0 298.9 2242.5 301.8 2230.0 311.0 C2217.5 320.2 2209.2 337.7 2195.0 351.0 C2180.8 364.3 2160.8 379.3 2145.0 391.0 C2129.2 402.7 2115.8 410.2 2100.0 421.0 C2084.2 431.8 2066.7 443.5 2050.0 456.0 C2033.3 468.5 2015.8 481.8 2000.0 496.0 C1984.2 510.2 1970.8 526.8 1955.0 541.0 C1939.2 555.2 1921.7 569.3 1905.0 581.0 C1888.3 592.7 1872.5 601.0 1855.0 611.0 C1837.5 621.0 1815.8 631.0 1800.0 641.0 C1784.2 651.0 1771.7 660.2 1760.0 671.0 C1748.3 681.8 1735.8 691.8 1730.0 706.0 C1724.2 720.2 1726.2 731.0 1725.0 756.0 C1723.8 781.0 1722.9 822.7 1722.5 856.0 C1722.1 889.3 1722.9 929.3 1722.5 956.0 C1722.1 982.7 1722.1 999.3 1720.0 1016.0 C1717.9 1032.7 1712.9 1045.6 1710.0 1056.0 C1707.1 1066.4 1704.2 1070.2 1702.5 1078.5 C1700.8 1086.8 1699.2 1093.1 1700.0 1106.0 C1700.8 1118.9 1705.4 1142.7 1707.5 1156.0 C1709.6 1169.3 1712.9 1173.5 1712.5 1186.0 C1712.1 1198.5 1709.6 1221.3 1705.0 1231.0 C1700.4 1240.7 1696.7 1236.8 1685.0 1244.0 C1673.3 1251.2 1651.7 1261.5 1635.0 1274.0 C1618.3 1286.5 1600.8 1304.8 1585.0 1319.0 C1569.2 1333.2 1550.8 1344.8 1540.0 1359.0 C1529.2 1373.2 1523.3 1385.7 1520.0 1404.0 C1516.7 1422.3 1518.3 1449.8 1520.0 1469.0 C1521.7 1488.2 1528.3 1502.3 1530.0 1519.0 C1531.7 1535.7 1531.7 1552.3 1530.0 1569.0 C1528.3 1585.7 1524.2 1602.3 1520.0 1619.0 C1515.8 1635.7 1512.5 1653.2 1505.0 1669.0 C1497.5 1684.8 1484.2 1698.2 1475.0 1714.0 C1465.8 1729.8 1455.8 1752.3 1450.0 1764.0 C1444.2 1775.7 1441.7 1780.7 1440.0 1784.0"/>
<path d="M1160.0 1226.0 C1161.7 1224.3 1161.7 1222.7 1170.0 1216.0 C1178.3 1209.3 1196.7 1200.2 1210.0 1186.0 C1223.3 1171.8 1235.8 1146.8 1250.0 1131.0 C1264.2 1115.2 1276.7 1102.7 1295.0 1091.0 C1313.3 1079.3 1334.2 1068.1 1360.0 1061.0 C1385.8 1053.9 1418.3 1050.6 1450.0 1048.5 C1481.7 1046.4 1521.7 1047.2 1550.0 1048.5 C1578.3 1049.8 1599.2 1052.2 1620.0 1056.0 C1640.8 1059.8 1661.2 1067.2 1675.0 1071.0 C1688.8 1074.8 1691.7 1073.5 1702.5 1078.5 C1713.3 1083.5 1725.4 1092.2 1740.0 1101.0 C1754.6 1109.8 1771.7 1118.5 1790.0 1131.0 C1808.3 1143.5 1828.3 1160.5 1850.0 1176.0 C1871.7 1191.5 1898.3 1209.3 1920.0 1224.0 C1941.7 1238.7 1960.0 1250.7 1980.0 1264.0 C2000.0 1277.3 2020.8 1291.5 2040.0 1304.0 C2059.2 1316.5 2076.7 1329.8 2095.0 1339.0 C2113.3 1348.2 2132.5 1354.8 2150.0 1359.0 C2167.5 1363.2 2185.8 1365.7 2200.0 1364.0 C2214.2 1362.3 2223.3 1356.5 2235.0 1349.0 C2246.7 1341.5 2257.5 1332.3 2270.0 1319.0 C2282.5 1305.7 2296.7 1285.7 2310.0 1269.0 C2323.3 1252.3 2336.7 1233.2 2350.0 1219.0 C2363.3 1204.8 2378.3 1192.3 2390.0 1184.0 C2401.7 1175.7 2403.7 1177.0 2420.0 1169.0 C2436.3 1161.0 2465.0 1144.8 2488.0 1136.0 C2511.0 1127.2 2533.8 1122.7 2558.0 1116.0 C2582.2 1109.3 2620.5 1099.3 2633.0 1096.0"/>
<path d="M2322.5 106.0 C2324.6 111.8 2328.8 129.3 2335.0 141.0 C2341.2 152.7 2350.8 164.3 2360.0 176.0 C2369.2 187.7 2381.7 195.2 2390.0 211.0 C2398.3 226.8 2405.0 250.2 2410.0 271.0 C2415.0 291.8 2417.5 312.7 2420.0 336.0 C2422.5 359.3 2423.4 392.0 2425.0 411.0 C2426.6 430.0 2429.4 435.1 2429.3 450.0 C2429.2 464.9 2424.7 479.4 2424.3 500.4 C2423.8 521.4 2425.1 552.5 2426.8 576.0 C2428.5 599.6 2430.6 624.8 2434.3 641.6 C2438.1 658.4 2441.9 664.2 2449.5 676.8 C2457.0 689.4 2471.3 702.9 2479.7 717.2 C2488.1 731.5 2494.8 746.6 2499.9 762.5 C2504.9 778.5 2505.8 796.2 2510.0 813.0 C2514.2 829.8 2520.0 848.2 2525.1 863.4 C2530.1 878.5 2536.0 888.6 2540.2 903.7 C2544.4 918.8 2545.3 937.3 2550.3 954.1 C2555.3 970.9 2563.8 988.5 2570.5 1004.5 C2577.2 1020.5 2581.7 1038.1 2590.5 1050.0 C2599.3 1061.9 2614.2 1067.5 2623.0 1076.0 C2631.8 1084.5 2628.8 1096.0 2643.0 1101.0 C2657.2 1106.0 2684.7 1101.8 2708.0 1106.0 C2731.3 1110.2 2761.3 1117.7 2783.0 1126.0 C2804.7 1134.3 2817.2 1142.7 2838.0 1156.0 C2858.8 1169.3 2883.8 1191.3 2908.0 1206.0 C2932.2 1220.7 2958.0 1231.8 2983.0 1244.0 C3008.0 1256.2 3037.2 1269.0 3058.0 1279.0 C3078.8 1289.0 3093.0 1294.0 3108.0 1304.0 C3123.0 1314.0 3135.5 1326.5 3148.0 1339.0 C3160.5 1351.5 3173.0 1365.7 3183.0 1379.0 C3193.0 1392.3 3200.5 1406.5 3208.0 1419.0 C3215.5 1431.5 3218.0 1441.5 3228.0 1454.0 C3238.0 1466.5 3256.3 1480.7 3268.0 1494.0 C3279.7 1507.3 3291.3 1521.5 3298.0 1534.0 C3304.7 1546.5 3308.8 1556.5 3308.0 1569.0 C3307.2 1581.5 3301.3 1594.8 3293.0 1609.0 C3284.7 1623.2 3265.5 1639.8 3258.0 1654.0 C3250.5 1668.2 3249.7 1674.8 3248.0 1694.0 C3246.3 1713.2 3248.0 1756.5 3248.0 1769.0"/>
<path d="M2538.0 896.0 C2549.7 897.7 2583.8 902.7 2608.0 906.0 C2632.2 909.3 2658.0 915.2 2683.0 916.0 C2708.0 916.8 2738.8 909.3 2758.0 911.0 C2777.2 912.7 2783.0 921.4 2798.0 926.0 C2813.0 930.6 2829.7 940.2 2848.0 938.5 C2866.3 936.8 2889.7 921.4 2908.0 916.0 C2926.3 910.6 2941.3 908.1 2958.0 906.0 C2974.7 903.9 2991.3 906.8 3008.0 903.5 C3024.7 900.2 3041.3 891.4 3058.0 886.0 C3074.7 880.6 3092.3 874.7 3108.0 871.0 C3123.7 867.3 3137.0 864.8 3152.0 864.0 C3167.0 863.2 3183.7 861.5 3198.0 866.0 C3212.3 870.5 3223.8 882.7 3238.0 891.0 C3252.2 899.3 3269.7 909.3 3283.0 916.0 C3296.3 922.7 3305.5 924.3 3318.0 931.0 C3330.5 937.7 3344.7 951.0 3358.0 956.0 C3371.3 961.0 3383.0 963.5 3398.0 961.0 C3413.0 958.5 3431.3 948.5 3448.0 941.0 C3464.7 933.5 3481.3 921.8 3498.0 916.0 C3514.7 910.2 3531.3 905.2 3548.0 906.0 C3564.7 906.8 3581.3 915.6 3598.0 921.0 C3614.7 926.4 3631.3 934.6 3648.0 938.5 C3664.7 942.4 3683.0 947.4 3698.0 944.5 C3713.0 941.6 3722.7 939.4 3738.0 921.0 C3753.3 902.6 3775.0 857.3 3790.0 834.0 C3805.0 810.7 3821.7 789.8 3828.0 781.0"/>
<path d="M2633.0 1096.0 C2635.5 1102.7 2643.8 1121.8 2648.0 1136.0 C2652.2 1150.2 2653.8 1170.5 2658.0 1181.0 C2662.2 1191.5 2663.0 1188.5 2673.0 1199.0 C2683.0 1209.5 2703.8 1228.2 2718.0 1244.0 C2732.2 1259.8 2748.0 1276.5 2758.0 1294.0 C2768.0 1311.5 2773.8 1328.2 2778.0 1349.0 C2782.2 1369.8 2781.3 1390.7 2783.0 1419.0 C2784.7 1447.3 2786.3 1489.8 2788.0 1519.0 C2789.7 1548.2 2792.6 1573.2 2793.0 1594.0 C2793.4 1614.8 2792.2 1627.3 2790.5 1644.0 C2788.8 1660.7 2784.2 1673.2 2783.0 1694.0 C2781.8 1714.8 2783.0 1756.5 2783.0 1769.0"/>
<path d="M2237.5 1314.0 C2237.5 1323.2 2237.1 1343.2 2237.5 1369.0 C2237.9 1394.8 2239.6 1435.7 2240.0 1469.0 C2240.4 1502.3 2241.7 1535.7 2240.0 1569.0 C2238.3 1602.3 2233.3 1635.7 2230.0 1669.0 C2226.7 1702.3 2221.7 1752.3 2220.0 1769.0"/>
<path d="M2020.0 1609.0 C2023.3 1615.7 2033.3 1634.0 2040.0 1649.0 C2046.7 1664.0 2052.5 1679.0 2060.0 1699.0 C2067.5 1719.0 2080.8 1757.3 2085.0 1769.0"/>
<path d="M2316.3 1043.2 C2320.5 1046.1 2331.0 1054.9 2341.5 1060.8 C2352.0 1066.7 2366.7 1074.3 2379.3 1078.5 C2391.9 1082.7 2406.6 1083.1 2417.1 1086.0 C2427.6 1089.0 2433.9 1091.9 2442.3 1096.1 C2450.7 1100.3 2460.4 1105.4 2467.5 1111.2 C2474.7 1117.1 2480.8 1124.7 2485.2 1131.4 C2489.6 1138.1 2489.8 1142.3 2494.0 1151.6 C2498.2 1160.8 2507.7 1181.0 2510.4 1186.8"/>
<path d="M2530.5 1126.4 C2524.5 1128.0 2506.6 1132.7 2494.0 1136.4 C2481.4 1140.2 2467.7 1144.8 2454.9 1149.0 C2442.1 1153.2 2427.6 1156.6 2417.1 1161.6 C2406.6 1166.7 2400.3 1171.7 2391.9 1179.3 C2383.5 1186.8 2375.1 1197.4 2366.7 1207.0 C2358.3 1216.7 2348.6 1228.4 2341.5 1237.3 C2334.4 1246.1 2326.8 1256.2 2323.9 1259.9"/>
</g>
<g fill="#fff" stroke="#121b2e" stroke-width="1.2">
<circle cx="2321.0" cy="343.5" r="5.4"/>
<circle cx="1519.0" cy="580.5" r="5.4"/>
<circle cx="3503.0" cy="195.5" r="5.4"/>
<circle cx="2880.0" cy="342.5" r="5.4"/>
<circle cx="2925.5" cy="615.5" r="5.4"/>
<circle cx="2199.0" cy="991.5" r="5.4"/>
<circle cx="1543.0" cy="1188.0" r="5.4"/>
<circle cx="3601.0" cy="1035.0" r="5.4"/>
<circle cx="3162.5" cy="1279.0" r="5.4"/>
<circle cx="1839.0" cy="1386.5" r="5.4"/>
<circle cx="1956.5" cy="1739.5" r="5.4"/>
<circle cx="3292.5" cy="1664.0" r="5.4"/>
<circle cx="3795.0" cy="1565.0" r="5.4"/>
<circle cx="511.0" cy="999.0" r="5.4"/>
</g>
<g font-family="Liberation Sans, sans-serif" text-anchor="middle" fill="#fff" stroke="#121b2e" stroke-linejoin="round" paint-order="stroke">
<text x="1784.0" y="125.4" font-size="23.4" font-weight="400" stroke-width="3.6">Worringen</text>
<text x="1584.0" y="184.4" font-size="23.4" font-weight="400" stroke-width="3.6">Hackhausen</text>
<text x="2017.5" y="226.4" font-size="23.4" font-weight="400" stroke-width="3.6">Langel</text>
<text x="1728.5" y="266.4" font-size="23.4" font-weight="400" stroke-width="3.6">Thenhoven</text>
<text x="1396.5" y="292.9" font-size="23.4" font-weight="400" stroke-width="3.6">Stommelerbusch</text>
<text x="2089.0" y="293.4" font-size="23.4" font-weight="400" stroke-width="3.6">Rheinkassel</text>
<text x="2190.5" y="396.9" font-size="23.4" font-weight="400" stroke-width="3.6">Merkenich</text>
<text x="1589.0" y="410.9" font-size="23.4" font-weight="400" stroke-width="3.6">Sinnersdorf</text>
<text x="1735.0" y="560.9" font-size="23.4" font-weight="400" stroke-width="3.6">Auweiler</text>
<text x="1442.5" y="701.9" font-size="23.4" font-weight="400" stroke-width="3.6">Geyen</text>
<text x="2321.5" y="330.0" font-size="30.5" font-weight="400" stroke-width="4.2">Leverkusen</text>
<text x="2321.5" y="330.0" font-size="30.5" stroke="#fff" stroke-width="1.1" paint-order="normal">Leverkusen</text>
<text x="1518.5" y="567.4" font-size="27.4" font-weight="400" stroke-width="3.8">Pulheim</text>
<text x="2899.0" y="153.4" font-size="23.4" font-weight="400" stroke-width="3.6">Blecher</text>
<text x="3139.5" y="212.4" font-size="23.4" font-weight="400" stroke-width="3.6">Neschen</text>
<text x="3616.0" y="265.4" font-size="23.4" font-weight="400" stroke-width="3.6">Olpe</text>
<text x="2843.0" y="275.9" font-size="23.4" font-weight="400" stroke-width="3.6">Glöbusch</text>
<text x="3102.0" y="274.9" font-size="23.4" font-weight="400" stroke-width="3.6">Scheuren</text>
<text x="3283.5" y="301.4" font-size="23.4" font-weight="400" stroke-width="3.6">Bechen</text>
<text x="3554.0" y="394.9" font-size="23.4" font-weight="400" stroke-width="3.6">Sülze</text>
<text x="2995.0" y="412.9" font-size="23.4" font-weight="400" stroke-width="3.6">Höffe</text>
<text x="3175.5" y="444.9" font-size="23.4" font-weight="400" stroke-width="3.6">Eikamp</text>
<text x="3425.5" y="435.4" font-size="23.4" font-weight="400" stroke-width="3.6">Biesfeld</text>
<text x="3254.5" y="509.9" font-size="23.4" font-weight="400" stroke-width="3.6">Spitze</text>
<text x="3195.5" y="646.4" font-size="23.4" font-weight="400" stroke-width="3.6">Herkenrath</text>
<text x="3503.0" y="182.9" font-size="27.4" font-weight="400" stroke-width="3.8">Kürten</text>
<text x="2880.0" y="329.4" font-size="27.4" font-weight="400" stroke-width="3.8">Odenthal</text>
<text x="2925.5" y="562.0" font-size="30.5" font-weight="400" stroke-width="4.2">Bergisch</text>
<text x="2925.5" y="562.0" font-size="30.5" stroke="#fff" stroke-width="1.1" paint-order="normal">Bergisch</text>
<text x="2925.5" y="601.0" font-size="30.5" font-weight="400" stroke-width="4.2">Gladbach</text>
<text x="2925.5" y="601.0" font-size="30.5" stroke="#fff" stroke-width="1.1" paint-order="normal">Gladbach</text>
<text x="1416.5" y="760.4" font-size="23.4" font-weight="400" stroke-width="3.6">Sinthern</text>
<text x="1334.0" y="1239.4" font-size="23.4" font-weight="400" stroke-width="3.6">Grefrath</text>
<text x="1728.0" y="1245.9" font-size="23.4" font-weight="400" stroke-width="3.6">Sielsdorf</text>
<text x="1791.0" y="1299.4" font-size="23.4" font-weight="400" stroke-width="3.6">Stotzheim</text>
<text x="2200.0" y="977.0" font-size="30.5" font-weight="400" stroke-width="4.2">Cologne</text>
<text x="2200.0" y="977.0" font-size="30.5" stroke="#fff" stroke-width="1.1" paint-order="normal">Cologne</text>
<text x="1543.0" y="1174.9" font-size="27.4" font-weight="400" stroke-width="3.8">Frechen</text>
<text x="3486.0" y="737.9" font-size="23.4" font-weight="400" stroke-width="3.6">Brombach</text>
<text x="3171.5" y="798.4" font-size="23.4" font-weight="400" stroke-width="3.6">Moitzfeld</text>
<text x="3698.0" y="870.9" font-size="23.4" font-weight="400" stroke-width="3.6">Rott</text>
<text x="3137.5" y="1095.9" font-size="23.4" font-weight="400" stroke-width="3.6">Forsbach</text>
<text x="3402.5" y="1124.9" font-size="23.4" font-weight="400" stroke-width="3.6">Durbusch</text>
<text x="3221.0" y="1164.4" font-size="23.4" font-weight="400" stroke-width="3.6">Hoffnungsthal</text>
<text x="3509.5" y="1186.9" font-size="23.4" font-weight="400" stroke-width="3.6">Agger</text>
<text x="3021.0" y="1216.4" font-size="23.4" font-weight="400" stroke-width="3.6">Kleineichen</text>
<text x="3601.0" y="1021.9" font-size="27.4" font-weight="400" stroke-width="3.8">Overath</text>
<text x="3162.5" y="1266.4" font-size="27.4" font-weight="400" stroke-width="3.8">Rösrath</text>
<text x="1664.0" y="1328.4" font-size="23.4" font-weight="400" stroke-width="3.6">Gleuel</text>
<text x="2098.5" y="1394.4" font-size="23.4" font-weight="400" stroke-width="3.6">Höningen</text>
<text x="1571.0" y="1434.9" font-size="23.4" font-weight="400" stroke-width="3.6">Berrenrath</text>
<text x="1279.0" y="1507.4" font-size="23.4" font-weight="400" stroke-width="3.6">Türnich</text>
<text x="1876.0" y="1512.9" font-size="23.4" font-weight="400" stroke-width="3.6">Kendenich</text>
<text x="1744.0" y="1540.4" font-size="23.4" font-weight="400" stroke-width="3.6">Knapsack</text>
<text x="1909.0" y="1552.4" font-size="23.4" font-weight="400" stroke-width="3.6">Fischenich</text>
<text x="2190.0" y="1540.9" font-size="23.4" font-weight="400" stroke-width="3.6">Immendorf</text>
<text x="1396.0" y="1617.9" font-size="23.4" font-weight="400" stroke-width="3.6">Brüggen</text>
<text x="1263.0" y="1699.9" font-size="23.4" font-weight="400" stroke-width="3.6">Gymnich</text>
<text x="1839.0" y="1372.9" font-size="27.4" font-weight="400" stroke-width="3.8">Hürth</text>
<text x="1956.5" y="1727.4" font-size="27.4" font-weight="400" stroke-width="3.8">Brühl</text>
<text x="2291.0" y="1757.4" font-size="27.4" font-weight="400" stroke-width="3.8">Wesseling</text>
<text x="3199.5" y="1324.4" font-size="23.4" font-weight="400" stroke-width="3.6">Menzlingen</text>
<text x="3567.0" y="1346.4" font-size="23.4" font-weight="400" stroke-width="3.6">Höffen</text>
<text x="3211.0" y="1380.4" font-size="23.4" font-weight="400" stroke-width="3.6">Rambrücken</text>
<text x="3483.0" y="1466.4" font-size="23.4" font-weight="400" stroke-width="3.6">Hausen</text>
<text x="3549.0" y="1580.4" font-size="23.4" font-weight="400" stroke-width="3.6">Breidt</text>
<text x="3507.0" y="1619.9" font-size="23.4" font-weight="400" stroke-width="3.6">Geber</text>
<text x="2681.5" y="1682.4" font-size="23.4" font-weight="400" stroke-width="3.6">Libur</text>
<text x="3627.0" y="1683.4" font-size="23.4" font-weight="400" stroke-width="3.6">Straßen</text>
<text x="2517.5" y="1717.4" font-size="23.4" font-weight="400" stroke-width="3.6">Ranzel</text>
<text x="3293.0" y="1651.4" font-size="27.4" font-weight="400" stroke-width="3.8">Lohmar</text>
<text x="3761.0" y="442.4" font-size="23.4" font-weight="400" stroke-width="3.6">Linde</text>
<text x="767.0" y="121.4" font-size="23.4" font-weight="400" stroke-width="3.6">Allrath</text>
<text x="922.0" y="119.4" font-size="23.4" font-weight="400" stroke-width="3.6">Oekoven</text>
<text x="1140.6" y="154.4" font-size="23.4" font-weight="400" stroke-width="3.6">Anstel</text>
<text x="440.0" y="117.0" font-size="30.5" font-weight="400" stroke-width="4.2">Grevenbroich</text>
<text x="440.0" y="117.0" font-size="30.5" stroke="#fff" stroke-width="1.1" paint-order="normal">Grevenbroich</text>
<text x="566.0" y="264.9" font-size="27.4" font-weight="400" stroke-width="3.8">Rommerskirchen</text>
<text x="551.0" y="572.9" font-size="27.4" font-weight="400" stroke-width="3.8">Bedburg</text>
<text x="515.6" y="986.6" font-size="27.4" font-weight="400" stroke-width="3.8">Elsdorf</text>
<text x="557.0" y="1674.6" font-size="27.4" font-weight="400" stroke-width="3.8">Golzheim</text>
<text x="3795.0" y="1516.9" font-size="27.4" font-weight="400" stroke-width="3.8">Neunkirchen-</text>
<text x="3805.0" y="1552.9" font-size="27.4" font-weight="400" stroke-width="3.8">Seelscheid</text>
<text x="3808.0" y="1732.4" font-size="23.4" font-weight="400" stroke-width="3.6">Wolperath</text>
</g>
<g transform="translate(2969 1480)"><path d="M0 -13c1.6 0 2.3 1.6 2.3 3.4v5.2l11 6.6v2.9l-11 -3.4v6.2l3.4 2.6v2.2l-5.7 -1.7l-5.7 1.7v-2.2l3.4 -2.6v-6.2l-11 3.4v-2.9l11 -6.6v-5.2c0 -1.8 0.7 -3.4 2.3 -3.4z" fill="#5b9be8" stroke="#121b2e" stroke-width="1.2"/></g>
<text x="2969" y="1518.5" font-family="Liberation Sans, sans-serif" font-size="19" text-anchor="middle" fill="#5b9be8" stroke="#121b2e" stroke-width="3.5" paint-order="stroke" stroke-linejoin="round">CGN</text>
<g font-family="Liberation Sans, sans-serif" font-size="19" text-anchor="middle">
<rect x="2314.0" y="172.5" width="50" height="28" rx="4.5" fill="#0e0f12" stroke="#f4f4f4" stroke-width="1.6"/>
<text x="2339.0" y="193.3" fill="#fff" font-weight="700">A 3</text>
<rect x="2397.5" y="256.0" width="50" height="28" rx="4.5" fill="#0e0f12" stroke="#f4f4f4" stroke-width="1.6"/>
<text x="2422.5" y="276.8" fill="#fff" font-weight="700">A 1</text>
<rect x="1749.0" y="433.5" width="63" height="28" rx="4.5" fill="#0e0f12" stroke="#f4f4f4" stroke-width="1.6"/>
<text x="1780.5" y="454.3" fill="#fff" font-weight="700">A 57</text>
<rect x="1781.5" y="618.5" width="50" height="28" rx="4.5" fill="#0e0f12" stroke="#f4f4f4" stroke-width="1.6"/>
<text x="1806.5" y="639.3" fill="#fff" font-weight="700">A 1</text>
<rect x="1990.5" y="753.0" width="63" height="28" rx="4.5" fill="#0e0f12" stroke="#f4f4f4" stroke-width="1.6"/>
<text x="2022.0" y="773.8" fill="#fff" font-weight="700">A 57</text>
<rect x="2366.0" y="917.0" width="70" height="28" rx="4.5" fill="#0e0f12" stroke="#f4f4f4" stroke-width="1.6"/>
<text x="2401.0" y="937.8" fill="#fff" font-weight="400">B 55A</text>
<rect x="2347.0" y="1073.0" width="70" height="28" rx="4.5" fill="#0e0f12" stroke="#f4f4f4" stroke-width="1.6"/>
<text x="2382.0" y="1093.8" fill="#fff" font-weight="700">L 124</text>
<rect x="1744.0" y="1100.0" width="50" height="28" rx="4.5" fill="#0e0f12" stroke="#f4f4f4" stroke-width="1.6"/>
<text x="1769.0" y="1120.8" fill="#fff" font-weight="700">A 4</text>
<rect x="1674.5" y="1131.0" width="50" height="28" rx="4.5" fill="#0e0f12" stroke="#f4f4f4" stroke-width="1.6"/>
<text x="1699.5" y="1151.8" fill="#fff" font-weight="700">A 1</text>
<rect x="1217.0" y="1163.5" width="50" height="28" rx="4.5" fill="#0e0f12" stroke="#f4f4f4" stroke-width="1.6"/>
<text x="1242.0" y="1184.3" fill="#fff" font-weight="700">A 4</text>
<rect x="2465.0" y="721.0" width="50" height="28" rx="4.5" fill="#0e0f12" stroke="#f4f4f4" stroke-width="1.6"/>
<text x="2490.0" y="741.8" fill="#fff" font-weight="700">A 3</text>
<rect x="2508.0" y="881.0" width="50" height="28" rx="4.5" fill="#0e0f12" stroke="#f4f4f4" stroke-width="1.6"/>
<text x="2533.0" y="901.8" fill="#fff" font-weight="700">A 3</text>
<rect x="3127.0" y="850.0" width="50" height="28" rx="4.5" fill="#0e0f12" stroke="#f4f4f4" stroke-width="1.6"/>
<text x="3152.0" y="870.8" fill="#fff" font-weight="700">A 4</text>
<rect x="3673.0" y="930.5" width="50" height="28" rx="4.5" fill="#0e0f12" stroke="#f4f4f4" stroke-width="1.6"/>
<text x="3698.0" y="951.3" fill="#fff" font-weight="700">A 4</text>
<rect x="2624.5" y="1149.5" width="63" height="28" rx="4.5" fill="#0e0f12" stroke="#f4f4f4" stroke-width="1.6"/>
<text x="2656.0" y="1170.3" fill="#fff" font-weight="700">A 59</text>
<rect x="2848.0" y="1179.5" width="50" height="28" rx="4.5" fill="#0e0f12" stroke="#f4f4f4" stroke-width="1.6"/>
<text x="2873.0" y="1200.3" fill="#fff" font-weight="700">A 3</text>
<rect x="2251.0" y="1314.5" width="50" height="28" rx="4.5" fill="#0e0f12" stroke="#f4f4f4" stroke-width="1.6"/>
<text x="2276.0" y="1335.3" fill="#fff" font-weight="700">A 4</text>
<rect x="2204.0" y="1402.0" width="70" height="28" rx="4.5" fill="#0e0f12" stroke="#f4f4f4" stroke-width="1.6"/>
<text x="2239.0" y="1422.8" fill="#fff" font-weight="700">A 555</text>
<rect x="2092.5" y="1582.0" width="70" height="28" rx="4.5" fill="#0e0f12" stroke="#f4f4f4" stroke-width="1.6"/>
<text x="2127.5" y="1602.8" fill="#fff" font-weight="400">L 150</text>
<rect x="1485.0" y="1629.5" width="50" height="28" rx="4.5" fill="#0e0f12" stroke="#f4f4f4" stroke-width="1.6"/>
<text x="1510.0" y="1650.3" fill="#fff" font-weight="700">A 1</text>
<rect x="2025.5" y="1690.0" width="70" height="28" rx="4.5" fill="#0e0f12" stroke="#f4f4f4" stroke-width="1.6"/>
<text x="2060.5" y="1710.8" fill="#fff" font-weight="700">A 553</text>
<rect x="2746.5" y="1697.0" width="63" height="28" rx="4.5" fill="#0e0f12" stroke="#f4f4f4" stroke-width="1.6"/>
<text x="2778.0" y="1717.8" fill="#fff" font-weight="700">A 59</text>
<rect x="3765.0" y="820.0" width="50" height="28" rx="4.5" fill="#0e0f12" stroke="#f4f4f4" stroke-width="1.6"/>
<text x="3790.0" y="840.8" fill="#fff" font-weight="700">A 4</text>
</g>
<g fill="#e8731a">
<path d="M1949.0 702.0l13 13l-13 13l-13 -13z"/>
<path d="M2170.0 707.0l13 13l-13 13l-13 -13z"/>
<path d="M2180.0 695.5l13 13l-13 13l-13 -13z"/>
<path d="M2042.0 776.0l13 13l-13 13l-13 -13z"/>
<path d="M2387.5 778.0l13 13l-13 13l-13 -13z"/>
<path d="M2256.0 809.0l13 13l-13 13l-13 -13z"/>
<path d="M2166.5 819.0l13 13l-13 13l-13 -13z"/>
<path d="M2455.0 803.0l13 13l-13 13l-13 -13z"/>
<path d="M2020.0 852.0l13 13l-13 13l-13 -13z"/>
<path d="M2145.0 853.0l13 13l-13 13l-13 -13z"/>
<path d="M2190.0 909.0l13 13l-13 13l-13 -13z"/>
<path d="M1971.5 964.5l13 13l-13 13l-13 -13z"/>
<path d="M2431.0 961.5l13 13l-13 13l-13 -13z"/>
<path d="M2209.0 969.0l13 13l-13 13l-13 -13z"/>
<path d="M2199.5 1021.5l13 13l-13 13l-13 -13z"/>
<path d="M2103.0 1041.0l13 13l-13 13l-13 -13z"/>
<path d="M2317.0 1061.5l13 13l-13 13l-13 -13z"/>
<path d="M1954.0 1073.0l13 13l-13 13l-13 -13z"/>
<path d="M1959.0 1091.5l13 13l-13 13l-13 -13z"/>
<path d="M2299.5 1087.5l13 13l-13 13l-13 -13z"/>
<path d="M2031.0 1096.0l13 13l-13 13l-13 -13z"/>
<path d="M2113.0 1093.0l13 13l-13 13l-13 -13z"/>
<path d="M2281.0 1176.0l13 13l-13 13l-13 -13z"/>
<path d="M2411.0 1197.0l13 13l-13 13l-13 -13z"/>
<path d="M2101.0 1261.0l13 13l-13 13l-13 -13z"/>
<path d="M1946.5 1270.5l13 13l-13 13l-13 -13z"/>
<path d="M2451.0 684.0l13 13l-13 13l-13 -13z"/>
<path d="M2480.0 750.0l13 13l-13 13l-13 -13z"/>
</g>
</svg>
<div id="sb"></div>
<div id="logo"><svg viewBox="0 0 68 68" width="68" height="68"><rect x="0" y="10" width="68" height="48.5" fill="#fff"/><g fill="none" stroke="#e8701a" stroke-width="1.1" stroke-linecap="round"><circle cx="13.6" cy="32.3" r="2.6" fill="#e8701a" fill-opacity="0.55"/><path d="M7.6 30.4c1.4 -1.6 3 -1.4 3.8 0M19.6 30.4c-1.4 -1.6 -3 -1.4 -3.8 0M7.4 33.6c1.4 1.5 3 1.4 3.9 0.2M19.8 33.6c-1.4 1.5 -3 1.4 -3.9 0.2M9.6 36.4l2 -1.6M17.6 36.4l-2 -1.6M10.4 27.6l2 1.8M16.8 27.6l-2 1.8M13.6 26v2"/></g><text x="24.8" y="35.7" font-family="Liberation Sans, sans-serif" font-weight="700" font-size="9" textLength="37.3" lengthAdjust="spacingAndGlyphs" fill="#e8701a">Stadt Köln</text></svg></div>
<div class="t" style="left:101.3px;top:34.10px;font-size:28px;line-height:28px;color:#0a0a0a;font-weight:700;letter-spacing:0.05px">Cologne Landscape …</div>
<div class="t" style="left:101.4px;top:68.68px;font-size:24px;line-height:24px;color:#6b7280;font-weight:400;">in Geocadra</div>
<svg class="ic" style="left:430.7px;top:47.0px;width:32px;height:32px" viewBox="0 0 24 24" fill="none" stroke="#6b7280" stroke-width="2" stroke-linecap="round" stroke-linejoin="round"><path d="M8 9l4 -4l4 4"/><path d="M16 15l-4 4l-4 -4"/></svg>
<div id="act"></div>
<svg class="ic" style="left:21.0px;top:159.0px;width:32px;height:32px" viewBox="0 0 24 24" fill="none" stroke="#6b7080" stroke-width="2" stroke-linecap="round" stroke-linejoin="round"><path d="M5 12l-2 0l9 -9l9 9l-2 0"/><path d="M5 12v7a2 2 0 0 0 2 2h10a2 2 0 0 0 2 -2v-7"/><path d="M9 21v-6a2 2 0 0 1 2 -2h2a2 2 0 0 1 2 2v6"/></svg>
<div class="t" style="left:69.3px;top:160.60px;font-size:28px;line-height:28px;color:#0a0a0a;font-weight:400;">Dashboard</div>
<svg class="ic" style="left:21.0px;top:223.0px;width:32px;height:32px" viewBox="0 0 24 24" fill="none" stroke="#6b7080" stroke-width="2" stroke-linecap="round" stroke-linejoin="round"><path d="M5 19l2.757 -7.351a1 1 0 0 1 .936 -.649h12.307a1 1 0 0 1 .986 1.164l-.996 5.211a2 2 0 0 1 -1.964 1.625h-14.026a2 2 0 0 1 -2 -2v-11a2 2 0 0 1 2 -2h4l3 3h7a2 2 0 0 1 2 2v2"/></svg>
<div class="t" style="left:69.3px;top:224.60px;font-size:28px;line-height:28px;color:#0a0a0a;font-weight:400;">Projects</div>
<svg class="ic" style="left:21.0px;top:287.0px;width:32px;height:32px" viewBox="0 0 24 24" fill="none" stroke="#45b649" stroke-width="2" stroke-linecap="round" stroke-linejoin="round"><path d="M3 7l6 -3l6 3l6 -3v13l-6 3l-6 -3l-6 3v-13"/><path d="M9 4v13"/><path d="M15 7v13"/></svg>
<div class="t" style="left:69.3px;top:288.60px;font-size:28px;line-height:28px;color:#0a0a0a;font-weight:400;">Map</div>
<svg class="ic" style="left:21.0px;top:351.0px;width:32px;height:32px" viewBox="0 0 24 24" fill="none" stroke="#6b7080" stroke-width="2" stroke-linecap="round" stroke-linejoin="round"><path d="M12 4l-8 4l8 4l8 -4l-8 -4"/><path d="M4 12l8 4l8 -4"/><path d="M4 16l8 4l8 -4"/></svg>
<div class="t" style="left:69.3px;top:352.60px;font-size:28px;line-height:28px;color:#0a0a0a;font-weight:400;">Layers</div>
<div class="t" style="left:21.0px;top:450.68px;font-size:24px;line-height:24px;color:#4b5563;font-weight:400;">Tools</div>
<svg class="ic" style="left:21.0px;top:511.0px;width:32px;height:32px" viewBox="0 0 24 24" fill="none" stroke="#6b7080" stroke-width="2" stroke-linecap="round" stroke-linejoin="round"><path d="M14 3v4a1 1 0 0 0 1 1h4"/><path d="M5 13v-8a2 2 0 0 1 2 -2h7l5 5v11a2 2 0 0 1 -2 2h-5.5m-9.5 -2h7m-3 -3l3 3l-3 3"/></svg>
<div class="t" style="left:69.3px;top:512.60px;font-size:28px;line-height:28px;color:#0a0a0a;font-weight:400;">New Layer</div>
<div class="t" style="left:21.0px;top:610.68px;font-size:24px;line-height:24px;color:#4b5563;font-weight:400;">Org Settings</div>
<svg class="ic" style="left:21.0px;top:671.0px;width:32px;height:32px" viewBox="0 0 24 24" fill="none" stroke="#6b7080" stroke-width="2" stroke-linecap="round" stroke-linejoin="round"><path d="M10.325 4.317c.426 -1.756 2.924 -1.756 3.35 0a1.724 1.724 0 0 0 2.573 1.066c1.543 -.94 3.31 .826 2.37 2.37a1.724 1.724 0 0 0 1.065 2.572c1.756 .426 1.756 2.924 0 3.35a1.724 1.724 0 0 0 -1.066 2.573c.94 1.543 -.826 3.31 -2.37 2.37a1.724 1.724 0 0 0 -2.572 1.065c-.426 1.756 -2.924 1.756 -3.35 0a1.724 1.724 0 0 0 -2.573 -1.066c-1.543 .94 -3.31 -.826 -2.37 -2.37a1.724 1.724 0 0 0 -1.065 -2.572c-1.756 -.426 -1.756 -2.924 0 -3.35a1.724 1.724 0 0 0 1.066 -2.573c-.94 -1.543 .826 -3.31 2.37 -2.37c1 .608 2.296 .07 2.572 -1.065z"/><path d="M9 12a3 3 0 1 0 6 0a3 3 0 0 0 -6 0"/></svg>
<div class="t" style="left:69.3px;top:672.60px;font-size:28px;line-height:28px;color:#0a0a0a;font-weight:400;">General</div>
<svg class="ic" style="left:21.0px;top:735.0px;width:32px;height:32px" viewBox="0 0 24 24" fill="none" stroke="#6b7080" stroke-width="2" stroke-linecap="round" stroke-linejoin="round"><path d="M9 7m-4 0a4 4 0 1 0 8 0a4 4 0 1 0 -8 0"/><path d="M3 21v-2a4 4 0 0 1 4 -4h4a4 4 0 0 1 4 4v2"/><path d="M16 3.13a4 4 0 0 1 0 7.75"/><path d="M21 21v-2a4 4 0 0 0 -3 -3.85"/></svg>
<div class="t" style="left:69.3px;top:736.60px;font-size:28px;line-height:28px;color:#0a0a0a;font-weight:400;">Team</div>
<svg class="ic" style="left:21.0px;top:1698.0px;width:32px;height:32px" viewBox="0 0 24 24" fill="none" stroke="#6b7080" stroke-width="2" stroke-linecap="round" stroke-linejoin="round"><path d="M4 4m0 1a1 1 0 0 1 1 -1h4a1 1 0 0 1 1 1v4a1 1 0 0 1 -1 1h-4a1 1 0 0 1 -1 -1z"/><path d="M14 4m0 1a1 1 0 0 1 1 -1h4a1 1 0 0 1 1 1v4a1 1 0 0 1 -1 1h-4a1 1 0 0 1 -1 -1z"/><path d="M4 14m0 1a1 1 0 0 1 1 -1h4a1 1 0 0 1 1 1v4a1 1 0 0 1 -1 1h-4a1 1 0 0 1 -1 -1z"/><path d="M14 14m0 1a1 1 0 0 1 1 -1h4a1 1 0 0 1 1 1v4a1 1 0 0 1 -1 1h-4a1 1 0 0 1 -1 -1z"/></svg>
<div class="t" style="left:69.3px;top:1699.10px;font-size:28px;line-height:28px;color:#6b7280;font-weight:400;">Overview</div>
<div id="top"></div>
<svg class="ic" style="left:533.0px;top:39.0px;width:32px;height:32px" viewBox="0 0 24 24" fill="none" stroke="#0a0a0a" stroke-width="2" stroke-linecap="round" stroke-linejoin="round"><path d="M4 4m0 2a2 2 0 0 1 2 -2h12a2 2 0 0 1 2 2v12a2 2 0 0 1 -2 2h-12a2 2 0 0 1 -2 -2z"/><path d="M9 4l0 16"/></svg>
<div class="t" style="left:593.1px;top:40.70px;font-size:28px;line-height:28px;color:#6b7280;font-weight:400;">Geocadra</div>
<svg class="ic" style="left:725.7px;top:41.0px;width:28px;height:28px" viewBox="0 0 24 24" fill="none" stroke="#9ca3af" stroke-width="2" stroke-linecap="round" stroke-linejoin="round"><path d="M9 6l6 6l-6 6"/></svg>
<div class="t" style="left:764.4px;top:40.70px;font-size:28px;line-height:28px;color:#6b7280;font-weight:400;">Cologne Landscape …</div>
<svg class="ic" style="left:1073.0px;top:41.0px;width:28px;height:28px" viewBox="0 0 24 24" fill="none" stroke="#9ca3af" stroke-width="2" stroke-linecap="round" stroke-linejoin="round"><path d="M9 6l6 6l-6 6"/></svg>
<div class="t" style="left:1111.7px;top:40.70px;font-size:28px;line-height:28px;color:#0a0a0a;font-weight:400;">Map</div>
<div id="fb"></div>
<svg class="ic" style="left:3619.0px;top:39.0px;width:32px;height:32px" viewBox="0 0 24 24" fill="none" stroke="#0a0a0a" stroke-width="2" stroke-linecap="round" stroke-linejoin="round"><path d="M18 4a3 3 0 0 1 3 3v8a3 3 0 0 1 -3 3h-5l-5 3v-3h-2a3 3 0 0 1 -3 -3v-8a3 3 0 0 1 3 -3h12z"/><path d="M12 8v3"/><path d="M12 14v.01"/></svg>
<div class="t" style="left:3658.6px;top:42.24px;font-size:25.7px;line-height:25.7px;color:#0a0a0a;font-weight:400;">Feedback</div>
<div id="panel"><div class="hl" style="top:121px"></div><div class="hl" style="top:219px"></div></div>
<div class="t" style="left:563.7px;top:188.91px;font-size:32px;line-height:32px;color:#0a0a0a;font-weight:700;">Layers</div>
<svg class="ic" style="left:967.0px;top:189.0px;width:32px;height:32px" viewBox="0 0 24 24" fill="none" stroke="#0a0a0a" stroke-width="2" stroke-linecap="round" stroke-linejoin="round"><path d="M10 12a2 2 0 1 0 4 0a2 2 0 0 0 -4 0"/><path d="M21 12c-2.4 4 -5.4 6 -9 6c-3.6 0 -6.6 -2 -9 -6c2.4 -4 5.4 -6 9 -6c3.6 0 6.6 2 9 6"/></svg>
<div class="t" style="left:1014.0px;top:191.99px;font-size:26px;line-height:26px;color:#0a0a0a;font-weight:400;">Show All</div>
<div id="search"></div>
<svg class="ic" style="left:574.7px;top:299.3px;width:32px;height:32px" viewBox="0 0 24 24" fill="none" stroke="#6b7280" stroke-width="2" stroke-linecap="round" stroke-linejoin="round"><path d="M10 10m-7 0a7 7 0 1 0 14 0a7 7 0 1 0 -14 0"/><path d="M21 21l-6 -6"/></svg>
<div class="t" style="left:621.4px;top:300.30px;font-size:28px;line-height:28px;color:#6b7280;font-weight:400;">Search layers...</div>
<div class="cb" style="left:555px;top:397px"></div>
<svg class="ic" style="left:603.0px;top:399.0px;width:28px;height:28px" viewBox="0 0 24 24" fill="none" stroke="#4b5060" stroke-width="2" stroke-linecap="round" stroke-linejoin="round"><path d="M6 9l6 6l6 -6"/></svg>
<svg class="ic" style="left:643.0px;top:396.5px;width:32px;height:32px" viewBox="0 0 24 24" fill="none" stroke="#45b649" stroke-width="2" stroke-linecap="round" stroke-linejoin="round"><path d="M12 13l-2 -2"/><path d="M12 12l2 -2"/><path d="M12 21v-13"/><path d="M9.824 16a3 3 0 0 1 -2.743 -3.69a3 3 0 0 1 .304 -4.833a3 3 0 0 1 4.615 -3.707a3 3 0 0 1 4.614 3.707a3 3 0 0 1 .305 4.833a3 3 0 0 1 -2.919 3.695h-4z"/></svg>
<div class="t" style="left:687.8px;top:397.84px;font-size:28px;line-height:28px;color:#0a0a0a">Green<span style="font-size:24px;color:#6b7080;margin-left:10.7px">(3)</span></div>
<div class="cb" style="left:611px;top:474px"></div>
<svg class="ic" style="left:659px;top:467px;width:40px;height:40px" viewBox="-20 -20 40 40"><path d="M0 -10.5L12 10.5H-12Z" fill="#a9c6c9" stroke="#fbfbfb" stroke-width="2" stroke-linejoin="round"/></svg>
<div class="t" style="left:715.0px;top:458.60px;font-size:28px;line-height:28px;color:#737577;font-weight:400;">Park Trees</div>
<div class="t" style="left:714.6px;top:498.28px;font-size:22px;line-height:22px;color:#a5aba8;font-weight:400;">71</div>
<svg class="ic" style="left:1036.8px;top:476.4px;width:28px;height:28px" viewBox="0 0 24 24" fill="none" stroke="#0a0a0a" stroke-width="2.3" stroke-linecap="round" stroke-linejoin="round"><path d="M4 4h16v2.172a2 2 0 0 1 -.586 1.414l-4.414 4.414v7l-6 2v-8.5l-4.48 -4.928a2 2 0 0 1 -.52 -1.345v-2.227z"/></svg>
<svg class="ic" style="left:1089.4px;top:475.8px;width:28px;height:28px" viewBox="0 0 24 24" fill="none" stroke="#0a0a0a" stroke-width="2.3" stroke-linecap="round" stroke-linejoin="round"><path d="M12 6h-6a2 2 0 0 0 -2 2v10a2 2 0 0 0 2 2h10a2 2 0 0 0 2 -2v-6"/><path d="M11 13l9 -9"/><path d="M15 4h5v5"/></svg>
<div class="cb" style="left:611px;top:567px"></div>
<svg class="ic" style="left:659px;top:563px;width:40px;height:40px" viewBox="-20 -20 40 40"><path d="M0 -12L12 0L0 12L-12 0Z" fill="#a9c6c9" stroke="#fbfbfb" stroke-width="2"/></svg>
<div class="t" style="left:715.0px;top:551.60px;font-size:28px;line-height:28px;color:#737577;font-weight:400;">Street Trees</div>
<div class="t" style="left:714.6px;top:591.28px;font-size:22px;line-height:22px;color:#a5aba8;font-weight:400;">64</div>
<svg class="ic" style="left:1036.8px;top:569.4px;width:28px;height:28px" viewBox="0 0 24 24" fill="none" stroke="#0a0a0a" stroke-width="2.3" stroke-linecap="round" stroke-linejoin="round"><path d="M4 4h16v2.172a2 2 0 0 1 -.586 1.414l-4.414 4.414v7l-6 2v-8.5l-4.48 -4.928a2 2 0 0 1 -.52 -1.345v-2.227z"/></svg>
<svg class="ic" style="left:1089.4px;top:568.8px;width:28px;height:28px" viewBox="0 0 24 24" fill="none" stroke="#0a0a0a" stroke-width="2.3" stroke-linecap="round" stroke-linejoin="round"><path d="M12 6h-6a2 2 0 0 0 -2 2v10a2 2 0 0 0 2 2h10a2 2 0 0 0 2 -2v-6"/><path d="M11 13l9 -9"/><path d="M15 4h5v5"/></svg>
<div class="cb" style="left:611px;top:660px"></div>
<svg class="ic" style="left:659px;top:657px;width:40px;height:40px" viewBox="-20 -20 40 40"><path d="M0 -16L16.2 -4.2L10 15H-10L-16.2 -4.2Z" fill="#dfe3e3" stroke="#c3cfcc" stroke-width="2.4" stroke-linejoin="round"/></svg>
<div class="t" style="left:715.0px;top:644.60px;font-size:28px;line-height:28px;color:#737577;font-weight:400;">Forestry</div>
<div class="t" style="left:714.6px;top:684.28px;font-size:22px;line-height:22px;color:#a5aba8;font-weight:400;">2.311</div>
<svg class="ic" style="left:1036.8px;top:662.4px;width:28px;height:28px" viewBox="0 0 24 24" fill="none" stroke="#0a0a0a" stroke-width="2.3" stroke-linecap="round" stroke-linejoin="round"><path d="M4 4h16v2.172a2 2 0 0 1 -.586 1.414l-4.414 4.414v7l-6 2v-8.5l-4.48 -4.928a2 2 0 0 1 -.52 -1.345v-2.227z"/></svg>
<svg class="ic" style="left:1089.4px;top:661.8px;width:28px;height:28px" viewBox="0 0 24 24" fill="none" stroke="#0a0a0a" stroke-width="2.3" stroke-linecap="round" stroke-linejoin="round"><path d="M12 6h-6a2 2 0 0 0 -2 2v10a2 2 0 0 0 2 2h10a2 2 0 0 0 2 -2v-6"/><path d="M11 13l9 -9"/><path d="M15 4h5v5"/></svg>
<div class="cb" style="left:555px;top:744px"></div>
<svg class="ic" style="left:603.0px;top:746.0px;width:28px;height:28px" viewBox="0 0 24 24" fill="none" stroke="#4b5060" stroke-width="2" stroke-linecap="round" stroke-linejoin="round"><path d="M6 9l6 6l6 -6"/></svg>
<svg class="ic" style="left:643.0px;top:743.5px;width:32px;height:32px" viewBox="0 0 24 24" fill="none" stroke="#3b8eea" stroke-width="2" stroke-linecap="round" stroke-linejoin="round"><path d="M7.502 19.423c2.602 2.105 6.395 2.105 8.996 0c2.602 -2.105 3.262 -5.708 1.566 -8.546l-4.89 -7.26c-.42 -.625 -1.287 -.803 -1.936 -.397a1.376 1.376 0 0 0 -.41 .397l-4.893 7.26c-1.695 2.838 -1.035 6.441 1.567 8.546z"/></svg>
<div class="t" style="left:687.8px;top:744.84px;font-size:28px;line-height:28px;color:#0a0a0a">Water<span style="font-size:24px;color:#6b7080;margin-left:10.7px">(1)</span></div>
<div class="cb" style="left:611px;top:821px"></div>
<svg class="ic" style="left:658px;top:820px;width:40px;height:40px" viewBox="-20 -20 40 40"><path d="M-15.8 7.6L-10 -3C-7 -8 -3 -7.5 0 -4.5C3 -1.5 6 0 9 -1C12 -2.5 13.5 -5 15 -8.1" fill="none" stroke="#a8d4ee" stroke-width="4.8" stroke-linecap="round" stroke-dasharray="0.1 6.3"/></svg>
<div class="t" style="left:715.0px;top:805.60px;font-size:28px;line-height:28px;color:#737577;font-weight:400;">Channels &amp; Ditc…</div>
<div class="t" style="left:714.6px;top:845.28px;font-size:22px;line-height:22px;color:#a5aba8;font-weight:400;">35</div>
<svg class="ic" style="left:1036.8px;top:823.4px;width:28px;height:28px" viewBox="0 0 24 24" fill="none" stroke="#0a0a0a" stroke-width="2.3" stroke-linecap="round" stroke-linejoin="round"><path d="M4 4h16v2.172a2 2 0 0 1 -.586 1.414l-4.414 4.414v7l-6 2v-8.5l-4.48 -4.928a2 2 0 0 1 -.52 -1.345v-2.227z"/></svg>
<svg class="ic" style="left:1089.4px;top:822.8px;width:28px;height:28px" viewBox="0 0 24 24" fill="none" stroke="#0a0a0a" stroke-width="2.3" stroke-linecap="round" stroke-linejoin="round"><path d="M12 6h-6a2 2 0 0 0 -2 2v10a2 2 0 0 0 2 2h10a2 2 0 0 0 2 -2v-6"/><path d="M11 13l9 -9"/><path d="M15 4h5v5"/></svg>
<div class="cb half" style="left:555px;top:906px"></div>
<svg class="ic" style="left:559.5px;top:910.8px;width:23px;height:23px" viewBox="0 0 24 24" fill="none" stroke="#ffffff" stroke-width="2.7" stroke-linecap="round" stroke-linejoin="round"><path d="M5 12l5 5l10 -10"/></svg>
<svg class="ic" style="left:603.0px;top:908.0px;width:28px;height:28px" viewBox="0 0 24 24" fill="none" stroke="#4b5060" stroke-width="2" stroke-linecap="round" stroke-linejoin="round"><path d="M6 9l6 6l6 -6"/></svg>
<svg class="ic" style="left:643.0px;top:905.5px;width:32px;height:32px" viewBox="0 0 24 24" fill="none" stroke="#e8701a" stroke-width="2" stroke-linecap="round" stroke-linejoin="round"><path d="M5 11a2 2 0 0 1 2 2v2h10v-2a2 2 0 1 1 4 0v4a2 2 0 0 1 -2 2h-14a2 2 0 0 1 -2 -2v-4a2 2 0 0 1 2 -2z"/><path d="M5 11v-5a3 3 0 0 1 3 -3h8a3 3 0 0 1 3 3v5"/><path d="M6 19v2"/><path d="M18 19v2"/></svg>
<div class="t" style="left:687.8px;top:906.84px;font-size:28px;line-height:28px;color:#0a0a0a">Furniture<span style="font-size:24px;color:#6b7080;margin-left:10.7px">(2)</span></div>
<div class="cb on" style="left:611px;top:983px"></div>
<svg class="ic" style="left:615.5px;top:987.8px;width:23px;height:23px" viewBox="0 0 24 24" fill="none" stroke="#ffffff" stroke-width="2.7" stroke-linecap="round" stroke-linejoin="round"><path d="M5 12l5 5l10 -10"/></svg>
<svg class="ic" style="left:659px;top:979px;width:40px;height:40px" viewBox="-20 -20 40 40"><path d="M0 -16L16 0L0 16L-16 0Z" fill="#e8701a"/></svg>
<div class="t" style="left:715.0px;top:967.60px;font-size:28px;line-height:28px;color:#0a0a0a;font-weight:400;">Litter Bins</div>
<div class="t" style="left:714.6px;top:1007.28px;font-size:22px;line-height:22px;color:#666a6d;font-weight:400;">28</div>
<svg class="ic" style="left:1036.8px;top:985.4px;width:28px;height:28px" viewBox="0 0 24 24" fill="none" stroke="#0a0a0a" stroke-width="2.3" stroke-linecap="round" stroke-linejoin="round"><path d="M4 4h16v2.172a2 2 0 0 1 -.586 1.414l-4.414 4.414v7l-6 2v-8.5l-4.48 -4.928a2 2 0 0 1 -.52 -1.345v-2.227z"/></svg>
<svg class="ic" style="left:1089.4px;top:984.8px;width:28px;height:28px" viewBox="0 0 24 24" fill="none" stroke="#0a0a0a" stroke-width="2.3" stroke-linecap="round" stroke-linejoin="round"><path d="M12 6h-6a2 2 0 0 0 -2 2v10a2 2 0 0 0 2 2h10a2 2 0 0 0 2 -2v-6"/><path d="M11 13l9 -9"/><path d="M15 4h5v5"/></svg>
<div class="cb" style="left:611px;top:1076px"></div>
<svg class="ic" style="left:659px;top:1071px;width:40px;height:40px" viewBox="-20 -20 40 40"><path d="M0 -15L15.2 -4L9.4 14H-9.4L-15.2 -4Z" fill="#f6c998"/></svg>
<div class="t" style="left:715.0px;top:1060.60px;font-size:28px;line-height:28px;color:#737577;font-weight:400;">Benches</div>
<div class="t" style="left:714.6px;top:1100.28px;font-size:22px;line-height:22px;color:#a5aba8;font-weight:400;">46</div>
<svg class="ic" style="left:1036.8px;top:1078.4px;width:28px;height:28px" viewBox="0 0 24 24" fill="none" stroke="#0a0a0a" stroke-width="2.3" stroke-linecap="round" stroke-linejoin="round"><path d="M4 4h16v2.172a2 2 0 0 1 -.586 1.414l-4.414 4.414v7l-6 2v-8.5l-4.48 -4.928a2 2 0 0 1 -.52 -1.345v-2.227z"/></svg>
<svg class="ic" style="left:1089.4px;top:1077.8px;width:28px;height:28px" viewBox="0 0 24 24" fill="none" stroke="#0a0a0a" stroke-width="2.3" stroke-linecap="round" stroke-linejoin="round"><path d="M12 6h-6a2 2 0 0 0 -2 2v10a2 2 0 0 0 2 2h10a2 2 0 0 0 2 -2v-6"/><path d="M11 13l9 -9"/><path d="M15 4h5v5"/></svg>
<div class="cb" style="left:555px;top:1160px"></div>
<svg class="ic" style="left:603.0px;top:1162.0px;width:28px;height:28px" viewBox="0 0 24 24" fill="none" stroke="#4b5060" stroke-width="2" stroke-linecap="round" stroke-linejoin="round"><path d="M6 9l6 6l6 -6"/></svg>
<svg class="ic" style="left:643.0px;top:1159.5px;width:32px;height:32px" viewBox="0 0 24 24" fill="none" stroke="#52525b" stroke-width="2" stroke-linecap="round" stroke-linejoin="round"><path d="M3 21l18 0"/><path d="M9 8l1 0"/><path d="M9 12l1 0"/><path d="M9 16l1 0"/><path d="M14 8l1 0"/><path d="M14 12l1 0"/><path d="M14 16l1 0"/><path d="M5 21v-16a2 2 0 0 1 2 -2h10a2 2 0 0 1 2 2v16"/></svg>
<div class="t" style="left:687.8px;top:1160.84px;font-size:28px;line-height:28px;color:#0a0a0a">Buildings<span style="font-size:24px;color:#6b7080;margin-left:10.7px">(1)</span></div>
<div class="cb" style="left:611px;top:1237px"></div>
<svg class="ic" style="left:659px;top:1233px;width:40px;height:40px" viewBox="-20 -20 40 40"><circle r="15.5" fill="#d2d3d2"/></svg>
<div class="t" style="left:715.0px;top:1221.60px;font-size:28px;line-height:28px;color:#737577;font-weight:400;">Bus Shelters</div>
<div class="t" style="left:714.6px;top:1261.28px;font-size:22px;line-height:22px;color:#a5aba8;font-weight:400;">38</div>
<svg class="ic" style="left:1036.8px;top:1239.4px;width:28px;height:28px" viewBox="0 0 24 24" fill="none" stroke="#0a0a0a" stroke-width="2.3" stroke-linecap="round" stroke-linejoin="round"><path d="M4 4h16v2.172a2 2 0 0 1 -.586 1.414l-4.414 4.414v7l-6 2v-8.5l-4.48 -4.928a2 2 0 0 1 -.52 -1.345v-2.227z"/></svg>
<svg class="ic" style="left:1089.4px;top:1238.8px;width:28px;height:28px" viewBox="0 0 24 24" fill="none" stroke="#0a0a0a" stroke-width="2.3" stroke-linecap="round" stroke-linejoin="round"><path d="M12 6h-6a2 2 0 0 0 -2 2v10a2 2 0 0 0 2 2h10a2 2 0 0 0 2 -2v-6"/><path d="M11 13l9 -9"/><path d="M15 4h5v5"/></svg>
<div id="ctl"></div>
<svg class="ic" style="left:3735.0px;top:169.0px;width:32px;height:32px" viewBox="0 0 24 24" fill="none" stroke="#0a0a0a" stroke-width="2" stroke-linecap="round" stroke-linejoin="round"><path d="M12 12m-3 0a3 3 0 1 0 6 0a3 3 0 1 0 -6 0"/><path d="M12 12m-8 0a8 8 0 1 0 16 0a8 8 0 1 0 -16 0"/><path d="M12 2l0 2"/><path d="M12 20l0 2"/><path d="M20 12l2 0"/><path d="M2 12l2 0"/></svg>
<svg class="ic" style="left:3735.0px;top:241.5px;width:32px;height:32px" viewBox="0 0 24 24" fill="none" stroke="#0a0a0a" stroke-width="2" stroke-linecap="round" stroke-linejoin="round"><path d="M10 10m-7 0a7 7 0 1 0 14 0a7 7 0 1 0 -14 0"/><path d="M21 21l-6 -6"/></svg>
<svg class="ic" style="left:3735.0px;top:313.0px;width:32px;height:32px" viewBox="0 0 24 24" fill="none" stroke="#0a0a0a" stroke-width="2" stroke-linecap="round" stroke-linejoin="round"><path d="M3.707 6.293l2.586 -2.586a1 1 0 0 1 1.414 0l5.586 5.586a1 1 0 0 1 0 1.414l-2.586 2.586a1 1 0 0 1 -1.414 0l-5.586 -5.586a1 1 0 0 1 0 -1.414z"/><path d="M6 10l-3 3l3 3l3 -3"/><path d="M10 6l3 -3l3 3l-3 3"/><path d="M12 12l1.5 1.5"/><path d="M14.5 17a2.5 2.5 0 0 0 2.5 -2.5"/><path d="M15 21a6 6 0 0 0 6 -6"/></svg>
</body></html>
